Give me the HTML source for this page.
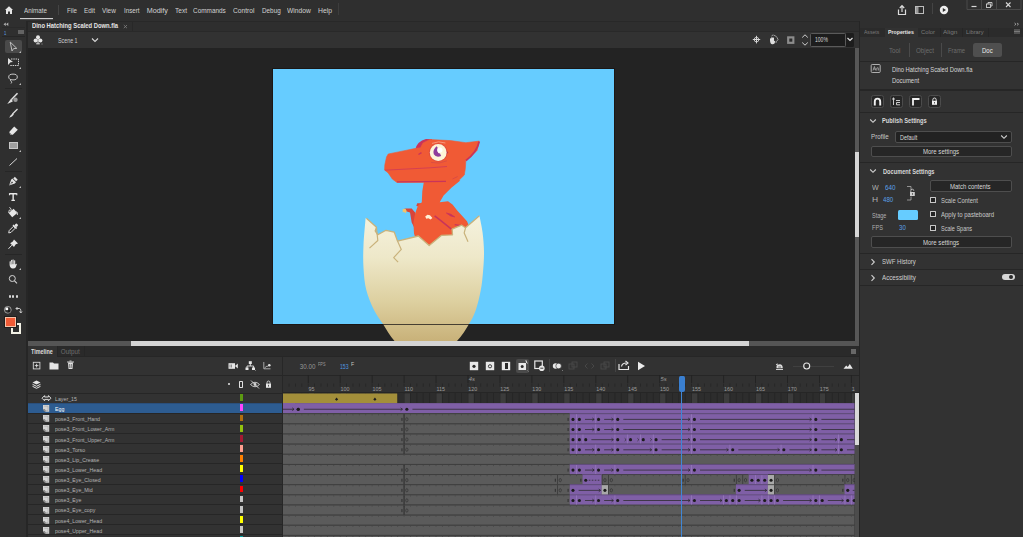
<!DOCTYPE html>
<html><head><meta charset="utf-8">
<style>
*{margin:0;padding:0;box-sizing:border-box}
html,body{width:1023px;height:537px;overflow:hidden;background:#2b2b2b;font-family:"Liberation Sans",sans-serif;color:#c8c8c8}
.a{position:absolute;display:block}
.t{position:absolute;white-space:nowrap;line-height:1;transform-origin:0 0}
</style></head><body>
<div class="a" style="left:0px;top:0px;width:1023px;height:21px;background:#2f2f2f;"></div>
<div class="a" style="left:0px;top:21px;width:26px;height:516px;background:#2f2f2f;"></div>
<div class="a" style="left:26px;top:21px;width:2px;height:516px;background:#262626;"></div>
<div class="a" style="left:28px;top:21px;width:831px;height:11px;background:#2e2e2e;"></div>
<div class="a" style="left:28px;top:21px;width:831px;height:1px;background:#282828;"></div>
<div class="a" style="left:132px;top:21px;width:1px;height:11px;background:#282828;"></div>
<div class="a" style="left:28px;top:32px;width:831px;height:16px;background:#323232;"></div>
<div class="a" style="left:28px;top:48px;width:827px;height:293px;background:#232323;"></div>
<div class="a" style="left:855px;top:48px;width:4px;height:293px;background:#575757;"></div>
<div class="a" style="left:855px;top:152px;width:4px;height:85px;background:#d6d6d6;"></div>
<div class="a" style="left:859px;top:21px;width:1px;height:516px;background:#252525;"></div>
<div class="a" style="left:272px;top:68px;width:343px;height:257px;background:#1b1716;"></div>
<div class="a" style="left:273px;top:69px;width:341px;height:255px;background:#66ccff;"></div>
<svg class="a" style="left:350px;top:130px;overflow:visible" width="150" height="212" viewBox="0 0 150 212"><path d="M65.5,19 Q67,11.5 76,9 L82,9.199999999999989 L82,12 Q74,14 71,18 Z" fill="#c9345a"/><path d="M54.50,78.50 L61.70,78.50 L65.10,82.40 L65.50,92.00 L64.00,96.90 L61.70,92.50 L60.00,82.40 L56.10,81.30 Z" fill="#d8453a"/><path d="M52.60,79.20 L55.50,78.80 L56.70,81.00 L55.50,83.30 L54.00,81.80 L52.80,82.50 Z" fill="#f3c46a"/><path d="M66.30,76.00 L67.20,73.30 L71.00,73.30 L71.50,77.00 Z" fill="#d8453a"/><path d="M74.00,51.00 L96.00,51.00 L102.00,50.00 L108.70,50.10 L110.30,50.50 L101.40,57.80 L93.60,65.60 L89.70,72.30 L98.00,71.20 L102.50,74.60 L107.00,80.20 L117.00,91.30 L119.00,96.00 L115.00,101.00 L102.00,106.00 L91.00,106.00 L79.00,117.00 L66.00,110.00 L64.00,103.60 L63.40,92.50 L65.10,83.50 L67.90,75.70 L71.80,72.30 L72.30,61.20 Z" fill="#f05a35"/><path d="M38.20,24.00 L48.40,21.90 L65.90,18.30 L70.50,17.80 L73.00,13.00 L80.00,9.60 L100.50,10.60 L115.90,12.70 L129.20,11.10 L127.10,20.40 L121.00,26.50 L115.90,30.10 L115.30,38.80 L114.30,45.00 L108.70,50.60 L96.00,52.30 L46.90,52.40 L42.30,49.00 L38.20,42.90 L34.60,40.00 L34.80,35.00 L36.50,27.00 Z" fill="#f05a35" stroke="#f05a35" stroke-width="0.6" stroke-linejoin="round"/><path d="M129.2,11.599999999999994 Q127,22 116,30.5" stroke="#c9345a" stroke-width="1.8" fill="none"/><path d="M34.80000000000001,40.19999999999999 L80,37.80000000000001 L97,36.5" stroke="#d23c55" stroke-width="0.9" fill="none"/><path d="M47,51.80000000000001 L96,51.30000000000001" stroke="#c9345a" stroke-width="1.3" fill="none"/><path d="M102.5,49 L107.69999999999999,46.5" stroke="#d84a45" stroke-width="0.9" fill="none"/><path d="M81,32.400000000000006 Q89,34.5 97,30.80000000000001" stroke="#d84a45" stroke-width="0.8" fill="none"/><path d="M82,13.400000000000006 Q88.5,10.5 95.39999999999998,13" stroke="#f7a48d" stroke-width="0.8" fill="none"/><path d="M68.5,24.5 L71.5,22.599999999999994" stroke="#c9345a" stroke-width="1.3" fill="none"/><circle cx="88.19999999999999" cy="22.5" r="9.3" fill="#dc4a3f"/><path d="M96.30000000000001,20.5 L98.30000000000001,22.5 L96.30000000000001,24.5 Z" fill="#b8304a"/><circle cx="88.19999999999999" cy="22.5" r="8.4" fill="#fdf4d8"/><path d="M86.60000000000002,16.19999999999999 Q82.19999999999999,20.19999999999999 83.80000000000001,24.19999999999999 Q86,28 91.19999999999999,26 L90,23.599999999999994 Q87.60000000000002,23.400000000000006 87.30000000000001,20.599999999999994 L87.60000000000002,17.5 Z" fill="#8f3c9c"/><circle cx="89.89999999999998" cy="20.099999999999994" r="2.6" fill="#ffffff"/><path d="M75.20,86.50 L77.50,84.80 L80.00,85.20 L82.40,88.00 L80.50,89.50 L78.50,88.20 L76.30,88.80 Z" fill="#fff1d6"/><path d="M84.60000000000002,85.80000000000001 L90.19999999999999,90.19999999999999 L101.39999999999998,99.19999999999999" stroke="#c9345a" stroke-width="1.5" fill="none"/><path d="M96.39999999999998,83 Q101,83.5 104.69999999999999,86.9 Q100,86.5 96.39999999999998,83 Z" fill="#c9345a" stroke="#c9345a" stroke-width="0.8"/><path d="M104.69999999999999,94.69999999999999 L112.60000000000002,95.80000000000001" stroke="#c9345a" stroke-width="1.2" fill="none"/><defs><linearGradient id="eg" x1="0" y1="0" x2="0" y2="1"><stop offset="0" stop-color="#f5f2de"/><stop offset="0.3" stop-color="#eee8c9"/><stop offset="0.62" stop-color="#ddd0a0"/><stop offset="0.9" stop-color="#c9b27a"/><stop offset="1" stop-color="#c2a96f"/></linearGradient></defs><path d="M16.399999999999977,88.30000000000001 L26.5,97.19999999999999 L25.19999999999999,101 L27.80000000000001,104.80000000000001 L36,100.30000000000001 L44.30000000000001,102.19999999999999 L47.5,111.1 L68.39999999999998,106 L79.19999999999999,115.6 L91.30000000000001,105.4 L102.5,104.80000000000001 L102.10000000000002,99.1 L111.69999999999999,95.19999999999999 L115.5,97.80000000000001 L129.39999999999998,85.69999999999999 C129.92,88.42 131.73,95.95 132.50,102.00 C133.27,108.05 133.92,115.33 134.00,122.00 C134.08,128.67 133.53,135.67 133.00,142.00 C132.47,148.33 132.00,153.67 130.80,160.00 C129.60,166.33 127.77,174.33 125.80,180.00 C123.83,185.67 122.13,188.83 119.00,194.00 C115.87,199.17 111.83,206.33 107.00,211.00 C102.17,215.67 95.33,219.83 90.00,222.00 C84.67,224.17 77.50,223.67 75.00,224.00 C72.50,223.67 65.08,224.17 60.00,222.00 C54.92,219.83 49.00,215.67 44.50,211.00 C40.00,206.33 36.42,199.17 33.00,194.00 C29.58,188.83 26.78,185.67 24.00,180.00 C21.22,174.33 18.05,167.00 16.30,160.00 C14.55,153.00 13.97,145.50 13.50,138.00 C13.03,130.50 13.15,123.28 13.50,115.00 C13.85,106.72 15.25,92.75 15.60,88.30 Z" fill="url(#eg)"/><path d="M16.399999999999977,88.30000000000001 L26.5,97.19999999999999 L25.19999999999999,101 L27.80000000000001,104.80000000000001 L36,100.30000000000001 L44.30000000000001,102.19999999999999 L47.5,111.1 L68.39999999999998,106 L79.19999999999999,115.6 L91.30000000000001,105.4 L102.5,104.80000000000001 L102.10000000000002,99.1 L111.69999999999999,95.19999999999999 L115.5,97.80000000000001 L129.39999999999998,85.69999999999999" stroke="#c9b27b" stroke-width="1.3" fill="none" stroke-linejoin="round"/><path d="M26.5,98.0 L27.8,110.5 L19.5,118.1" stroke="#c9b27b" stroke-width="1.2" fill="none" stroke-linejoin="round"/><path d="M47.5,111.0 L51.3,119.4 L43.7,127.6 L48.1,132.1" stroke="#c9b27b" stroke-width="1.2" fill="none" stroke-linejoin="round"/><path d="M115.5,98.0 L114.2,102.9 L118.0,111.8" stroke="#c9b27b" stroke-width="1.2" fill="none" stroke-linejoin="round"/><rect x="0" y="194" width="150" height="0.9" fill="#1b1716" opacity="0.85"/></svg>
<div class="a" style="left:28px;top:341px;width:831px;height:5px;background:#555555;"></div>
<div class="a" style="left:131px;top:341px;width:618px;height:5px;background:#d4d4d4;"></div>
<div class="a" style="left:28px;top:346px;width:831px;height:191px;background:#323232;"></div>
<div class="a" style="left:28px;top:346px;width:831px;height:10px;background:#2a2a2a;"></div>
<div class="a" style="left:28px;top:346px;width:29px;height:10px;background:#323232;"></div>
<div class="a" style="left:860px;top:21px;width:163px;height:516px;background:#323232;"></div>
<svg class="a" style="left:4px;top:5px;" width="10" height="10" viewBox="0 0 10 10"><path d="M1 5 L5 1.2 L9 5 L8 5 L8 9 L6 9 L6 6.5 L4 6.5 L4 9 L2 9 L2 5 Z" fill="#e6e6e6"/></svg>
<div class="t" style="left:24.18px;top:6.61px;font-size:7.2px;color:#d2d2d2;transform:scaleX(0.874);">Animate</div>
<div class="a" style="left:20px;top:18px;width:33px;height:1px;background:#cdcdcd;"></div>
<div class="a" style="left:20px;top:19px;width:33px;height:1px;background:#4a4a4a;"></div>
<div class="a" style="left:58px;top:5px;width:1px;height:10px;background:#444;"></div>
<div class="t" style="left:66.58px;top:6.61px;font-size:7.2px;color:#d2d2d2;transform:scaleX(0.866);">File</div>
<div class="t" style="left:84.18px;top:6.61px;font-size:7.2px;color:#d2d2d2;transform:scaleX(0.883);">Edit</div>
<div class="t" style="left:102.47px;top:6.61px;font-size:7.2px;color:#d2d2d2;transform:scaleX(0.896);">View</div>
<div class="t" style="left:123.68px;top:6.61px;font-size:7.2px;color:#d2d2d2;transform:scaleX(0.864);">Insert</div>
<div class="t" style="left:146.65px;top:6.61px;font-size:7.2px;color:#d2d2d2;">Modify</div>
<div class="t" style="left:174.67px;top:6.61px;font-size:7.2px;color:#d2d2d2;transform:scaleX(0.915);">Text</div>
<div class="t" style="left:193.18px;top:6.61px;font-size:7.2px;color:#d2d2d2;transform:scaleX(0.893);">Commands</div>
<div class="t" style="left:233.02px;top:6.61px;font-size:7.2px;color:#d2d2d2;transform:scaleX(0.926);">Control</div>
<div class="t" style="left:261.53px;top:6.61px;font-size:7.2px;color:#d2d2d2;transform:scaleX(0.882);">Debug</div>
<div class="t" style="left:287.27px;top:6.61px;font-size:7.2px;color:#d2d2d2;transform:scaleX(0.927);">Window</div>
<div class="t" style="left:318.26px;top:6.61px;font-size:7.2px;color:#d2d2d2;transform:scaleX(0.945);">Help</div>
<div class="a" style="left:338px;top:3px;width:1px;height:12px;background:#3d3d3d;"></div>
<svg class="a" style="left:896px;top:4px;" width="12" height="12" viewBox="0 0 12 12"><path d="M2.5 5.5 L2.5 10.5 L9.5 10.5 L9.5 5.5" fill="none" stroke="#dcdcdc" stroke-width="1.2"/><path d="M6 8 L6 1.8 M3.8 4 L6 1.6 L8.2 4" fill="none" stroke="#dcdcdc" stroke-width="1.2"/></svg>
<svg class="a" style="left:914px;top:5px;" width="12" height="10" viewBox="0 0 12 10"><rect x="1.5" y="1.5" width="8" height="7" fill="none" stroke="#bdbdbd" stroke-width="1"/><rect x="2" y="2" width="2.5" height="6" fill="#9a9a9a"/></svg>
<div class="a" style="left:932px;top:3px;width:1px;height:11px;background:#444;"></div>
<svg class="a" style="left:939px;top:5px;" width="10" height="10" viewBox="0 0 10 10"><circle cx="5" cy="5" r="4.2" fill="#eeeeee"/><path d="M3.8 2.9 L7 5 L3.8 7.1 Z" fill="#2f2f2f"/></svg>
<svg class="a" style="left:966px;top:0px;" width="57" height="11" viewBox="0 0 57 11"><path d="M1 0 L1 9.5 L55 9.5 L55 0" fill="none" stroke="#4a4a4a" stroke-width="1"/><path d="M15.5 0 L15.5 9.5 M30.5 0 L30.5 9.5" stroke="#4a4a4a" stroke-width="1"/><path d="M5.5 6.5 L10.5 6.5" stroke="#d8d8d8" stroke-width="1.2"/><rect x="20.5" y="4" width="4" height="3.5" fill="none" stroke="#d0d0d0" stroke-width="0.9"/><path d="M22 4 L22 2.5 L26 2.5 L26 6 L24.5 6" fill="none" stroke="#d0d0d0" stroke-width="0.9"/><path d="M40 2.5 L44.5 7 M44.5 2.5 L40 7" stroke="#d8d8d8" stroke-width="1.1"/></svg>
<svg class="a" style="left:2px;top:21px;" width="8" height="6" viewBox="0 0 8 6"><path d="M3.8 1.5 L1.5 3.2 L3.8 4.9 Z M6.3 1.5 L4 3.2 L6.3 4.9 Z" fill="#b0b0b0"/></svg>
<div class="a" style="left:2px;top:27px;width:23px;height:1px;background:#2a2a2a;"></div>
<div class="t" style="left:4.16px;top:29.92px;font-size:6.0px;color:#5a9ee6;transform:scaleX(0.684);">1</div>
<div class="a" style="left:18px;top:30px;width:6px;height:4px;background:#636363;"></div>
<div class="a" style="left:2px;top:36px;width:23px;height:1px;background:#262626;"></div>
<div class="a" style="left:5px;top:39.5px;width:17px;height:13.5px;background:#4a4a4a;border-radius:2px"></div>
<svg class="a" style="left:6px;top:40px;" width="14" height="13" viewBox="0 0 14 13"><path d="M4.2 2 L10.8 8.4 L7.6 8.6 L6 11 Z" fill="none" stroke="#bdbdbd" stroke-width="1"/></svg>
<svg class="a" style="left:19px;top:50.5px;" width="2" height="2" viewBox="0 0 2 2"><path d="M0 2 L2 0 L2 2 Z" fill="#bdbdbd"/></svg>
<svg class="a" style="left:6px;top:56px;" width="14" height="12" viewBox="0 0 14 12"><path d="M2 2 L7 6 L4.5 6.3 L2 9 Z" fill="#e0e0e0"/><path d="M5 3 L12.5 3 L12.5 9.5 L4 9.5" fill="none" stroke="#cfcfcf" stroke-width="1" stroke-dasharray="1.5 0.8"/></svg>
<svg class="a" style="left:19px;top:66.5px;" width="2" height="2" viewBox="0 0 2 2"><path d="M0 2 L2 0 L2 2 Z" fill="#bdbdbd"/></svg>
<svg class="a" style="left:6px;top:72px;" width="14" height="13" viewBox="0 0 14 13"><ellipse cx="7" cy="5" rx="4.3" ry="2.9" fill="none" stroke="#c8c8c8" stroke-width="1"/><path d="M5 7.5 Q3.5 9 5.5 9.5 Q6 11 5 11.5" fill="none" stroke="#c8c8c8" stroke-width="1"/></svg>
<svg class="a" style="left:19px;top:82.5px;" width="2" height="2" viewBox="0 0 2 2"><path d="M0 2 L2 0 L2 2 Z" fill="#bdbdbd"/></svg>
<div class="a" style="left:5px;top:87.5px;width:17px;height:1px;background:#262626;"></div>
<svg class="a" style="left:6px;top:92px;" width="14" height="12" viewBox="0 0 14 12"><path d="M11.5 1.2 L5.5 7.5" stroke="#e0e0e0" stroke-width="1.5"/><path d="M5.5 7 L3 10.5 L6.5 9" fill="#e0e0e0" stroke="#e0e0e0" stroke-width="1.2"/><circle cx="9.5" cy="7.8" r="2.2" fill="#9a9a9a"/></svg>
<svg class="a" style="left:6px;top:108px;" width="14" height="11" viewBox="0 0 14 11"><path d="M11.5 1 L6.5 6" stroke="#e0e0e0" stroke-width="1.2"/><path d="M6.8 5.2 L4.5 7.5 L3.2 9.8 L6 8.5 L7.8 6.5 Z" fill="#e0e0e0"/></svg>
<svg class="a" style="left:6px;top:124px;" width="14" height="12" viewBox="0 0 14 12"><path d="M3 8.3 L8.2 2.5 L11.8 5.8 L6.8 10.8 L4.5 10.8 Z" fill="#e6e6e6"/><path d="M3 8.3 L5.2 10.6" stroke="#2f2f2f" stroke-width="0.7"/></svg>
<div class="a" style="left:8.7px;top:141.7px;width:9.4px;height:7.4px;background:#9d9d9d;border:1px solid #c6c6c6"></div>
<svg class="a" style="left:19px;top:149.5px;" width="2" height="2" viewBox="0 0 2 2"><path d="M0 2 L2 0 L2 2 Z" fill="#bdbdbd"/></svg>
<svg class="a" style="left:6px;top:157px;" width="14" height="10" viewBox="0 0 14 10"><path d="M3.5 8.5 L11 1.5" stroke="#d6d6d6" stroke-width="1"/></svg>
<div class="a" style="left:5px;top:171px;width:17px;height:1px;background:#262626;"></div>
<svg class="a" style="left:6px;top:174px;" width="14" height="13" viewBox="0 0 14 13"><g transform="translate(7.3,7.2) rotate(45)"><path d="M0 6 L-2.6 0.5 L-2.6 -1.2 L2.6 -1.2 L2.6 0.5 Z" fill="#e4e4e4"/><rect x="-2" y="-4.2" width="4" height="2.3" fill="#e4e4e4"/><circle cx="0" cy="1.8" r="0.8" fill="#2f2f2f"/><path d="M0 2.5 L0 6" stroke="#2f2f2f" stroke-width="0.5"/></g></svg>
<svg class="a" style="left:19px;top:185.5px;" width="2" height="2" viewBox="0 0 2 2"><path d="M0 2 L2 0 L2 2 Z" fill="#bdbdbd"/></svg>
<svg class="a" style="left:6px;top:191px;" width="14" height="11" viewBox="0 0 14 11"><path d="M3.5 2.8 L10.8 2.8 M7.15 2.8 L7.15 9.2 M5.4 9.4 L8.9 9.4" stroke="#e8e8e8" stroke-width="1.4" fill="none"/><path d="M3.5 2.2 L3.5 4.3 M10.8 2.2 L10.8 4.3" stroke="#e8e8e8" stroke-width="1.1"/></svg>
<svg class="a" style="left:6px;top:206px;" width="14" height="12" viewBox="0 0 14 12"><g transform="translate(6.8,6.8) rotate(-40)"><rect x="-3.3" y="-2.6" width="6.6" height="5.6" fill="#e6e6e6"/><path d="M-3.3 -2.6 L-1 -4.3 L1.2 -2.6" fill="none" stroke="#e6e6e6" stroke-width="0.8"/></g><path d="M3.5 1.2 L5.2 3.2" stroke="#e6e6e6" stroke-width="0.9"/><path d="M10.5 5.5 Q12 7 11.3 9" stroke="#cfcfcf" stroke-width="1" fill="none"/></svg>
<svg class="a" style="left:19px;top:217px;" width="2" height="2" viewBox="0 0 2 2"><path d="M0 2 L2 0 L2 2 Z" fill="#bdbdbd"/></svg>
<svg class="a" style="left:6px;top:222px;" width="14" height="13" viewBox="0 0 14 13"><g transform="translate(7.3,6.3) rotate(45)"><path d="M-1.3 -1.5 L-1.3 4.5 L0 6.5 L1.3 4.5 L1.3 -1.5 Z" fill="none" stroke="#e4e4e4" stroke-width="0.9"/><rect x="-2.5" y="-3" width="5" height="1.6" fill="#e4e4e4"/><rect x="-1.5" y="-5.8" width="3" height="3" rx="1.2" fill="#e4e4e4"/></g></svg>
<svg class="a" style="left:6px;top:238px;" width="14" height="13" viewBox="0 0 14 13"><path d="M8 1.5 L12 5.5 L9.8 6.3 L8 9 L4.2 5.2 L6.8 3.5 Z" fill="#e6e6e6"/><path d="M5.8 7.2 L2.5 10.8" stroke="#e0e0e0" stroke-width="1"/></svg>
<div class="a" style="left:5px;top:253.5px;width:17px;height:1px;background:#262626;"></div>
<svg class="a" style="left:6px;top:258px;" width="14" height="12" viewBox="0 0 14 12"><path d="M3.6 7 L3.6 3.6 Q4.3 2.8 5 3.6 L5 2.2 Q5.7 1.4 6.4 2.2 L6.4 1.8 Q7.1 1 7.8 1.8 L7.8 2.5 Q8.5 1.8 9.2 2.5 L9.2 6.8 Q10 5.2 10.9 6 L9.8 9.2 Q8.7 10.8 6.6 10.6 Q4.1 10.4 3.6 7 Z" fill="#e8e8e8"/><path d="M5 3.6 L5 6.5 M6.4 2.2 L6.4 6.2 M7.8 1.8 L7.8 6.2" stroke="#2f2f2f" stroke-width="0.45"/></svg>
<svg class="a" style="left:19px;top:267.5px;" width="2" height="2" viewBox="0 0 2 2"><path d="M0 2 L2 0 L2 2 Z" fill="#bdbdbd"/></svg>
<svg class="a" style="left:6px;top:272px;" width="14" height="13" viewBox="0 0 14 13"><circle cx="6.3" cy="6.5" r="3" fill="none" stroke="#d6d6d6" stroke-width="1"/><path d="M8.5 8.8 L11 11.3" stroke="#d6d6d6" stroke-width="1.1"/></svg>
<div class="a" style="left:8.5px;top:295.4px;width:2.2px;height:2.2px;background:#d6d6d6;border-radius:1.1px"></div>
<div class="a" style="left:12.3px;top:295.4px;width:2.2px;height:2.2px;background:#d6d6d6;border-radius:1.1px"></div>
<div class="a" style="left:16.099999999999998px;top:295.4px;width:2.2px;height:2.2px;background:#d6d6d6;border-radius:1.1px"></div>
<svg class="a" style="left:3px;top:305px;" width="10" height="10" viewBox="0 0 10 10"><circle cx="4.8" cy="4.8" r="3.4" fill="none" stroke="#9a9a9a" stroke-width="1"/><rect x="2.5" y="2.5" width="2.6" height="2.6" fill="#ffffff"/><rect x="5" y="5" width="2.3" height="2.3" fill="#1a1a1a"/></svg>
<svg class="a" style="left:14px;top:306px;" width="9" height="9" viewBox="0 0 9 9"><path d="M2 2.5 L3.5 1 M2 2.5 L3.5 4 M2 2.5 L5.5 2.5 Q6.8 2.8 6.8 4.5 L6.8 6.5" fill="none" stroke="#cfcfcf" stroke-width="1"/><path d="M5.5 5.5 L6.8 7 L8 5.5" fill="none" stroke="#cfcfcf" stroke-width="1"/></svg>
<div class="a" style="left:10.8px;top:323px;width:10.2px;height:10.5px;background:#f3f2e6;"></div>
<div class="a" style="left:12.8px;top:325px;width:6.2px;height:6.5px;background:#2f2f2f;"></div>
<div class="a" style="left:4.3px;top:316.3px;width:12.5px;height:11.7px;background:#1e1e1e;"></div>
<div class="a" style="left:5.1px;top:317px;width:11px;height:10.2px;background:#f05b36;border:0.6px solid #f7c2a8"></div>
<div class="t" style="left:32.10px;top:23.24px;font-size:6.8px;color:#e4e4e4;font-weight:bold;transform:scaleX(0.860);">Dino Hatching Scaled Down.fla</div>
<svg class="a" style="left:122px;top:23px;" width="7" height="7" viewBox="0 0 7 7"><path d="M1.8 2 L5 5.2 M5 2 L1.8 5.2" stroke="#808080" stroke-width="0.8"/></svg>
<div class="a" style="left:28px;top:31px;width:831px;height:1px;background:#292929;"></div>
<svg class="a" style="left:32px;top:34px;" width="12" height="12" viewBox="0 0 12 12"><circle cx="6" cy="3.3" r="2" fill="#e6e6e6"/><circle cx="3.6" cy="6.4" r="2" fill="#e6e6e6"/><circle cx="8.4" cy="6.4" r="2" fill="#e6e6e6"/><path d="M6 5 L6 9.5 M4.2 9.8 L7.8 9.8" stroke="#e6e6e6" stroke-width="1"/><path d="M9.5 10 L10.5 10" stroke="#bbb" stroke-width="0.8"/></svg>
<div class="t" style="left:57.61px;top:37.27px;font-size:7px;color:#cfcfcf;transform:scaleX(0.762);">Scene 1</div>
<svg class="a" style="left:91px;top:37px;" width="8" height="6" viewBox="0 0 8 6"><path d="M1 1.5 L4 4.5 L7 1.5" fill="none" stroke="#d8d8d8" stroke-width="1.1"/></svg>
<svg class="a" style="left:750px;top:33px;" width="13" height="13" viewBox="0 0 13 13"><path d="M6.5 2.8 L6.5 10.4 M2.8 6.5 L10.2 6.5" stroke="#d8d8d8" stroke-width="1"/><circle cx="6.5" cy="6.6" r="2.3" fill="none" stroke="#d0d0d0" stroke-width="0.9"/></svg>
<svg class="a" style="left:767px;top:34px;" width="13" height="12" viewBox="0 0 13 12"><path d="M3 6.5 L3 4.5 Q3.5 3.8 4.2 4.5 L4.2 3.6 Q4.9 2.9 5.6 3.6 L5.6 3.8 Q6.3 3.1 7 3.8 L7 7.3 Q7.7 6.4 8.4 7.1 L7.5 9.5 Q6.6 10.4 5.2 10.2 Q3.2 10 3 6.5 Z" fill="#dedede"/><path d="M4.5 2 L6.2 0.8" stroke="#bbb" stroke-width="0.8"/><path d="M6.5 1.2 Q9 1.5 10 3.5 L11 5.5 L9.5 7.5 L8.8 9" fill="none" stroke="#a8a8a8" stroke-width="0.9"/></svg>
<svg class="a" style="left:786px;top:35px;" width="10" height="10" viewBox="0 0 10 10"><rect x="1.1" y="1.3" width="7.3" height="7.6" fill="#8c8c8c"/><rect x="3.3" y="3.5" width="3" height="3.2" fill="#2a2a2a"/></svg>
<svg class="a" style="left:801px;top:33px;" width="8" height="14" viewBox="0 0 8 14"><path d="M1.2 4.5 L4 1.8 L6.8 4.5 M1.2 9.5 L4 12.2 L6.8 9.5" fill="none" stroke="#cfcfcf" stroke-width="1"/></svg>
<div class="a" style="left:810px;top:33px;width:36px;height:13.5px;background:#1d1d1d;border:1px solid #5a5a5a;border-radius:1.5px"></div>
<div class="t" style="left:814.82px;top:37.00px;font-size:6.5px;color:#d8d8d8;transform:scaleX(0.773);">100%</div>
<div class="a" style="left:846px;top:33px;width:8px;height:13.5px;background:#1d1d1d;border-radius:0 1.5px 1.5px 0"></div>
<svg class="a" style="left:846px;top:35px;" width="8" height="9" viewBox="0 0 8 9"><path d="M1.5 3 L4 5.5 L6.5 3" fill="none" stroke="#e0e0e0" stroke-width="1.2"/></svg>
<div class="t" style="left:31.31px;top:349.07px;font-size:6.3px;color:#dedede;font-weight:bold;transform:scaleX(0.860);">Timeline</div>
<div class="t" style="left:60.78px;top:349.07px;font-size:6.3px;color:#6e6e6e;">Output</div>
<div class="a" style="left:57px;top:346px;width:1px;height:10px;background:#262626;"></div>
<div class="a" style="left:84px;top:346px;width:1px;height:10px;background:#262626;"></div>
<div class="a" style="left:851px;top:349px;width:5px;height:4.5px;background:#686868;"></div>
<div class="a" style="left:57px;top:356px;width:802px;height:1px;background:#262626;"></div>
<svg class="a" style="left:31px;top:360px;" width="11" height="11" viewBox="0 0 11 11"><rect x="2.3" y="2.3" width="6.6" height="6.6" fill="none" stroke="#d6d6d6" stroke-width="0.9"/><path d="M5.6 3.8 L5.6 7.4 M3.8 5.6 L7.4 5.6" stroke="#e0e0e0" stroke-width="0.9"/></svg>
<svg class="a" style="left:48px;top:360px;" width="12" height="11" viewBox="0 0 12 11"><path d="M1.5 2.5 L5 2.5 L6 3.5 L10.5 3.5 L10.5 9.5 L1.5 9.5 Z" fill="#e6e6e6"/></svg>
<svg class="a" style="left:65px;top:359px;" width="11" height="12" viewBox="0 0 11 12"><path d="M3 3.5 L8 3.5 L7.5 10 L3.5 10 Z" fill="#e0e0e0"/><path d="M2 3 L9 3 M4.5 2 L6.5 2" stroke="#e0e0e0" stroke-width="0.9"/><path d="M4.6 5 L4.8 9 M6.4 5 L6.2 9" stroke="#333" stroke-width="0.6"/></svg>
<svg class="a" style="left:227px;top:361px;" width="12" height="10" viewBox="0 0 12 10"><rect x="1.5" y="2.2" width="6.5" height="5.6" fill="#e6e6e6"/><path d="M8 5 L10.8 2.5 L10.8 7.5 Z" fill="#e6e6e6"/><path d="M3 3.5 L3 6.5 M4.5 3.5 L4.5 6.5" stroke="#333" stroke-width="0.5"/></svg>
<svg class="a" style="left:244px;top:360px;" width="13" height="12" viewBox="0 0 13 12"><rect x="4.8" y="1.2" width="3" height="2.8" fill="#e6e6e6"/><path d="M6.3 4 L6.3 6 M3 8 L3 6 L9.6 6 L9.6 8" fill="none" stroke="#e6e6e6" stroke-width="0.9"/><rect x="1.5" y="7.5" width="3" height="2.5" fill="#e6e6e6"/><rect x="8" y="7.5" width="3" height="2.5" fill="#e6e6e6"/><path d="M11 10 L12 11" stroke="#aaa" stroke-width="0.6"/></svg>
<svg class="a" style="left:261px;top:360px;" width="12" height="11" viewBox="0 0 12 11"><path d="M2.8 2 L2.8 8.8 L9.5 8.8" fill="none" stroke="#c4c4c4" stroke-width="0.8"/><path d="M3.5 8 L6 6 L7 6.5" fill="none" stroke="#c4c4c4" stroke-width="0.8"/><circle cx="8.3" cy="5.2" r="1.3" fill="#e0e0e0"/></svg>
<div class="t" style="left:299.78px;top:363.87px;font-size:6.3px;color:#969696;">30.00</div>
<div class="t" style="left:317.67px;top:361.97px;font-size:5.0px;color:#9a9a9a;transform:scaleX(0.767);">FPS</div>
<div class="t" style="left:339.62px;top:363.87px;font-size:6.3px;color:#4f95e0;transform:scaleX(0.814);">153</div>
<div class="t" style="left:350.82px;top:361.97px;font-size:5.0px;color:#c4c4c4;transform:scaleX(1.032);">F</div>
<svg class="a" style="left:468px;top:360px;" width="12" height="12" viewBox="0 0 12 12"><rect x="1.8" y="1.8" width="8.4" height="8.4" fill="#e8e8e8"/><circle cx="6" cy="6.3" r="1.6" fill="#2a2a2a"/></svg>
<svg class="a" style="left:484px;top:360px;" width="12" height="12" viewBox="0 0 12 12"><rect x="1.8" y="1.8" width="8.4" height="8.4" fill="#e8e8e8"/><circle cx="6" cy="6.3" r="1.6" fill="none" stroke="#2a2a2a" stroke-width="0.9"/></svg>
<svg class="a" style="left:500px;top:360px;" width="12" height="12" viewBox="0 0 12 12"><rect x="1.8" y="1.8" width="8.4" height="8.4" fill="#e8e8e8"/><rect x="5" y="3" width="3" height="6" fill="#2a2a2a"/></svg>
<div class="a" style="left:516.3px;top:359.3px;width:13.1px;height:13.3px;background:#4a4a4a;border-radius:2px"></div>
<svg class="a" style="left:516px;top:359px;" width="14" height="14" viewBox="0 0 14 14"><rect x="2.5" y="4" width="7.5" height="7" fill="#e8e8e8"/><circle cx="6.2" cy="7.5" r="1.5" fill="#2a2a2a"/><path d="M9.5 1.5 L11.5 4.5 M10.5 1.5 L10.5 4" stroke="#e8e8e8" stroke-width="0.7"/><path d="M11.5 11.5 L12.5 12.5" stroke="#bbb" stroke-width="0.6"/></svg>
<svg class="a" style="left:533px;top:359px;" width="13" height="13" viewBox="0 0 13 13"><rect x="1.8" y="2" width="7.5" height="7.5" fill="none" stroke="#e8e8e8" stroke-width="1.2"/><circle cx="8.8" cy="9.2" r="2.8" fill="#e8e8e8"/><path d="M7.3 9.2 L10.3 9.2" stroke="#2a2a2a" stroke-width="0.9"/></svg>
<div class="a" style="left:549px;top:359px;width:1px;height:13px;background:#444;"></div>
<svg class="a" style="left:551px;top:360px;" width="13" height="12" viewBox="0 0 13 12"><circle cx="4.6" cy="6" r="2.8" fill="#e8e8e8"/><circle cx="7.6" cy="6" r="2.8" fill="#e8e8e8" stroke="#2a2a2a" stroke-width="0.6"/><path d="M11 10 L12 11" stroke="#aaa" stroke-width="0.6"/></svg>
<svg class="a" style="left:567px;top:360px;" width="13" height="12" viewBox="0 0 13 12"><rect x="2" y="4" width="5" height="5" fill="none" stroke="#4a4a4a" stroke-width="0.9"/><rect x="5" y="2" width="5" height="5" fill="none" stroke="#4a4a4a" stroke-width="0.9"/></svg>
<svg class="a" style="left:583px;top:360px;" width="13" height="12" viewBox="0 0 13 12"><path d="M2 6 L4.5 3.5 M2 6 L4.5 8.5 M11 6 L8.5 3.5 M11 6 L8.5 8.5" fill="none" stroke="#4a4a4a" stroke-width="0.9"/></svg>
<svg class="a" style="left:599px;top:360px;" width="13" height="12" viewBox="0 0 13 12"><rect x="2" y="4" width="5" height="5" fill="none" stroke="#4a4a4a" stroke-width="0.9"/><rect x="5" y="2" width="5" height="5" fill="none" stroke="#4a4a4a" stroke-width="0.9"/></svg>
<div class="a" style="left:615px;top:359px;width:1px;height:13px;background:#444;"></div>
<svg class="a" style="left:617px;top:359px;" width="14" height="13" viewBox="0 0 14 13"><path d="M2 5 L2 10.5 L11.5 10.5 L11.5 7" fill="none" stroke="#e8e8e8" stroke-width="1.2"/><path d="M4.5 7.5 Q5 4 9.5 4" fill="none" stroke="#e8e8e8" stroke-width="1.2"/><path d="M8.5 2 L11 4 L8.5 6" fill="none" stroke="#e8e8e8" stroke-width="1.1"/></svg>
<svg class="a" style="left:635px;top:360px;" width="12" height="12" viewBox="0 0 12 12"><path d="M3 1.8 L10 6 L3 10.2 Z" fill="#ececec"/></svg>
<svg class="a" style="left:773px;top:360px;" width="12" height="12" viewBox="0 0 12 12"><path d="M3 9.5 L10 9.5" stroke="#dcdcdc" stroke-width="0.9"/><path d="M3.5 8.3 L3.5 6.2 Q4 4.2 6.8 4.2 Q9.6 4.2 9.8 8.3 Z" fill="#dcdcdc"/><path d="M5.2 7 L8 7" stroke="#333" stroke-width="0.7"/><path d="M2.8 4.6 L4.6 3.2 L4.6 6 Z" fill="#dcdcdc"/></svg>
<div class="a" style="left:793px;top:365.5px;width:41px;height:1px;background:#404040;"></div>
<svg class="a" style="left:801px;top:360px;" width="12" height="12" viewBox="0 0 12 12"><circle cx="5.7" cy="6" r="3" fill="#323232" stroke="#e6e6e6" stroke-width="1.1"/></svg>
<svg class="a" style="left:842px;top:361px;" width="12" height="10" viewBox="0 0 12 10"><path d="M1.5 7.8 L4.2 4.5 L5.8 6 L7.8 3 L10.8 7.8 Z" fill="#e8e8e8"/></svg>
<div class="a" style="left:28px;top:375px;width:831px;height:1px;background:#262626;"></div>
<svg class="a" style="left:31px;top:379px;" width="11" height="11" viewBox="0 0 11 11"><path d="M5.5 1.5 L9.5 3.5 L5.5 5.5 L1.5 3.5 Z" fill="#e6e6e6"/><path d="M1.5 5.3 L5.5 7.3 L9.5 5.3 M1.5 7.3 L5.5 9.3 L9.5 7.3" fill="none" stroke="#e6e6e6" stroke-width="1"/></svg>
<div class="a" style="left:228px;top:383.3px;width:2px;height:2px;background:#e6e6e6;border-radius:1px"></div>
<div class="a" style="left:239px;top:381px;width:4px;height:6.5px;background:#323232;border:1px solid #e0e0e0;border-radius:0.8px"></div>
<svg class="a" style="left:249px;top:379px;" width="12" height="11" viewBox="0 0 12 11"><path d="M1.5 5.5 Q6 1 10.5 5.5 Q6 10 1.5 5.5 Z" fill="none" stroke="#d6d6d6" stroke-width="0.9"/><circle cx="6" cy="5.5" r="1.4" fill="#d6d6d6"/><path d="M2 1.5 L10 9.5" stroke="#d6d6d6" stroke-width="0.9"/></svg>
<svg class="a" style="left:264px;top:379px;" width="9" height="10" viewBox="0 0 9 10"><path d="M3 5 L3 3.8 Q3 2 4.5 2 Q6 2 6 3.8 L6 5" fill="none" stroke="#e6e6e6" stroke-width="0.8"/><rect x="2" y="4.6" width="5" height="4.2" fill="#e6e6e6"/><rect x="4.1" y="5.8" width="0.8" height="1.8" fill="#333"/></svg>
<div class="a" style="left:283px;top:375.5px;width:572px;height:17px;background:#313131;"></div>
<svg class="a" style="left:283px;top:375px;" width="576" height="18" viewBox="0 0 576 18"><rect x="5.63" y="8.5" width="0.8" height="3.2" fill="#262626"/><rect x="12.02" y="8.5" width="0.8" height="3.2" fill="#262626"/><rect x="18.41" y="8.5" width="0.8" height="3.2" fill="#262626"/><rect x="24.80" y="0" width="0.9" height="8" fill="#222"/><rect x="24.80" y="8.5" width="0.8" height="3.2" fill="#262626"/><rect x="31.19" y="8.5" width="0.8" height="3.2" fill="#262626"/><rect x="37.58" y="8.5" width="0.8" height="3.2" fill="#262626"/><rect x="43.97" y="8.5" width="0.8" height="3.2" fill="#262626"/><rect x="50.36" y="8.5" width="0.8" height="3.2" fill="#262626"/><rect x="56.75" y="0" width="0.9" height="8" fill="#222"/><rect x="56.75" y="8.5" width="0.8" height="3.2" fill="#262626"/><rect x="63.14" y="8.5" width="0.8" height="3.2" fill="#262626"/><rect x="69.53" y="8.5" width="0.8" height="3.2" fill="#262626"/><rect x="75.92" y="8.5" width="0.8" height="3.2" fill="#262626"/><rect x="82.31" y="8.5" width="0.8" height="3.2" fill="#262626"/><rect x="88.70" y="0" width="0.9" height="8" fill="#222"/><rect x="88.70" y="8.5" width="0.8" height="3.2" fill="#262626"/><rect x="95.09" y="8.5" width="0.8" height="3.2" fill="#262626"/><rect x="101.48" y="8.5" width="0.8" height="3.2" fill="#262626"/><rect x="107.87" y="8.5" width="0.8" height="3.2" fill="#262626"/><rect x="114.26" y="8.5" width="0.8" height="3.2" fill="#262626"/><rect x="120.65" y="0" width="0.9" height="8" fill="#222"/><rect x="120.65" y="8.5" width="0.8" height="3.2" fill="#262626"/><rect x="127.04" y="8.5" width="0.8" height="3.2" fill="#262626"/><rect x="133.43" y="8.5" width="0.8" height="3.2" fill="#262626"/><rect x="139.82" y="8.5" width="0.8" height="3.2" fill="#262626"/><rect x="146.21" y="8.5" width="0.8" height="3.2" fill="#262626"/><rect x="152.60" y="0" width="0.9" height="8" fill="#222"/><rect x="152.60" y="8.5" width="0.8" height="3.2" fill="#262626"/><rect x="158.99" y="8.5" width="0.8" height="3.2" fill="#262626"/><rect x="165.38" y="8.5" width="0.8" height="3.2" fill="#262626"/><rect x="171.77" y="8.5" width="0.8" height="3.2" fill="#262626"/><rect x="178.16" y="8.5" width="0.8" height="3.2" fill="#262626"/><rect x="184.55" y="0" width="0.9" height="8" fill="#222"/><rect x="184.55" y="8.5" width="0.8" height="3.2" fill="#262626"/><rect x="190.94" y="8.5" width="0.8" height="3.2" fill="#262626"/><rect x="197.33" y="8.5" width="0.8" height="3.2" fill="#262626"/><rect x="203.72" y="8.5" width="0.8" height="3.2" fill="#262626"/><rect x="210.11" y="8.5" width="0.8" height="3.2" fill="#262626"/><rect x="216.50" y="0" width="0.9" height="8" fill="#222"/><rect x="216.50" y="8.5" width="0.8" height="3.2" fill="#262626"/><rect x="222.89" y="8.5" width="0.8" height="3.2" fill="#262626"/><rect x="229.28" y="8.5" width="0.8" height="3.2" fill="#262626"/><rect x="235.67" y="8.5" width="0.8" height="3.2" fill="#262626"/><rect x="242.06" y="8.5" width="0.8" height="3.2" fill="#262626"/><rect x="248.45" y="0" width="0.9" height="8" fill="#222"/><rect x="248.45" y="8.5" width="0.8" height="3.2" fill="#262626"/><rect x="254.84" y="8.5" width="0.8" height="3.2" fill="#262626"/><rect x="261.23" y="8.5" width="0.8" height="3.2" fill="#262626"/><rect x="267.62" y="8.5" width="0.8" height="3.2" fill="#262626"/><rect x="274.01" y="8.5" width="0.8" height="3.2" fill="#262626"/><rect x="280.40" y="0" width="0.9" height="8" fill="#222"/><rect x="280.40" y="8.5" width="0.8" height="3.2" fill="#262626"/><rect x="286.79" y="8.5" width="0.8" height="3.2" fill="#262626"/><rect x="293.18" y="8.5" width="0.8" height="3.2" fill="#262626"/><rect x="299.57" y="8.5" width="0.8" height="3.2" fill="#262626"/><rect x="305.96" y="8.5" width="0.8" height="3.2" fill="#262626"/><rect x="312.35" y="0" width="0.9" height="8" fill="#222"/><rect x="312.35" y="8.5" width="0.8" height="3.2" fill="#262626"/><rect x="318.74" y="8.5" width="0.8" height="3.2" fill="#262626"/><rect x="325.13" y="8.5" width="0.8" height="3.2" fill="#262626"/><rect x="331.52" y="8.5" width="0.8" height="3.2" fill="#262626"/><rect x="337.91" y="8.5" width="0.8" height="3.2" fill="#262626"/><rect x="344.30" y="0" width="0.9" height="8" fill="#222"/><rect x="344.30" y="8.5" width="0.8" height="3.2" fill="#262626"/><rect x="350.69" y="8.5" width="0.8" height="3.2" fill="#262626"/><rect x="357.08" y="8.5" width="0.8" height="3.2" fill="#262626"/><rect x="363.47" y="8.5" width="0.8" height="3.2" fill="#262626"/><rect x="369.86" y="8.5" width="0.8" height="3.2" fill="#262626"/><rect x="376.25" y="0" width="0.9" height="8" fill="#222"/><rect x="376.25" y="8.5" width="0.8" height="3.2" fill="#262626"/><rect x="382.64" y="8.5" width="0.8" height="3.2" fill="#262626"/><rect x="389.03" y="8.5" width="0.8" height="3.2" fill="#262626"/><rect x="395.42" y="8.5" width="0.8" height="3.2" fill="#262626"/><rect x="401.81" y="8.5" width="0.8" height="3.2" fill="#262626"/><rect x="408.20" y="0" width="0.9" height="8" fill="#222"/><rect x="408.20" y="8.5" width="0.8" height="3.2" fill="#262626"/><rect x="414.59" y="8.5" width="0.8" height="3.2" fill="#262626"/><rect x="420.98" y="8.5" width="0.8" height="3.2" fill="#262626"/><rect x="427.37" y="8.5" width="0.8" height="3.2" fill="#262626"/><rect x="433.76" y="8.5" width="0.8" height="3.2" fill="#262626"/><rect x="440.15" y="0" width="0.9" height="8" fill="#222"/><rect x="440.15" y="8.5" width="0.8" height="3.2" fill="#262626"/><rect x="446.54" y="8.5" width="0.8" height="3.2" fill="#262626"/><rect x="452.93" y="8.5" width="0.8" height="3.2" fill="#262626"/><rect x="459.32" y="8.5" width="0.8" height="3.2" fill="#262626"/><rect x="465.71" y="8.5" width="0.8" height="3.2" fill="#262626"/><rect x="472.10" y="0" width="0.9" height="8" fill="#222"/><rect x="472.10" y="8.5" width="0.8" height="3.2" fill="#262626"/><rect x="478.49" y="8.5" width="0.8" height="3.2" fill="#262626"/><rect x="484.88" y="8.5" width="0.8" height="3.2" fill="#262626"/><rect x="491.27" y="8.5" width="0.8" height="3.2" fill="#262626"/><rect x="497.66" y="8.5" width="0.8" height="3.2" fill="#262626"/><rect x="504.05" y="0" width="0.9" height="8" fill="#222"/><rect x="504.05" y="8.5" width="0.8" height="3.2" fill="#262626"/><rect x="510.44" y="8.5" width="0.8" height="3.2" fill="#262626"/><rect x="516.83" y="8.5" width="0.8" height="3.2" fill="#262626"/><rect x="523.22" y="8.5" width="0.8" height="3.2" fill="#262626"/><rect x="529.61" y="8.5" width="0.8" height="3.2" fill="#262626"/><rect x="536.00" y="0" width="0.9" height="8" fill="#222"/><rect x="536.00" y="8.5" width="0.8" height="3.2" fill="#262626"/><rect x="542.39" y="8.5" width="0.8" height="3.2" fill="#262626"/><rect x="548.78" y="8.5" width="0.8" height="3.2" fill="#262626"/><rect x="555.17" y="8.5" width="0.8" height="3.2" fill="#262626"/><rect x="561.56" y="8.5" width="0.8" height="3.2" fill="#262626"/><rect x="567.95" y="0" width="0.9" height="8" fill="#222"/><rect x="567.95" y="8.5" width="0.8" height="3.2" fill="#262626"/></svg>
<div class="a" style="left:0;top:0;width:854.5px;height:537px;overflow:hidden">
<div class="t" style="left:308.61px;top:387.03px;font-size:5.4px;color:#9c9c9c;">95</div>
<div class="t" style="left:340.56px;top:387.03px;font-size:5.4px;color:#9c9c9c;">100</div>
<div class="t" style="left:372.51px;top:387.03px;font-size:5.4px;color:#9c9c9c;">105</div>
<div class="t" style="left:404.46px;top:387.03px;font-size:5.4px;color:#9c9c9c;">110</div>
<div class="t" style="left:436.41px;top:387.03px;font-size:5.4px;color:#9c9c9c;">115</div>
<div class="t" style="left:468.36px;top:387.03px;font-size:5.4px;color:#9c9c9c;">120</div>
<div class="t" style="left:500.31px;top:387.03px;font-size:5.4px;color:#9c9c9c;">125</div>
<div class="t" style="left:532.26px;top:387.03px;font-size:5.4px;color:#9c9c9c;">130</div>
<div class="t" style="left:564.21px;top:387.03px;font-size:5.4px;color:#9c9c9c;">135</div>
<div class="t" style="left:596.16px;top:387.03px;font-size:5.4px;color:#9c9c9c;">140</div>
<div class="t" style="left:628.11px;top:387.03px;font-size:5.4px;color:#9c9c9c;">145</div>
<div class="t" style="left:660.06px;top:387.03px;font-size:5.4px;color:#9c9c9c;">150</div>
<div class="t" style="left:692.01px;top:387.03px;font-size:5.4px;color:#9c9c9c;">155</div>
<div class="t" style="left:723.96px;top:387.03px;font-size:5.4px;color:#9c9c9c;">160</div>
<div class="t" style="left:755.91px;top:387.03px;font-size:5.4px;color:#9c9c9c;">165</div>
<div class="t" style="left:787.86px;top:387.03px;font-size:5.4px;color:#9c9c9c;">170</div>
<div class="t" style="left:819.81px;top:387.03px;font-size:5.4px;color:#9c9c9c;">175</div>
<div class="t" style="left:851.76px;top:387.03px;font-size:5.4px;color:#9c9c9c;">180</div>
</div>
<div class="t" style="left:468.85px;top:377.09px;font-size:5.8px;color:#9c9c9c;font-style:italic;">4s</div>
<div class="t" style="left:660.55px;top:377.09px;font-size:5.8px;color:#9c9c9c;font-style:italic;">5s</div>
<div class="a" style="left:283px;top:392px;width:576px;height:1px;background:#262626;"></div>
<div class="a" style="left:28px;top:392.5px;width:254px;height:10.34px;background:#323232;"></div>
<div class="a" style="left:28px;top:392.5px;width:254px;height:1px;background:#262626;"></div>
<svg class="a" style="left:41px;top:393.5px;" width="11" height="9" viewBox="0 0 11 9"><path d="M1 4.2 L3.6 1.6 L3.6 3 L7.4 3 L7.4 1.6 L10 4.2 L7.4 6.8 L7.4 5.4 L3.6 5.4 L3.6 6.8 Z" fill="none" stroke="#dcdcdc" stroke-width="1"/></svg>
<div class="t" style="left:55.12px;top:395.95px;font-size:6.2px;color:#b4b4b4;transform:scaleX(0.850);">Layer_15</div>
<div class="a" style="left:240px;top:394.3px;width:3px;height:6.8px;background:#5c9a12;"></div>
<div class="a" style="left:28px;top:402.64px;width:254px;height:10.34px;background:#2d5c91;"></div>
<div class="a" style="left:28px;top:402.64px;width:254px;height:1px;background:#2a4f7c;"></div>
<svg class="a" style="left:42px;top:404.14px;" width="9" height="9" viewBox="0 0 9 9"><path d="M1 1 L7.2 1 L7.2 7.8 L3 7.8 L1 5.8 Z" fill="#d4d4d4"/><path d="M2.2 2.2 L6 2.2 L6 6.6 L3.5 6.6" fill="none" stroke="#9a9a9a" stroke-width="0.5"/><path d="M1 5.8 L3 5.8 L3 7.8" fill="none" stroke="#323232" stroke-width="0.6"/></svg>
<div class="t" style="left:55.12px;top:406.09px;font-size:6.2px;color:#ffffff;transform:scaleX(0.850);">Egg</div>
<div class="a" style="left:240px;top:404.44px;width:3px;height:6.8px;background:#ff45ff;"></div>
<div class="a" style="left:28px;top:412.78px;width:254px;height:10.34px;background:#323232;"></div>
<div class="a" style="left:28px;top:412.78px;width:254px;height:1px;background:#262626;"></div>
<svg class="a" style="left:42px;top:414.28px;" width="9" height="9" viewBox="0 0 9 9"><path d="M1 1 L7.2 1 L7.2 7.8 L3 7.8 L1 5.8 Z" fill="#d4d4d4"/><path d="M2.2 2.2 L6 2.2 L6 6.6 L3.5 6.6" fill="none" stroke="#9a9a9a" stroke-width="0.5"/><path d="M1 5.8 L3 5.8 L3 7.8" fill="none" stroke="#323232" stroke-width="0.6"/></svg>
<div class="t" style="left:55.12px;top:416.23px;font-size:6.2px;color:#b4b4b4;transform:scaleX(0.850);">pose3_Front_Hand</div>
<div class="a" style="left:240px;top:414.58px;width:3px;height:6.8px;background:#b06e10;"></div>
<div class="a" style="left:28px;top:422.92px;width:254px;height:10.34px;background:#323232;"></div>
<div class="a" style="left:28px;top:422.92px;width:254px;height:1px;background:#262626;"></div>
<svg class="a" style="left:42px;top:424.42px;" width="9" height="9" viewBox="0 0 9 9"><path d="M1 1 L7.2 1 L7.2 7.8 L3 7.8 L1 5.8 Z" fill="#d4d4d4"/><path d="M2.2 2.2 L6 2.2 L6 6.6 L3.5 6.6" fill="none" stroke="#9a9a9a" stroke-width="0.5"/><path d="M1 5.8 L3 5.8 L3 7.8" fill="none" stroke="#323232" stroke-width="0.6"/></svg>
<div class="t" style="left:55.12px;top:426.37px;font-size:6.2px;color:#b4b4b4;transform:scaleX(0.850);">pose3_Front_Lower_Arm</div>
<div class="a" style="left:240px;top:424.72px;width:3px;height:6.8px;background:#92c20e;"></div>
<div class="a" style="left:28px;top:433.06px;width:254px;height:10.34px;background:#323232;"></div>
<div class="a" style="left:28px;top:433.06px;width:254px;height:1px;background:#262626;"></div>
<svg class="a" style="left:42px;top:434.56px;" width="9" height="9" viewBox="0 0 9 9"><path d="M1 1 L7.2 1 L7.2 7.8 L3 7.8 L1 5.8 Z" fill="#d4d4d4"/><path d="M2.2 2.2 L6 2.2 L6 6.6 L3.5 6.6" fill="none" stroke="#9a9a9a" stroke-width="0.5"/><path d="M1 5.8 L3 5.8 L3 7.8" fill="none" stroke="#323232" stroke-width="0.6"/></svg>
<div class="t" style="left:55.12px;top:436.51px;font-size:6.2px;color:#b4b4b4;transform:scaleX(0.850);">pose3_Front_Upper_Arm</div>
<div class="a" style="left:240px;top:434.86px;width:3px;height:6.8px;background:#a51a33;"></div>
<div class="a" style="left:28px;top:443.2px;width:254px;height:10.34px;background:#323232;"></div>
<div class="a" style="left:28px;top:443.2px;width:254px;height:1px;background:#262626;"></div>
<svg class="a" style="left:42px;top:444.7px;" width="9" height="9" viewBox="0 0 9 9"><path d="M1 1 L7.2 1 L7.2 7.8 L3 7.8 L1 5.8 Z" fill="#d4d4d4"/><path d="M2.2 2.2 L6 2.2 L6 6.6 L3.5 6.6" fill="none" stroke="#9a9a9a" stroke-width="0.5"/><path d="M1 5.8 L3 5.8 L3 7.8" fill="none" stroke="#323232" stroke-width="0.6"/></svg>
<div class="t" style="left:55.12px;top:446.65px;font-size:6.2px;color:#b4b4b4;transform:scaleX(0.850);">pose3_Torso</div>
<div class="a" style="left:240px;top:445.0px;width:3px;height:6.8px;background:#ff9f90;"></div>
<div class="a" style="left:28px;top:453.34000000000003px;width:254px;height:10.34px;background:#323232;"></div>
<div class="a" style="left:28px;top:453.34000000000003px;width:254px;height:1px;background:#262626;"></div>
<svg class="a" style="left:42px;top:454.84000000000003px;" width="9" height="9" viewBox="0 0 9 9"><path d="M1 1 L7.2 1 L7.2 7.8 L3 7.8 L1 5.8 Z" fill="#d4d4d4"/><path d="M2.2 2.2 L6 2.2 L6 6.6 L3.5 6.6" fill="none" stroke="#9a9a9a" stroke-width="0.5"/><path d="M1 5.8 L3 5.8 L3 7.8" fill="none" stroke="#323232" stroke-width="0.6"/></svg>
<div class="t" style="left:55.12px;top:456.79px;font-size:6.2px;color:#b4b4b4;transform:scaleX(0.850);">pose3_Lip_Crease</div>
<div class="a" style="left:240px;top:455.14000000000004px;width:3px;height:6.8px;background:#ff8000;"></div>
<div class="a" style="left:28px;top:463.48px;width:254px;height:10.34px;background:#323232;"></div>
<div class="a" style="left:28px;top:463.48px;width:254px;height:1px;background:#262626;"></div>
<svg class="a" style="left:42px;top:464.98px;" width="9" height="9" viewBox="0 0 9 9"><path d="M1 1 L7.2 1 L7.2 7.8 L3 7.8 L1 5.8 Z" fill="#d4d4d4"/><path d="M2.2 2.2 L6 2.2 L6 6.6 L3.5 6.6" fill="none" stroke="#9a9a9a" stroke-width="0.5"/><path d="M1 5.8 L3 5.8 L3 7.8" fill="none" stroke="#323232" stroke-width="0.6"/></svg>
<div class="t" style="left:55.12px;top:466.93px;font-size:6.2px;color:#b4b4b4;transform:scaleX(0.850);">pose3_Lower_Head</div>
<div class="a" style="left:240px;top:465.28000000000003px;width:3px;height:6.8px;background:#ffff00;"></div>
<div class="a" style="left:28px;top:473.62px;width:254px;height:10.34px;background:#323232;"></div>
<div class="a" style="left:28px;top:473.62px;width:254px;height:1px;background:#262626;"></div>
<svg class="a" style="left:42px;top:475.12px;" width="9" height="9" viewBox="0 0 9 9"><path d="M1 1 L7.2 1 L7.2 7.8 L3 7.8 L1 5.8 Z" fill="#d4d4d4"/><path d="M2.2 2.2 L6 2.2 L6 6.6 L3.5 6.6" fill="none" stroke="#9a9a9a" stroke-width="0.5"/><path d="M1 5.8 L3 5.8 L3 7.8" fill="none" stroke="#323232" stroke-width="0.6"/></svg>
<div class="t" style="left:55.12px;top:477.07px;font-size:6.2px;color:#b4b4b4;transform:scaleX(0.850);">pose3_Eye_Closed</div>
<div class="a" style="left:240px;top:475.42px;width:3px;height:6.8px;background:#0000ff;"></div>
<div class="a" style="left:28px;top:483.76px;width:254px;height:10.34px;background:#323232;"></div>
<div class="a" style="left:28px;top:483.76px;width:254px;height:1px;background:#262626;"></div>
<svg class="a" style="left:42px;top:485.26px;" width="9" height="9" viewBox="0 0 9 9"><path d="M1 1 L7.2 1 L7.2 7.8 L3 7.8 L1 5.8 Z" fill="#d4d4d4"/><path d="M2.2 2.2 L6 2.2 L6 6.6 L3.5 6.6" fill="none" stroke="#9a9a9a" stroke-width="0.5"/><path d="M1 5.8 L3 5.8 L3 7.8" fill="none" stroke="#323232" stroke-width="0.6"/></svg>
<div class="t" style="left:55.12px;top:487.21px;font-size:6.2px;color:#b4b4b4;transform:scaleX(0.850);">pose3_Eye_Mid</div>
<div class="a" style="left:240px;top:485.56px;width:3px;height:6.8px;background:#ff0000;"></div>
<div class="a" style="left:28px;top:493.9px;width:254px;height:10.34px;background:#323232;"></div>
<div class="a" style="left:28px;top:493.9px;width:254px;height:1px;background:#262626;"></div>
<svg class="a" style="left:42px;top:495.4px;" width="9" height="9" viewBox="0 0 9 9"><path d="M1 1 L7.2 1 L7.2 7.8 L3 7.8 L1 5.8 Z" fill="#d4d4d4"/><path d="M2.2 2.2 L6 2.2 L6 6.6 L3.5 6.6" fill="none" stroke="#9a9a9a" stroke-width="0.5"/><path d="M1 5.8 L3 5.8 L3 7.8" fill="none" stroke="#323232" stroke-width="0.6"/></svg>
<div class="t" style="left:55.12px;top:497.35px;font-size:6.2px;color:#b4b4b4;transform:scaleX(0.850);">pose3_Eye</div>
<div class="a" style="left:240px;top:495.7px;width:3px;height:6.8px;background:#c4c4c4;"></div>
<div class="a" style="left:28px;top:504.04px;width:254px;height:10.34px;background:#323232;"></div>
<div class="a" style="left:28px;top:504.04px;width:254px;height:1px;background:#262626;"></div>
<svg class="a" style="left:42px;top:505.54px;" width="9" height="9" viewBox="0 0 9 9"><path d="M1 1 L7.2 1 L7.2 7.8 L3 7.8 L1 5.8 Z" fill="#d4d4d4"/><path d="M2.2 2.2 L6 2.2 L6 6.6 L3.5 6.6" fill="none" stroke="#9a9a9a" stroke-width="0.5"/><path d="M1 5.8 L3 5.8 L3 7.8" fill="none" stroke="#323232" stroke-width="0.6"/></svg>
<div class="t" style="left:55.12px;top:507.49px;font-size:6.2px;color:#b4b4b4;transform:scaleX(0.850);">pose3_Eye_copy</div>
<div class="a" style="left:240px;top:505.84000000000003px;width:3px;height:6.8px;background:#c4c4c4;"></div>
<div class="a" style="left:28px;top:514.1800000000001px;width:254px;height:10.34px;background:#323232;"></div>
<div class="a" style="left:28px;top:514.1800000000001px;width:254px;height:1px;background:#262626;"></div>
<svg class="a" style="left:42px;top:515.6800000000001px;" width="9" height="9" viewBox="0 0 9 9"><path d="M1 1 L7.2 1 L7.2 7.8 L3 7.8 L1 5.8 Z" fill="#d4d4d4"/><path d="M2.2 2.2 L6 2.2 L6 6.6 L3.5 6.6" fill="none" stroke="#9a9a9a" stroke-width="0.5"/><path d="M1 5.8 L3 5.8 L3 7.8" fill="none" stroke="#323232" stroke-width="0.6"/></svg>
<div class="t" style="left:55.12px;top:517.63px;font-size:6.2px;color:#b4b4b4;transform:scaleX(0.850);">pose4_Lower_Head</div>
<div class="a" style="left:240px;top:515.98px;width:3px;height:6.8px;background:#ffff00;"></div>
<div class="a" style="left:28px;top:524.3199999999999px;width:254px;height:10.34px;background:#323232;"></div>
<div class="a" style="left:28px;top:524.3199999999999px;width:254px;height:1px;background:#262626;"></div>
<svg class="a" style="left:42px;top:525.8199999999999px;" width="9" height="9" viewBox="0 0 9 9"><path d="M1 1 L7.2 1 L7.2 7.8 L3 7.8 L1 5.8 Z" fill="#d4d4d4"/><path d="M2.2 2.2 L6 2.2 L6 6.6 L3.5 6.6" fill="none" stroke="#9a9a9a" stroke-width="0.5"/><path d="M1 5.8 L3 5.8 L3 7.8" fill="none" stroke="#323232" stroke-width="0.6"/></svg>
<div class="t" style="left:55.12px;top:527.77px;font-size:6.2px;color:#b4b4b4;transform:scaleX(0.850);">pose4_Upper_Head</div>
<div class="a" style="left:240px;top:526.1199999999999px;width:3px;height:6.8px;background:#c4c4c4;"></div>
<div class="a" style="left:28px;top:534.46px;width:254px;height:10.34px;background:#323232;"></div>
<div class="a" style="left:28px;top:534.46px;width:254px;height:1px;background:#262626;"></div>
<svg class="a" style="left:42px;top:535.96px;" width="9" height="9" viewBox="0 0 9 9"><path d="M1 1 L7.2 1 L7.2 7.8 L3 7.8 L1 5.8 Z" fill="#d4d4d4"/><path d="M2.2 2.2 L6 2.2 L6 6.6 L3.5 6.6" fill="none" stroke="#9a9a9a" stroke-width="0.5"/><path d="M1 5.8 L3 5.8 L3 7.8" fill="none" stroke="#323232" stroke-width="0.6"/></svg>
<div class="t" style="left:55.12px;top:537.91px;font-size:6.2px;color:#b4b4b4;transform:scaleX(0.850);">pose4_Nose</div>
<div class="a" style="left:240px;top:536.26px;width:3px;height:6.8px;background:#00a0a0;"></div>
<div class="a" style="left:282px;top:356.5px;width:1px;height:181px;background:#272727;"></div>
<svg class="a" style="left:283px;top:392.5px;overflow:hidden" width="576" height="150" viewBox="0 0 576 150"><rect x="0.00" y="0.00" width="571.50" height="10.14" fill="#2d2d2d"/><rect x="5.63" y="0.00" width="0.80" height="10.14" fill="#252525"/><rect x="12.02" y="0.00" width="0.80" height="10.14" fill="#252525"/><rect x="18.41" y="0.00" width="0.80" height="10.14" fill="#252525"/><rect x="24.80" y="0.50" width="6.39" height="9.64" fill="#3c3c3c"/><rect x="24.80" y="0.00" width="0.80" height="10.14" fill="#252525"/><rect x="31.19" y="0.00" width="0.80" height="10.14" fill="#252525"/><rect x="37.58" y="0.00" width="0.80" height="10.14" fill="#252525"/><rect x="43.97" y="0.00" width="0.80" height="10.14" fill="#252525"/><rect x="50.36" y="0.00" width="0.80" height="10.14" fill="#252525"/><rect x="56.75" y="0.50" width="6.39" height="9.64" fill="#3c3c3c"/><rect x="56.75" y="0.00" width="0.80" height="10.14" fill="#252525"/><rect x="63.14" y="0.00" width="0.80" height="10.14" fill="#252525"/><rect x="69.53" y="0.00" width="0.80" height="10.14" fill="#252525"/><rect x="75.92" y="0.00" width="0.80" height="10.14" fill="#252525"/><rect x="82.31" y="0.00" width="0.80" height="10.14" fill="#252525"/><rect x="88.70" y="0.50" width="6.39" height="9.64" fill="#3c3c3c"/><rect x="88.70" y="0.00" width="0.80" height="10.14" fill="#252525"/><rect x="95.09" y="0.00" width="0.80" height="10.14" fill="#252525"/><rect x="101.48" y="0.00" width="0.80" height="10.14" fill="#252525"/><rect x="107.87" y="0.00" width="0.80" height="10.14" fill="#252525"/><rect x="114.26" y="0.00" width="0.80" height="10.14" fill="#252525"/><rect x="120.65" y="0.50" width="6.39" height="9.64" fill="#3c3c3c"/><rect x="120.65" y="0.00" width="0.80" height="10.14" fill="#252525"/><rect x="127.04" y="0.00" width="0.80" height="10.14" fill="#252525"/><rect x="133.43" y="0.00" width="0.80" height="10.14" fill="#252525"/><rect x="139.82" y="0.00" width="0.80" height="10.14" fill="#252525"/><rect x="146.21" y="0.00" width="0.80" height="10.14" fill="#252525"/><rect x="152.60" y="0.50" width="6.39" height="9.64" fill="#3c3c3c"/><rect x="152.60" y="0.00" width="0.80" height="10.14" fill="#252525"/><rect x="158.99" y="0.00" width="0.80" height="10.14" fill="#252525"/><rect x="165.38" y="0.00" width="0.80" height="10.14" fill="#252525"/><rect x="171.77" y="0.00" width="0.80" height="10.14" fill="#252525"/><rect x="178.16" y="0.00" width="0.80" height="10.14" fill="#252525"/><rect x="184.55" y="0.50" width="6.39" height="9.64" fill="#3c3c3c"/><rect x="184.55" y="0.00" width="0.80" height="10.14" fill="#252525"/><rect x="190.94" y="0.00" width="0.80" height="10.14" fill="#252525"/><rect x="197.33" y="0.00" width="0.80" height="10.14" fill="#252525"/><rect x="203.72" y="0.00" width="0.80" height="10.14" fill="#252525"/><rect x="210.11" y="0.00" width="0.80" height="10.14" fill="#252525"/><rect x="216.50" y="0.50" width="6.39" height="9.64" fill="#3c3c3c"/><rect x="216.50" y="0.00" width="0.80" height="10.14" fill="#252525"/><rect x="222.89" y="0.00" width="0.80" height="10.14" fill="#252525"/><rect x="229.28" y="0.00" width="0.80" height="10.14" fill="#252525"/><rect x="235.67" y="0.00" width="0.80" height="10.14" fill="#252525"/><rect x="242.06" y="0.00" width="0.80" height="10.14" fill="#252525"/><rect x="248.45" y="0.50" width="6.39" height="9.64" fill="#3c3c3c"/><rect x="248.45" y="0.00" width="0.80" height="10.14" fill="#252525"/><rect x="254.84" y="0.00" width="0.80" height="10.14" fill="#252525"/><rect x="261.23" y="0.00" width="0.80" height="10.14" fill="#252525"/><rect x="267.62" y="0.00" width="0.80" height="10.14" fill="#252525"/><rect x="274.01" y="0.00" width="0.80" height="10.14" fill="#252525"/><rect x="280.40" y="0.50" width="6.39" height="9.64" fill="#3c3c3c"/><rect x="280.40" y="0.00" width="0.80" height="10.14" fill="#252525"/><rect x="286.79" y="0.00" width="0.80" height="10.14" fill="#252525"/><rect x="293.18" y="0.00" width="0.80" height="10.14" fill="#252525"/><rect x="299.57" y="0.00" width="0.80" height="10.14" fill="#252525"/><rect x="305.96" y="0.00" width="0.80" height="10.14" fill="#252525"/><rect x="312.35" y="0.50" width="6.39" height="9.64" fill="#3c3c3c"/><rect x="312.35" y="0.00" width="0.80" height="10.14" fill="#252525"/><rect x="318.74" y="0.00" width="0.80" height="10.14" fill="#252525"/><rect x="325.13" y="0.00" width="0.80" height="10.14" fill="#252525"/><rect x="331.52" y="0.00" width="0.80" height="10.14" fill="#252525"/><rect x="337.91" y="0.00" width="0.80" height="10.14" fill="#252525"/><rect x="344.30" y="0.50" width="6.39" height="9.64" fill="#3c3c3c"/><rect x="344.30" y="0.00" width="0.80" height="10.14" fill="#252525"/><rect x="350.69" y="0.00" width="0.80" height="10.14" fill="#252525"/><rect x="357.08" y="0.00" width="0.80" height="10.14" fill="#252525"/><rect x="363.47" y="0.00" width="0.80" height="10.14" fill="#252525"/><rect x="369.86" y="0.00" width="0.80" height="10.14" fill="#252525"/><rect x="376.25" y="0.50" width="6.39" height="9.64" fill="#3c3c3c"/><rect x="376.25" y="0.00" width="0.80" height="10.14" fill="#252525"/><rect x="382.64" y="0.00" width="0.80" height="10.14" fill="#252525"/><rect x="389.03" y="0.00" width="0.80" height="10.14" fill="#252525"/><rect x="395.42" y="0.00" width="0.80" height="10.14" fill="#252525"/><rect x="401.81" y="0.00" width="0.80" height="10.14" fill="#252525"/><rect x="408.20" y="0.50" width="6.39" height="9.64" fill="#3c3c3c"/><rect x="408.20" y="0.00" width="0.80" height="10.14" fill="#252525"/><rect x="414.59" y="0.00" width="0.80" height="10.14" fill="#252525"/><rect x="420.98" y="0.00" width="0.80" height="10.14" fill="#252525"/><rect x="427.37" y="0.00" width="0.80" height="10.14" fill="#252525"/><rect x="433.76" y="0.00" width="0.80" height="10.14" fill="#252525"/><rect x="440.15" y="0.50" width="6.39" height="9.64" fill="#3c3c3c"/><rect x="440.15" y="0.00" width="0.80" height="10.14" fill="#252525"/><rect x="446.54" y="0.00" width="0.80" height="10.14" fill="#252525"/><rect x="452.93" y="0.00" width="0.80" height="10.14" fill="#252525"/><rect x="459.32" y="0.00" width="0.80" height="10.14" fill="#252525"/><rect x="465.71" y="0.00" width="0.80" height="10.14" fill="#252525"/><rect x="472.10" y="0.50" width="6.39" height="9.64" fill="#3c3c3c"/><rect x="472.10" y="0.00" width="0.80" height="10.14" fill="#252525"/><rect x="478.49" y="0.00" width="0.80" height="10.14" fill="#252525"/><rect x="484.88" y="0.00" width="0.80" height="10.14" fill="#252525"/><rect x="491.27" y="0.00" width="0.80" height="10.14" fill="#252525"/><rect x="497.66" y="0.00" width="0.80" height="10.14" fill="#252525"/><rect x="504.05" y="0.50" width="6.39" height="9.64" fill="#3c3c3c"/><rect x="504.05" y="0.00" width="0.80" height="10.14" fill="#252525"/><rect x="510.44" y="0.00" width="0.80" height="10.14" fill="#252525"/><rect x="516.83" y="0.00" width="0.80" height="10.14" fill="#252525"/><rect x="523.22" y="0.00" width="0.80" height="10.14" fill="#252525"/><rect x="529.61" y="0.00" width="0.80" height="10.14" fill="#252525"/><rect x="536.00" y="0.50" width="6.39" height="9.64" fill="#3c3c3c"/><rect x="536.00" y="0.00" width="0.80" height="10.14" fill="#252525"/><rect x="542.39" y="0.00" width="0.80" height="10.14" fill="#252525"/><rect x="548.78" y="0.00" width="0.80" height="10.14" fill="#252525"/><rect x="555.17" y="0.00" width="0.80" height="10.14" fill="#252525"/><rect x="561.56" y="0.00" width="0.80" height="10.14" fill="#252525"/><rect x="567.95" y="0.50" width="3.55" height="9.64" fill="#3c3c3c"/><rect x="567.95" y="0.00" width="0.80" height="10.14" fill="#252525"/><rect x="0.00" y="0.50" width="114.26" height="9.84" fill="#a38f3a"/><path d="M51.96 6.40 L53.56 4.60 L55.16 6.40 L53.56 7.80 Z" fill="#1e1e1e"/><path d="M90.29 6.40 L91.89 4.60 L93.49 6.40 L91.89 7.80 Z" fill="#1e1e1e"/><rect x="-0.76" y="10.14" width="572.26" height="10.14" fill="#7f5fa6"/><circle cx="15.22" cy="16.24" r="1.55" fill="#1c1c1c"/><circle cx="123.84" cy="16.24" r="1.55" fill="#1c1c1c"/><path d="M20.82 16.24 L119.44 16.24 M117.64 14.84 L119.44 16.24 L117.64 17.64" fill="none" stroke="#2a2a2a" stroke-width="0.75"/><path d="M129.44 16.24 L571.50 16.24" stroke="#2a2a2a" stroke-width="0.75"/><rect x="0.00" y="10.14" width="12.02" height="10.14" fill="#7f5fa6"/><path d="M0 16.24 L11.02 16.24 M9.22 14.84 L11.02 16.24 L9.22 17.64" fill="none" stroke="#2a2a2a" stroke-width="0.75"/><circle cx="15.22" cy="16.24" r="1.55" fill="#1c1c1c"/><rect x="0.00" y="20.28" width="571.50" height="10.14" fill="#5b5b5b"/><rect x="0.00" y="20.28" width="571.50" height="0.90" fill="#3c3c3c"/><rect x="5.63" y="21.18" width="0.80" height="1.20" fill="#474747"/><rect x="12.02" y="21.18" width="0.80" height="1.20" fill="#474747"/><rect x="18.41" y="21.18" width="0.80" height="1.20" fill="#474747"/><rect x="24.80" y="21.18" width="0.80" height="1.20" fill="#474747"/><rect x="31.19" y="21.18" width="0.80" height="1.20" fill="#474747"/><rect x="37.58" y="21.18" width="0.80" height="1.20" fill="#474747"/><rect x="43.97" y="21.18" width="0.80" height="1.20" fill="#474747"/><rect x="50.36" y="21.18" width="0.80" height="1.20" fill="#474747"/><rect x="56.75" y="21.18" width="0.80" height="1.20" fill="#474747"/><rect x="63.14" y="21.18" width="0.80" height="1.20" fill="#474747"/><rect x="69.53" y="21.18" width="0.80" height="1.20" fill="#474747"/><rect x="75.92" y="21.18" width="0.80" height="1.20" fill="#474747"/><rect x="82.31" y="21.18" width="0.80" height="1.20" fill="#474747"/><rect x="88.70" y="21.18" width="0.80" height="1.20" fill="#474747"/><rect x="95.09" y="21.18" width="0.80" height="1.20" fill="#474747"/><rect x="101.48" y="21.18" width="0.80" height="1.20" fill="#474747"/><rect x="107.87" y="21.18" width="0.80" height="1.20" fill="#474747"/><rect x="114.26" y="21.18" width="0.80" height="1.20" fill="#474747"/><rect x="120.65" y="21.18" width="0.80" height="1.20" fill="#474747"/><rect x="127.04" y="21.18" width="0.80" height="1.20" fill="#474747"/><rect x="133.43" y="21.18" width="0.80" height="1.20" fill="#474747"/><rect x="139.82" y="21.18" width="0.80" height="1.20" fill="#474747"/><rect x="146.21" y="21.18" width="0.80" height="1.20" fill="#474747"/><rect x="152.60" y="21.18" width="0.80" height="1.20" fill="#474747"/><rect x="158.99" y="21.18" width="0.80" height="1.20" fill="#474747"/><rect x="165.38" y="21.18" width="0.80" height="1.20" fill="#474747"/><rect x="171.77" y="21.18" width="0.80" height="1.20" fill="#474747"/><rect x="178.16" y="21.18" width="0.80" height="1.20" fill="#474747"/><rect x="184.55" y="21.18" width="0.80" height="1.20" fill="#474747"/><rect x="190.94" y="21.18" width="0.80" height="1.20" fill="#474747"/><rect x="197.33" y="21.18" width="0.80" height="1.20" fill="#474747"/><rect x="203.72" y="21.18" width="0.80" height="1.20" fill="#474747"/><rect x="210.11" y="21.18" width="0.80" height="1.20" fill="#474747"/><rect x="216.50" y="21.18" width="0.80" height="1.20" fill="#474747"/><rect x="222.89" y="21.18" width="0.80" height="1.20" fill="#474747"/><rect x="229.28" y="21.18" width="0.80" height="1.20" fill="#474747"/><rect x="235.67" y="21.18" width="0.80" height="1.20" fill="#474747"/><rect x="242.06" y="21.18" width="0.80" height="1.20" fill="#474747"/><rect x="248.45" y="21.18" width="0.80" height="1.20" fill="#474747"/><rect x="254.84" y="21.18" width="0.80" height="1.20" fill="#474747"/><rect x="261.23" y="21.18" width="0.80" height="1.20" fill="#474747"/><rect x="267.62" y="21.18" width="0.80" height="1.20" fill="#474747"/><rect x="274.01" y="21.18" width="0.80" height="1.20" fill="#474747"/><rect x="280.40" y="21.18" width="0.80" height="1.20" fill="#474747"/><rect x="286.79" y="21.18" width="0.80" height="1.20" fill="#474747"/><rect x="293.18" y="21.18" width="0.80" height="1.20" fill="#474747"/><rect x="299.57" y="21.18" width="0.80" height="1.20" fill="#474747"/><rect x="305.96" y="21.18" width="0.80" height="1.20" fill="#474747"/><rect x="312.35" y="21.18" width="0.80" height="1.20" fill="#474747"/><rect x="318.74" y="21.18" width="0.80" height="1.20" fill="#474747"/><rect x="325.13" y="21.18" width="0.80" height="1.20" fill="#474747"/><rect x="331.52" y="21.18" width="0.80" height="1.20" fill="#474747"/><rect x="337.91" y="21.18" width="0.80" height="1.20" fill="#474747"/><rect x="344.30" y="21.18" width="0.80" height="1.20" fill="#474747"/><rect x="350.69" y="21.18" width="0.80" height="1.20" fill="#474747"/><rect x="357.08" y="21.18" width="0.80" height="1.20" fill="#474747"/><rect x="363.47" y="21.18" width="0.80" height="1.20" fill="#474747"/><rect x="369.86" y="21.18" width="0.80" height="1.20" fill="#474747"/><rect x="376.25" y="21.18" width="0.80" height="1.20" fill="#474747"/><rect x="382.64" y="21.18" width="0.80" height="1.20" fill="#474747"/><rect x="389.03" y="21.18" width="0.80" height="1.20" fill="#474747"/><rect x="395.42" y="21.18" width="0.80" height="1.20" fill="#474747"/><rect x="401.81" y="21.18" width="0.80" height="1.20" fill="#474747"/><rect x="408.20" y="21.18" width="0.80" height="1.20" fill="#474747"/><rect x="414.59" y="21.18" width="0.80" height="1.20" fill="#474747"/><rect x="420.98" y="21.18" width="0.80" height="1.20" fill="#474747"/><rect x="427.37" y="21.18" width="0.80" height="1.20" fill="#474747"/><rect x="433.76" y="21.18" width="0.80" height="1.20" fill="#474747"/><rect x="440.15" y="21.18" width="0.80" height="1.20" fill="#474747"/><rect x="446.54" y="21.18" width="0.80" height="1.20" fill="#474747"/><rect x="452.93" y="21.18" width="0.80" height="1.20" fill="#474747"/><rect x="459.32" y="21.18" width="0.80" height="1.20" fill="#474747"/><rect x="465.71" y="21.18" width="0.80" height="1.20" fill="#474747"/><rect x="472.10" y="21.18" width="0.80" height="1.20" fill="#474747"/><rect x="478.49" y="21.18" width="0.80" height="1.20" fill="#474747"/><rect x="484.88" y="21.18" width="0.80" height="1.20" fill="#474747"/><rect x="491.27" y="21.18" width="0.80" height="1.20" fill="#474747"/><rect x="497.66" y="21.18" width="0.80" height="1.20" fill="#474747"/><rect x="504.05" y="21.18" width="0.80" height="1.20" fill="#474747"/><rect x="510.44" y="21.18" width="0.80" height="1.20" fill="#474747"/><rect x="516.83" y="21.18" width="0.80" height="1.20" fill="#474747"/><rect x="523.22" y="21.18" width="0.80" height="1.20" fill="#474747"/><rect x="529.61" y="21.18" width="0.80" height="1.20" fill="#474747"/><rect x="536.00" y="21.18" width="0.80" height="1.20" fill="#474747"/><rect x="542.39" y="21.18" width="0.80" height="1.20" fill="#474747"/><rect x="548.78" y="21.18" width="0.80" height="1.20" fill="#474747"/><rect x="555.17" y="21.18" width="0.80" height="1.20" fill="#474747"/><rect x="561.56" y="21.18" width="0.80" height="1.20" fill="#474747"/><rect x="567.95" y="21.18" width="0.80" height="1.20" fill="#474747"/><rect x="0.00" y="30.42" width="571.50" height="10.14" fill="#5b5b5b"/><rect x="0.00" y="30.42" width="571.50" height="0.90" fill="#3c3c3c"/><rect x="5.63" y="31.32" width="0.80" height="1.20" fill="#474747"/><rect x="12.02" y="31.32" width="0.80" height="1.20" fill="#474747"/><rect x="18.41" y="31.32" width="0.80" height="1.20" fill="#474747"/><rect x="24.80" y="31.32" width="0.80" height="1.20" fill="#474747"/><rect x="31.19" y="31.32" width="0.80" height="1.20" fill="#474747"/><rect x="37.58" y="31.32" width="0.80" height="1.20" fill="#474747"/><rect x="43.97" y="31.32" width="0.80" height="1.20" fill="#474747"/><rect x="50.36" y="31.32" width="0.80" height="1.20" fill="#474747"/><rect x="56.75" y="31.32" width="0.80" height="1.20" fill="#474747"/><rect x="63.14" y="31.32" width="0.80" height="1.20" fill="#474747"/><rect x="69.53" y="31.32" width="0.80" height="1.20" fill="#474747"/><rect x="75.92" y="31.32" width="0.80" height="1.20" fill="#474747"/><rect x="82.31" y="31.32" width="0.80" height="1.20" fill="#474747"/><rect x="88.70" y="31.32" width="0.80" height="1.20" fill="#474747"/><rect x="95.09" y="31.32" width="0.80" height="1.20" fill="#474747"/><rect x="101.48" y="31.32" width="0.80" height="1.20" fill="#474747"/><rect x="107.87" y="31.32" width="0.80" height="1.20" fill="#474747"/><rect x="114.26" y="31.32" width="0.80" height="1.20" fill="#474747"/><rect x="120.65" y="31.32" width="0.80" height="1.20" fill="#474747"/><rect x="127.04" y="31.32" width="0.80" height="1.20" fill="#474747"/><rect x="133.43" y="31.32" width="0.80" height="1.20" fill="#474747"/><rect x="139.82" y="31.32" width="0.80" height="1.20" fill="#474747"/><rect x="146.21" y="31.32" width="0.80" height="1.20" fill="#474747"/><rect x="152.60" y="31.32" width="0.80" height="1.20" fill="#474747"/><rect x="158.99" y="31.32" width="0.80" height="1.20" fill="#474747"/><rect x="165.38" y="31.32" width="0.80" height="1.20" fill="#474747"/><rect x="171.77" y="31.32" width="0.80" height="1.20" fill="#474747"/><rect x="178.16" y="31.32" width="0.80" height="1.20" fill="#474747"/><rect x="184.55" y="31.32" width="0.80" height="1.20" fill="#474747"/><rect x="190.94" y="31.32" width="0.80" height="1.20" fill="#474747"/><rect x="197.33" y="31.32" width="0.80" height="1.20" fill="#474747"/><rect x="203.72" y="31.32" width="0.80" height="1.20" fill="#474747"/><rect x="210.11" y="31.32" width="0.80" height="1.20" fill="#474747"/><rect x="216.50" y="31.32" width="0.80" height="1.20" fill="#474747"/><rect x="222.89" y="31.32" width="0.80" height="1.20" fill="#474747"/><rect x="229.28" y="31.32" width="0.80" height="1.20" fill="#474747"/><rect x="235.67" y="31.32" width="0.80" height="1.20" fill="#474747"/><rect x="242.06" y="31.32" width="0.80" height="1.20" fill="#474747"/><rect x="248.45" y="31.32" width="0.80" height="1.20" fill="#474747"/><rect x="254.84" y="31.32" width="0.80" height="1.20" fill="#474747"/><rect x="261.23" y="31.32" width="0.80" height="1.20" fill="#474747"/><rect x="267.62" y="31.32" width="0.80" height="1.20" fill="#474747"/><rect x="274.01" y="31.32" width="0.80" height="1.20" fill="#474747"/><rect x="280.40" y="31.32" width="0.80" height="1.20" fill="#474747"/><rect x="286.79" y="31.32" width="0.80" height="1.20" fill="#474747"/><rect x="293.18" y="31.32" width="0.80" height="1.20" fill="#474747"/><rect x="299.57" y="31.32" width="0.80" height="1.20" fill="#474747"/><rect x="305.96" y="31.32" width="0.80" height="1.20" fill="#474747"/><rect x="312.35" y="31.32" width="0.80" height="1.20" fill="#474747"/><rect x="318.74" y="31.32" width="0.80" height="1.20" fill="#474747"/><rect x="325.13" y="31.32" width="0.80" height="1.20" fill="#474747"/><rect x="331.52" y="31.32" width="0.80" height="1.20" fill="#474747"/><rect x="337.91" y="31.32" width="0.80" height="1.20" fill="#474747"/><rect x="344.30" y="31.32" width="0.80" height="1.20" fill="#474747"/><rect x="350.69" y="31.32" width="0.80" height="1.20" fill="#474747"/><rect x="357.08" y="31.32" width="0.80" height="1.20" fill="#474747"/><rect x="363.47" y="31.32" width="0.80" height="1.20" fill="#474747"/><rect x="369.86" y="31.32" width="0.80" height="1.20" fill="#474747"/><rect x="376.25" y="31.32" width="0.80" height="1.20" fill="#474747"/><rect x="382.64" y="31.32" width="0.80" height="1.20" fill="#474747"/><rect x="389.03" y="31.32" width="0.80" height="1.20" fill="#474747"/><rect x="395.42" y="31.32" width="0.80" height="1.20" fill="#474747"/><rect x="401.81" y="31.32" width="0.80" height="1.20" fill="#474747"/><rect x="408.20" y="31.32" width="0.80" height="1.20" fill="#474747"/><rect x="414.59" y="31.32" width="0.80" height="1.20" fill="#474747"/><rect x="420.98" y="31.32" width="0.80" height="1.20" fill="#474747"/><rect x="427.37" y="31.32" width="0.80" height="1.20" fill="#474747"/><rect x="433.76" y="31.32" width="0.80" height="1.20" fill="#474747"/><rect x="440.15" y="31.32" width="0.80" height="1.20" fill="#474747"/><rect x="446.54" y="31.32" width="0.80" height="1.20" fill="#474747"/><rect x="452.93" y="31.32" width="0.80" height="1.20" fill="#474747"/><rect x="459.32" y="31.32" width="0.80" height="1.20" fill="#474747"/><rect x="465.71" y="31.32" width="0.80" height="1.20" fill="#474747"/><rect x="472.10" y="31.32" width="0.80" height="1.20" fill="#474747"/><rect x="478.49" y="31.32" width="0.80" height="1.20" fill="#474747"/><rect x="484.88" y="31.32" width="0.80" height="1.20" fill="#474747"/><rect x="491.27" y="31.32" width="0.80" height="1.20" fill="#474747"/><rect x="497.66" y="31.32" width="0.80" height="1.20" fill="#474747"/><rect x="504.05" y="31.32" width="0.80" height="1.20" fill="#474747"/><rect x="510.44" y="31.32" width="0.80" height="1.20" fill="#474747"/><rect x="516.83" y="31.32" width="0.80" height="1.20" fill="#474747"/><rect x="523.22" y="31.32" width="0.80" height="1.20" fill="#474747"/><rect x="529.61" y="31.32" width="0.80" height="1.20" fill="#474747"/><rect x="536.00" y="31.32" width="0.80" height="1.20" fill="#474747"/><rect x="542.39" y="31.32" width="0.80" height="1.20" fill="#474747"/><rect x="548.78" y="31.32" width="0.80" height="1.20" fill="#474747"/><rect x="555.17" y="31.32" width="0.80" height="1.20" fill="#474747"/><rect x="561.56" y="31.32" width="0.80" height="1.20" fill="#474747"/><rect x="567.95" y="31.32" width="0.80" height="1.20" fill="#474747"/><rect x="0.00" y="40.56" width="571.50" height="10.14" fill="#5b5b5b"/><rect x="0.00" y="40.56" width="571.50" height="0.90" fill="#3c3c3c"/><rect x="5.63" y="41.46" width="0.80" height="1.20" fill="#474747"/><rect x="12.02" y="41.46" width="0.80" height="1.20" fill="#474747"/><rect x="18.41" y="41.46" width="0.80" height="1.20" fill="#474747"/><rect x="24.80" y="41.46" width="0.80" height="1.20" fill="#474747"/><rect x="31.19" y="41.46" width="0.80" height="1.20" fill="#474747"/><rect x="37.58" y="41.46" width="0.80" height="1.20" fill="#474747"/><rect x="43.97" y="41.46" width="0.80" height="1.20" fill="#474747"/><rect x="50.36" y="41.46" width="0.80" height="1.20" fill="#474747"/><rect x="56.75" y="41.46" width="0.80" height="1.20" fill="#474747"/><rect x="63.14" y="41.46" width="0.80" height="1.20" fill="#474747"/><rect x="69.53" y="41.46" width="0.80" height="1.20" fill="#474747"/><rect x="75.92" y="41.46" width="0.80" height="1.20" fill="#474747"/><rect x="82.31" y="41.46" width="0.80" height="1.20" fill="#474747"/><rect x="88.70" y="41.46" width="0.80" height="1.20" fill="#474747"/><rect x="95.09" y="41.46" width="0.80" height="1.20" fill="#474747"/><rect x="101.48" y="41.46" width="0.80" height="1.20" fill="#474747"/><rect x="107.87" y="41.46" width="0.80" height="1.20" fill="#474747"/><rect x="114.26" y="41.46" width="0.80" height="1.20" fill="#474747"/><rect x="120.65" y="41.46" width="0.80" height="1.20" fill="#474747"/><rect x="127.04" y="41.46" width="0.80" height="1.20" fill="#474747"/><rect x="133.43" y="41.46" width="0.80" height="1.20" fill="#474747"/><rect x="139.82" y="41.46" width="0.80" height="1.20" fill="#474747"/><rect x="146.21" y="41.46" width="0.80" height="1.20" fill="#474747"/><rect x="152.60" y="41.46" width="0.80" height="1.20" fill="#474747"/><rect x="158.99" y="41.46" width="0.80" height="1.20" fill="#474747"/><rect x="165.38" y="41.46" width="0.80" height="1.20" fill="#474747"/><rect x="171.77" y="41.46" width="0.80" height="1.20" fill="#474747"/><rect x="178.16" y="41.46" width="0.80" height="1.20" fill="#474747"/><rect x="184.55" y="41.46" width="0.80" height="1.20" fill="#474747"/><rect x="190.94" y="41.46" width="0.80" height="1.20" fill="#474747"/><rect x="197.33" y="41.46" width="0.80" height="1.20" fill="#474747"/><rect x="203.72" y="41.46" width="0.80" height="1.20" fill="#474747"/><rect x="210.11" y="41.46" width="0.80" height="1.20" fill="#474747"/><rect x="216.50" y="41.46" width="0.80" height="1.20" fill="#474747"/><rect x="222.89" y="41.46" width="0.80" height="1.20" fill="#474747"/><rect x="229.28" y="41.46" width="0.80" height="1.20" fill="#474747"/><rect x="235.67" y="41.46" width="0.80" height="1.20" fill="#474747"/><rect x="242.06" y="41.46" width="0.80" height="1.20" fill="#474747"/><rect x="248.45" y="41.46" width="0.80" height="1.20" fill="#474747"/><rect x="254.84" y="41.46" width="0.80" height="1.20" fill="#474747"/><rect x="261.23" y="41.46" width="0.80" height="1.20" fill="#474747"/><rect x="267.62" y="41.46" width="0.80" height="1.20" fill="#474747"/><rect x="274.01" y="41.46" width="0.80" height="1.20" fill="#474747"/><rect x="280.40" y="41.46" width="0.80" height="1.20" fill="#474747"/><rect x="286.79" y="41.46" width="0.80" height="1.20" fill="#474747"/><rect x="293.18" y="41.46" width="0.80" height="1.20" fill="#474747"/><rect x="299.57" y="41.46" width="0.80" height="1.20" fill="#474747"/><rect x="305.96" y="41.46" width="0.80" height="1.20" fill="#474747"/><rect x="312.35" y="41.46" width="0.80" height="1.20" fill="#474747"/><rect x="318.74" y="41.46" width="0.80" height="1.20" fill="#474747"/><rect x="325.13" y="41.46" width="0.80" height="1.20" fill="#474747"/><rect x="331.52" y="41.46" width="0.80" height="1.20" fill="#474747"/><rect x="337.91" y="41.46" width="0.80" height="1.20" fill="#474747"/><rect x="344.30" y="41.46" width="0.80" height="1.20" fill="#474747"/><rect x="350.69" y="41.46" width="0.80" height="1.20" fill="#474747"/><rect x="357.08" y="41.46" width="0.80" height="1.20" fill="#474747"/><rect x="363.47" y="41.46" width="0.80" height="1.20" fill="#474747"/><rect x="369.86" y="41.46" width="0.80" height="1.20" fill="#474747"/><rect x="376.25" y="41.46" width="0.80" height="1.20" fill="#474747"/><rect x="382.64" y="41.46" width="0.80" height="1.20" fill="#474747"/><rect x="389.03" y="41.46" width="0.80" height="1.20" fill="#474747"/><rect x="395.42" y="41.46" width="0.80" height="1.20" fill="#474747"/><rect x="401.81" y="41.46" width="0.80" height="1.20" fill="#474747"/><rect x="408.20" y="41.46" width="0.80" height="1.20" fill="#474747"/><rect x="414.59" y="41.46" width="0.80" height="1.20" fill="#474747"/><rect x="420.98" y="41.46" width="0.80" height="1.20" fill="#474747"/><rect x="427.37" y="41.46" width="0.80" height="1.20" fill="#474747"/><rect x="433.76" y="41.46" width="0.80" height="1.20" fill="#474747"/><rect x="440.15" y="41.46" width="0.80" height="1.20" fill="#474747"/><rect x="446.54" y="41.46" width="0.80" height="1.20" fill="#474747"/><rect x="452.93" y="41.46" width="0.80" height="1.20" fill="#474747"/><rect x="459.32" y="41.46" width="0.80" height="1.20" fill="#474747"/><rect x="465.71" y="41.46" width="0.80" height="1.20" fill="#474747"/><rect x="472.10" y="41.46" width="0.80" height="1.20" fill="#474747"/><rect x="478.49" y="41.46" width="0.80" height="1.20" fill="#474747"/><rect x="484.88" y="41.46" width="0.80" height="1.20" fill="#474747"/><rect x="491.27" y="41.46" width="0.80" height="1.20" fill="#474747"/><rect x="497.66" y="41.46" width="0.80" height="1.20" fill="#474747"/><rect x="504.05" y="41.46" width="0.80" height="1.20" fill="#474747"/><rect x="510.44" y="41.46" width="0.80" height="1.20" fill="#474747"/><rect x="516.83" y="41.46" width="0.80" height="1.20" fill="#474747"/><rect x="523.22" y="41.46" width="0.80" height="1.20" fill="#474747"/><rect x="529.61" y="41.46" width="0.80" height="1.20" fill="#474747"/><rect x="536.00" y="41.46" width="0.80" height="1.20" fill="#474747"/><rect x="542.39" y="41.46" width="0.80" height="1.20" fill="#474747"/><rect x="548.78" y="41.46" width="0.80" height="1.20" fill="#474747"/><rect x="555.17" y="41.46" width="0.80" height="1.20" fill="#474747"/><rect x="561.56" y="41.46" width="0.80" height="1.20" fill="#474747"/><rect x="567.95" y="41.46" width="0.80" height="1.20" fill="#474747"/><rect x="0.00" y="50.70" width="571.50" height="10.14" fill="#5b5b5b"/><rect x="0.00" y="50.70" width="571.50" height="0.90" fill="#3c3c3c"/><rect x="5.63" y="51.60" width="0.80" height="1.20" fill="#474747"/><rect x="12.02" y="51.60" width="0.80" height="1.20" fill="#474747"/><rect x="18.41" y="51.60" width="0.80" height="1.20" fill="#474747"/><rect x="24.80" y="51.60" width="0.80" height="1.20" fill="#474747"/><rect x="31.19" y="51.60" width="0.80" height="1.20" fill="#474747"/><rect x="37.58" y="51.60" width="0.80" height="1.20" fill="#474747"/><rect x="43.97" y="51.60" width="0.80" height="1.20" fill="#474747"/><rect x="50.36" y="51.60" width="0.80" height="1.20" fill="#474747"/><rect x="56.75" y="51.60" width="0.80" height="1.20" fill="#474747"/><rect x="63.14" y="51.60" width="0.80" height="1.20" fill="#474747"/><rect x="69.53" y="51.60" width="0.80" height="1.20" fill="#474747"/><rect x="75.92" y="51.60" width="0.80" height="1.20" fill="#474747"/><rect x="82.31" y="51.60" width="0.80" height="1.20" fill="#474747"/><rect x="88.70" y="51.60" width="0.80" height="1.20" fill="#474747"/><rect x="95.09" y="51.60" width="0.80" height="1.20" fill="#474747"/><rect x="101.48" y="51.60" width="0.80" height="1.20" fill="#474747"/><rect x="107.87" y="51.60" width="0.80" height="1.20" fill="#474747"/><rect x="114.26" y="51.60" width="0.80" height="1.20" fill="#474747"/><rect x="120.65" y="51.60" width="0.80" height="1.20" fill="#474747"/><rect x="127.04" y="51.60" width="0.80" height="1.20" fill="#474747"/><rect x="133.43" y="51.60" width="0.80" height="1.20" fill="#474747"/><rect x="139.82" y="51.60" width="0.80" height="1.20" fill="#474747"/><rect x="146.21" y="51.60" width="0.80" height="1.20" fill="#474747"/><rect x="152.60" y="51.60" width="0.80" height="1.20" fill="#474747"/><rect x="158.99" y="51.60" width="0.80" height="1.20" fill="#474747"/><rect x="165.38" y="51.60" width="0.80" height="1.20" fill="#474747"/><rect x="171.77" y="51.60" width="0.80" height="1.20" fill="#474747"/><rect x="178.16" y="51.60" width="0.80" height="1.20" fill="#474747"/><rect x="184.55" y="51.60" width="0.80" height="1.20" fill="#474747"/><rect x="190.94" y="51.60" width="0.80" height="1.20" fill="#474747"/><rect x="197.33" y="51.60" width="0.80" height="1.20" fill="#474747"/><rect x="203.72" y="51.60" width="0.80" height="1.20" fill="#474747"/><rect x="210.11" y="51.60" width="0.80" height="1.20" fill="#474747"/><rect x="216.50" y="51.60" width="0.80" height="1.20" fill="#474747"/><rect x="222.89" y="51.60" width="0.80" height="1.20" fill="#474747"/><rect x="229.28" y="51.60" width="0.80" height="1.20" fill="#474747"/><rect x="235.67" y="51.60" width="0.80" height="1.20" fill="#474747"/><rect x="242.06" y="51.60" width="0.80" height="1.20" fill="#474747"/><rect x="248.45" y="51.60" width="0.80" height="1.20" fill="#474747"/><rect x="254.84" y="51.60" width="0.80" height="1.20" fill="#474747"/><rect x="261.23" y="51.60" width="0.80" height="1.20" fill="#474747"/><rect x="267.62" y="51.60" width="0.80" height="1.20" fill="#474747"/><rect x="274.01" y="51.60" width="0.80" height="1.20" fill="#474747"/><rect x="280.40" y="51.60" width="0.80" height="1.20" fill="#474747"/><rect x="286.79" y="51.60" width="0.80" height="1.20" fill="#474747"/><rect x="293.18" y="51.60" width="0.80" height="1.20" fill="#474747"/><rect x="299.57" y="51.60" width="0.80" height="1.20" fill="#474747"/><rect x="305.96" y="51.60" width="0.80" height="1.20" fill="#474747"/><rect x="312.35" y="51.60" width="0.80" height="1.20" fill="#474747"/><rect x="318.74" y="51.60" width="0.80" height="1.20" fill="#474747"/><rect x="325.13" y="51.60" width="0.80" height="1.20" fill="#474747"/><rect x="331.52" y="51.60" width="0.80" height="1.20" fill="#474747"/><rect x="337.91" y="51.60" width="0.80" height="1.20" fill="#474747"/><rect x="344.30" y="51.60" width="0.80" height="1.20" fill="#474747"/><rect x="350.69" y="51.60" width="0.80" height="1.20" fill="#474747"/><rect x="357.08" y="51.60" width="0.80" height="1.20" fill="#474747"/><rect x="363.47" y="51.60" width="0.80" height="1.20" fill="#474747"/><rect x="369.86" y="51.60" width="0.80" height="1.20" fill="#474747"/><rect x="376.25" y="51.60" width="0.80" height="1.20" fill="#474747"/><rect x="382.64" y="51.60" width="0.80" height="1.20" fill="#474747"/><rect x="389.03" y="51.60" width="0.80" height="1.20" fill="#474747"/><rect x="395.42" y="51.60" width="0.80" height="1.20" fill="#474747"/><rect x="401.81" y="51.60" width="0.80" height="1.20" fill="#474747"/><rect x="408.20" y="51.60" width="0.80" height="1.20" fill="#474747"/><rect x="414.59" y="51.60" width="0.80" height="1.20" fill="#474747"/><rect x="420.98" y="51.60" width="0.80" height="1.20" fill="#474747"/><rect x="427.37" y="51.60" width="0.80" height="1.20" fill="#474747"/><rect x="433.76" y="51.60" width="0.80" height="1.20" fill="#474747"/><rect x="440.15" y="51.60" width="0.80" height="1.20" fill="#474747"/><rect x="446.54" y="51.60" width="0.80" height="1.20" fill="#474747"/><rect x="452.93" y="51.60" width="0.80" height="1.20" fill="#474747"/><rect x="459.32" y="51.60" width="0.80" height="1.20" fill="#474747"/><rect x="465.71" y="51.60" width="0.80" height="1.20" fill="#474747"/><rect x="472.10" y="51.60" width="0.80" height="1.20" fill="#474747"/><rect x="478.49" y="51.60" width="0.80" height="1.20" fill="#474747"/><rect x="484.88" y="51.60" width="0.80" height="1.20" fill="#474747"/><rect x="491.27" y="51.60" width="0.80" height="1.20" fill="#474747"/><rect x="497.66" y="51.60" width="0.80" height="1.20" fill="#474747"/><rect x="504.05" y="51.60" width="0.80" height="1.20" fill="#474747"/><rect x="510.44" y="51.60" width="0.80" height="1.20" fill="#474747"/><rect x="516.83" y="51.60" width="0.80" height="1.20" fill="#474747"/><rect x="523.22" y="51.60" width="0.80" height="1.20" fill="#474747"/><rect x="529.61" y="51.60" width="0.80" height="1.20" fill="#474747"/><rect x="536.00" y="51.60" width="0.80" height="1.20" fill="#474747"/><rect x="542.39" y="51.60" width="0.80" height="1.20" fill="#474747"/><rect x="548.78" y="51.60" width="0.80" height="1.20" fill="#474747"/><rect x="555.17" y="51.60" width="0.80" height="1.20" fill="#474747"/><rect x="561.56" y="51.60" width="0.80" height="1.20" fill="#474747"/><rect x="567.95" y="51.60" width="0.80" height="1.20" fill="#474747"/><rect x="0.00" y="60.84" width="571.50" height="10.14" fill="#5b5b5b"/><rect x="0.00" y="60.84" width="571.50" height="0.90" fill="#3c3c3c"/><rect x="5.63" y="61.74" width="0.80" height="1.20" fill="#474747"/><rect x="12.02" y="61.74" width="0.80" height="1.20" fill="#474747"/><rect x="18.41" y="61.74" width="0.80" height="1.20" fill="#474747"/><rect x="24.80" y="61.74" width="0.80" height="1.20" fill="#474747"/><rect x="31.19" y="61.74" width="0.80" height="1.20" fill="#474747"/><rect x="37.58" y="61.74" width="0.80" height="1.20" fill="#474747"/><rect x="43.97" y="61.74" width="0.80" height="1.20" fill="#474747"/><rect x="50.36" y="61.74" width="0.80" height="1.20" fill="#474747"/><rect x="56.75" y="61.74" width="0.80" height="1.20" fill="#474747"/><rect x="63.14" y="61.74" width="0.80" height="1.20" fill="#474747"/><rect x="69.53" y="61.74" width="0.80" height="1.20" fill="#474747"/><rect x="75.92" y="61.74" width="0.80" height="1.20" fill="#474747"/><rect x="82.31" y="61.74" width="0.80" height="1.20" fill="#474747"/><rect x="88.70" y="61.74" width="0.80" height="1.20" fill="#474747"/><rect x="95.09" y="61.74" width="0.80" height="1.20" fill="#474747"/><rect x="101.48" y="61.74" width="0.80" height="1.20" fill="#474747"/><rect x="107.87" y="61.74" width="0.80" height="1.20" fill="#474747"/><rect x="114.26" y="61.74" width="0.80" height="1.20" fill="#474747"/><rect x="120.65" y="61.74" width="0.80" height="1.20" fill="#474747"/><rect x="127.04" y="61.74" width="0.80" height="1.20" fill="#474747"/><rect x="133.43" y="61.74" width="0.80" height="1.20" fill="#474747"/><rect x="139.82" y="61.74" width="0.80" height="1.20" fill="#474747"/><rect x="146.21" y="61.74" width="0.80" height="1.20" fill="#474747"/><rect x="152.60" y="61.74" width="0.80" height="1.20" fill="#474747"/><rect x="158.99" y="61.74" width="0.80" height="1.20" fill="#474747"/><rect x="165.38" y="61.74" width="0.80" height="1.20" fill="#474747"/><rect x="171.77" y="61.74" width="0.80" height="1.20" fill="#474747"/><rect x="178.16" y="61.74" width="0.80" height="1.20" fill="#474747"/><rect x="184.55" y="61.74" width="0.80" height="1.20" fill="#474747"/><rect x="190.94" y="61.74" width="0.80" height="1.20" fill="#474747"/><rect x="197.33" y="61.74" width="0.80" height="1.20" fill="#474747"/><rect x="203.72" y="61.74" width="0.80" height="1.20" fill="#474747"/><rect x="210.11" y="61.74" width="0.80" height="1.20" fill="#474747"/><rect x="216.50" y="61.74" width="0.80" height="1.20" fill="#474747"/><rect x="222.89" y="61.74" width="0.80" height="1.20" fill="#474747"/><rect x="229.28" y="61.74" width="0.80" height="1.20" fill="#474747"/><rect x="235.67" y="61.74" width="0.80" height="1.20" fill="#474747"/><rect x="242.06" y="61.74" width="0.80" height="1.20" fill="#474747"/><rect x="248.45" y="61.74" width="0.80" height="1.20" fill="#474747"/><rect x="254.84" y="61.74" width="0.80" height="1.20" fill="#474747"/><rect x="261.23" y="61.74" width="0.80" height="1.20" fill="#474747"/><rect x="267.62" y="61.74" width="0.80" height="1.20" fill="#474747"/><rect x="274.01" y="61.74" width="0.80" height="1.20" fill="#474747"/><rect x="280.40" y="61.74" width="0.80" height="1.20" fill="#474747"/><rect x="286.79" y="61.74" width="0.80" height="1.20" fill="#474747"/><rect x="293.18" y="61.74" width="0.80" height="1.20" fill="#474747"/><rect x="299.57" y="61.74" width="0.80" height="1.20" fill="#474747"/><rect x="305.96" y="61.74" width="0.80" height="1.20" fill="#474747"/><rect x="312.35" y="61.74" width="0.80" height="1.20" fill="#474747"/><rect x="318.74" y="61.74" width="0.80" height="1.20" fill="#474747"/><rect x="325.13" y="61.74" width="0.80" height="1.20" fill="#474747"/><rect x="331.52" y="61.74" width="0.80" height="1.20" fill="#474747"/><rect x="337.91" y="61.74" width="0.80" height="1.20" fill="#474747"/><rect x="344.30" y="61.74" width="0.80" height="1.20" fill="#474747"/><rect x="350.69" y="61.74" width="0.80" height="1.20" fill="#474747"/><rect x="357.08" y="61.74" width="0.80" height="1.20" fill="#474747"/><rect x="363.47" y="61.74" width="0.80" height="1.20" fill="#474747"/><rect x="369.86" y="61.74" width="0.80" height="1.20" fill="#474747"/><rect x="376.25" y="61.74" width="0.80" height="1.20" fill="#474747"/><rect x="382.64" y="61.74" width="0.80" height="1.20" fill="#474747"/><rect x="389.03" y="61.74" width="0.80" height="1.20" fill="#474747"/><rect x="395.42" y="61.74" width="0.80" height="1.20" fill="#474747"/><rect x="401.81" y="61.74" width="0.80" height="1.20" fill="#474747"/><rect x="408.20" y="61.74" width="0.80" height="1.20" fill="#474747"/><rect x="414.59" y="61.74" width="0.80" height="1.20" fill="#474747"/><rect x="420.98" y="61.74" width="0.80" height="1.20" fill="#474747"/><rect x="427.37" y="61.74" width="0.80" height="1.20" fill="#474747"/><rect x="433.76" y="61.74" width="0.80" height="1.20" fill="#474747"/><rect x="440.15" y="61.74" width="0.80" height="1.20" fill="#474747"/><rect x="446.54" y="61.74" width="0.80" height="1.20" fill="#474747"/><rect x="452.93" y="61.74" width="0.80" height="1.20" fill="#474747"/><rect x="459.32" y="61.74" width="0.80" height="1.20" fill="#474747"/><rect x="465.71" y="61.74" width="0.80" height="1.20" fill="#474747"/><rect x="472.10" y="61.74" width="0.80" height="1.20" fill="#474747"/><rect x="478.49" y="61.74" width="0.80" height="1.20" fill="#474747"/><rect x="484.88" y="61.74" width="0.80" height="1.20" fill="#474747"/><rect x="491.27" y="61.74" width="0.80" height="1.20" fill="#474747"/><rect x="497.66" y="61.74" width="0.80" height="1.20" fill="#474747"/><rect x="504.05" y="61.74" width="0.80" height="1.20" fill="#474747"/><rect x="510.44" y="61.74" width="0.80" height="1.20" fill="#474747"/><rect x="516.83" y="61.74" width="0.80" height="1.20" fill="#474747"/><rect x="523.22" y="61.74" width="0.80" height="1.20" fill="#474747"/><rect x="529.61" y="61.74" width="0.80" height="1.20" fill="#474747"/><rect x="536.00" y="61.74" width="0.80" height="1.20" fill="#474747"/><rect x="542.39" y="61.74" width="0.80" height="1.20" fill="#474747"/><rect x="548.78" y="61.74" width="0.80" height="1.20" fill="#474747"/><rect x="555.17" y="61.74" width="0.80" height="1.20" fill="#474747"/><rect x="561.56" y="61.74" width="0.80" height="1.20" fill="#474747"/><rect x="567.95" y="61.74" width="0.80" height="1.20" fill="#474747"/><rect x="0.00" y="70.98" width="571.50" height="10.14" fill="#5b5b5b"/><rect x="0.00" y="70.98" width="571.50" height="0.90" fill="#3c3c3c"/><rect x="5.63" y="71.88" width="0.80" height="1.20" fill="#474747"/><rect x="12.02" y="71.88" width="0.80" height="1.20" fill="#474747"/><rect x="18.41" y="71.88" width="0.80" height="1.20" fill="#474747"/><rect x="24.80" y="71.88" width="0.80" height="1.20" fill="#474747"/><rect x="31.19" y="71.88" width="0.80" height="1.20" fill="#474747"/><rect x="37.58" y="71.88" width="0.80" height="1.20" fill="#474747"/><rect x="43.97" y="71.88" width="0.80" height="1.20" fill="#474747"/><rect x="50.36" y="71.88" width="0.80" height="1.20" fill="#474747"/><rect x="56.75" y="71.88" width="0.80" height="1.20" fill="#474747"/><rect x="63.14" y="71.88" width="0.80" height="1.20" fill="#474747"/><rect x="69.53" y="71.88" width="0.80" height="1.20" fill="#474747"/><rect x="75.92" y="71.88" width="0.80" height="1.20" fill="#474747"/><rect x="82.31" y="71.88" width="0.80" height="1.20" fill="#474747"/><rect x="88.70" y="71.88" width="0.80" height="1.20" fill="#474747"/><rect x="95.09" y="71.88" width="0.80" height="1.20" fill="#474747"/><rect x="101.48" y="71.88" width="0.80" height="1.20" fill="#474747"/><rect x="107.87" y="71.88" width="0.80" height="1.20" fill="#474747"/><rect x="114.26" y="71.88" width="0.80" height="1.20" fill="#474747"/><rect x="120.65" y="71.88" width="0.80" height="1.20" fill="#474747"/><rect x="127.04" y="71.88" width="0.80" height="1.20" fill="#474747"/><rect x="133.43" y="71.88" width="0.80" height="1.20" fill="#474747"/><rect x="139.82" y="71.88" width="0.80" height="1.20" fill="#474747"/><rect x="146.21" y="71.88" width="0.80" height="1.20" fill="#474747"/><rect x="152.60" y="71.88" width="0.80" height="1.20" fill="#474747"/><rect x="158.99" y="71.88" width="0.80" height="1.20" fill="#474747"/><rect x="165.38" y="71.88" width="0.80" height="1.20" fill="#474747"/><rect x="171.77" y="71.88" width="0.80" height="1.20" fill="#474747"/><rect x="178.16" y="71.88" width="0.80" height="1.20" fill="#474747"/><rect x="184.55" y="71.88" width="0.80" height="1.20" fill="#474747"/><rect x="190.94" y="71.88" width="0.80" height="1.20" fill="#474747"/><rect x="197.33" y="71.88" width="0.80" height="1.20" fill="#474747"/><rect x="203.72" y="71.88" width="0.80" height="1.20" fill="#474747"/><rect x="210.11" y="71.88" width="0.80" height="1.20" fill="#474747"/><rect x="216.50" y="71.88" width="0.80" height="1.20" fill="#474747"/><rect x="222.89" y="71.88" width="0.80" height="1.20" fill="#474747"/><rect x="229.28" y="71.88" width="0.80" height="1.20" fill="#474747"/><rect x="235.67" y="71.88" width="0.80" height="1.20" fill="#474747"/><rect x="242.06" y="71.88" width="0.80" height="1.20" fill="#474747"/><rect x="248.45" y="71.88" width="0.80" height="1.20" fill="#474747"/><rect x="254.84" y="71.88" width="0.80" height="1.20" fill="#474747"/><rect x="261.23" y="71.88" width="0.80" height="1.20" fill="#474747"/><rect x="267.62" y="71.88" width="0.80" height="1.20" fill="#474747"/><rect x="274.01" y="71.88" width="0.80" height="1.20" fill="#474747"/><rect x="280.40" y="71.88" width="0.80" height="1.20" fill="#474747"/><rect x="286.79" y="71.88" width="0.80" height="1.20" fill="#474747"/><rect x="293.18" y="71.88" width="0.80" height="1.20" fill="#474747"/><rect x="299.57" y="71.88" width="0.80" height="1.20" fill="#474747"/><rect x="305.96" y="71.88" width="0.80" height="1.20" fill="#474747"/><rect x="312.35" y="71.88" width="0.80" height="1.20" fill="#474747"/><rect x="318.74" y="71.88" width="0.80" height="1.20" fill="#474747"/><rect x="325.13" y="71.88" width="0.80" height="1.20" fill="#474747"/><rect x="331.52" y="71.88" width="0.80" height="1.20" fill="#474747"/><rect x="337.91" y="71.88" width="0.80" height="1.20" fill="#474747"/><rect x="344.30" y="71.88" width="0.80" height="1.20" fill="#474747"/><rect x="350.69" y="71.88" width="0.80" height="1.20" fill="#474747"/><rect x="357.08" y="71.88" width="0.80" height="1.20" fill="#474747"/><rect x="363.47" y="71.88" width="0.80" height="1.20" fill="#474747"/><rect x="369.86" y="71.88" width="0.80" height="1.20" fill="#474747"/><rect x="376.25" y="71.88" width="0.80" height="1.20" fill="#474747"/><rect x="382.64" y="71.88" width="0.80" height="1.20" fill="#474747"/><rect x="389.03" y="71.88" width="0.80" height="1.20" fill="#474747"/><rect x="395.42" y="71.88" width="0.80" height="1.20" fill="#474747"/><rect x="401.81" y="71.88" width="0.80" height="1.20" fill="#474747"/><rect x="408.20" y="71.88" width="0.80" height="1.20" fill="#474747"/><rect x="414.59" y="71.88" width="0.80" height="1.20" fill="#474747"/><rect x="420.98" y="71.88" width="0.80" height="1.20" fill="#474747"/><rect x="427.37" y="71.88" width="0.80" height="1.20" fill="#474747"/><rect x="433.76" y="71.88" width="0.80" height="1.20" fill="#474747"/><rect x="440.15" y="71.88" width="0.80" height="1.20" fill="#474747"/><rect x="446.54" y="71.88" width="0.80" height="1.20" fill="#474747"/><rect x="452.93" y="71.88" width="0.80" height="1.20" fill="#474747"/><rect x="459.32" y="71.88" width="0.80" height="1.20" fill="#474747"/><rect x="465.71" y="71.88" width="0.80" height="1.20" fill="#474747"/><rect x="472.10" y="71.88" width="0.80" height="1.20" fill="#474747"/><rect x="478.49" y="71.88" width="0.80" height="1.20" fill="#474747"/><rect x="484.88" y="71.88" width="0.80" height="1.20" fill="#474747"/><rect x="491.27" y="71.88" width="0.80" height="1.20" fill="#474747"/><rect x="497.66" y="71.88" width="0.80" height="1.20" fill="#474747"/><rect x="504.05" y="71.88" width="0.80" height="1.20" fill="#474747"/><rect x="510.44" y="71.88" width="0.80" height="1.20" fill="#474747"/><rect x="516.83" y="71.88" width="0.80" height="1.20" fill="#474747"/><rect x="523.22" y="71.88" width="0.80" height="1.20" fill="#474747"/><rect x="529.61" y="71.88" width="0.80" height="1.20" fill="#474747"/><rect x="536.00" y="71.88" width="0.80" height="1.20" fill="#474747"/><rect x="542.39" y="71.88" width="0.80" height="1.20" fill="#474747"/><rect x="548.78" y="71.88" width="0.80" height="1.20" fill="#474747"/><rect x="555.17" y="71.88" width="0.80" height="1.20" fill="#474747"/><rect x="561.56" y="71.88" width="0.80" height="1.20" fill="#474747"/><rect x="567.95" y="71.88" width="0.80" height="1.20" fill="#474747"/><rect x="0.00" y="81.12" width="571.50" height="10.14" fill="#5b5b5b"/><rect x="0.00" y="81.12" width="571.50" height="0.90" fill="#3c3c3c"/><rect x="5.63" y="82.02" width="0.80" height="1.20" fill="#474747"/><rect x="12.02" y="82.02" width="0.80" height="1.20" fill="#474747"/><rect x="18.41" y="82.02" width="0.80" height="1.20" fill="#474747"/><rect x="24.80" y="82.02" width="0.80" height="1.20" fill="#474747"/><rect x="31.19" y="82.02" width="0.80" height="1.20" fill="#474747"/><rect x="37.58" y="82.02" width="0.80" height="1.20" fill="#474747"/><rect x="43.97" y="82.02" width="0.80" height="1.20" fill="#474747"/><rect x="50.36" y="82.02" width="0.80" height="1.20" fill="#474747"/><rect x="56.75" y="82.02" width="0.80" height="1.20" fill="#474747"/><rect x="63.14" y="82.02" width="0.80" height="1.20" fill="#474747"/><rect x="69.53" y="82.02" width="0.80" height="1.20" fill="#474747"/><rect x="75.92" y="82.02" width="0.80" height="1.20" fill="#474747"/><rect x="82.31" y="82.02" width="0.80" height="1.20" fill="#474747"/><rect x="88.70" y="82.02" width="0.80" height="1.20" fill="#474747"/><rect x="95.09" y="82.02" width="0.80" height="1.20" fill="#474747"/><rect x="101.48" y="82.02" width="0.80" height="1.20" fill="#474747"/><rect x="107.87" y="82.02" width="0.80" height="1.20" fill="#474747"/><rect x="114.26" y="82.02" width="0.80" height="1.20" fill="#474747"/><rect x="120.65" y="82.02" width="0.80" height="1.20" fill="#474747"/><rect x="127.04" y="82.02" width="0.80" height="1.20" fill="#474747"/><rect x="133.43" y="82.02" width="0.80" height="1.20" fill="#474747"/><rect x="139.82" y="82.02" width="0.80" height="1.20" fill="#474747"/><rect x="146.21" y="82.02" width="0.80" height="1.20" fill="#474747"/><rect x="152.60" y="82.02" width="0.80" height="1.20" fill="#474747"/><rect x="158.99" y="82.02" width="0.80" height="1.20" fill="#474747"/><rect x="165.38" y="82.02" width="0.80" height="1.20" fill="#474747"/><rect x="171.77" y="82.02" width="0.80" height="1.20" fill="#474747"/><rect x="178.16" y="82.02" width="0.80" height="1.20" fill="#474747"/><rect x="184.55" y="82.02" width="0.80" height="1.20" fill="#474747"/><rect x="190.94" y="82.02" width="0.80" height="1.20" fill="#474747"/><rect x="197.33" y="82.02" width="0.80" height="1.20" fill="#474747"/><rect x="203.72" y="82.02" width="0.80" height="1.20" fill="#474747"/><rect x="210.11" y="82.02" width="0.80" height="1.20" fill="#474747"/><rect x="216.50" y="82.02" width="0.80" height="1.20" fill="#474747"/><rect x="222.89" y="82.02" width="0.80" height="1.20" fill="#474747"/><rect x="229.28" y="82.02" width="0.80" height="1.20" fill="#474747"/><rect x="235.67" y="82.02" width="0.80" height="1.20" fill="#474747"/><rect x="242.06" y="82.02" width="0.80" height="1.20" fill="#474747"/><rect x="248.45" y="82.02" width="0.80" height="1.20" fill="#474747"/><rect x="254.84" y="82.02" width="0.80" height="1.20" fill="#474747"/><rect x="261.23" y="82.02" width="0.80" height="1.20" fill="#474747"/><rect x="267.62" y="82.02" width="0.80" height="1.20" fill="#474747"/><rect x="274.01" y="82.02" width="0.80" height="1.20" fill="#474747"/><rect x="280.40" y="82.02" width="0.80" height="1.20" fill="#474747"/><rect x="286.79" y="82.02" width="0.80" height="1.20" fill="#474747"/><rect x="293.18" y="82.02" width="0.80" height="1.20" fill="#474747"/><rect x="299.57" y="82.02" width="0.80" height="1.20" fill="#474747"/><rect x="305.96" y="82.02" width="0.80" height="1.20" fill="#474747"/><rect x="312.35" y="82.02" width="0.80" height="1.20" fill="#474747"/><rect x="318.74" y="82.02" width="0.80" height="1.20" fill="#474747"/><rect x="325.13" y="82.02" width="0.80" height="1.20" fill="#474747"/><rect x="331.52" y="82.02" width="0.80" height="1.20" fill="#474747"/><rect x="337.91" y="82.02" width="0.80" height="1.20" fill="#474747"/><rect x="344.30" y="82.02" width="0.80" height="1.20" fill="#474747"/><rect x="350.69" y="82.02" width="0.80" height="1.20" fill="#474747"/><rect x="357.08" y="82.02" width="0.80" height="1.20" fill="#474747"/><rect x="363.47" y="82.02" width="0.80" height="1.20" fill="#474747"/><rect x="369.86" y="82.02" width="0.80" height="1.20" fill="#474747"/><rect x="376.25" y="82.02" width="0.80" height="1.20" fill="#474747"/><rect x="382.64" y="82.02" width="0.80" height="1.20" fill="#474747"/><rect x="389.03" y="82.02" width="0.80" height="1.20" fill="#474747"/><rect x="395.42" y="82.02" width="0.80" height="1.20" fill="#474747"/><rect x="401.81" y="82.02" width="0.80" height="1.20" fill="#474747"/><rect x="408.20" y="82.02" width="0.80" height="1.20" fill="#474747"/><rect x="414.59" y="82.02" width="0.80" height="1.20" fill="#474747"/><rect x="420.98" y="82.02" width="0.80" height="1.20" fill="#474747"/><rect x="427.37" y="82.02" width="0.80" height="1.20" fill="#474747"/><rect x="433.76" y="82.02" width="0.80" height="1.20" fill="#474747"/><rect x="440.15" y="82.02" width="0.80" height="1.20" fill="#474747"/><rect x="446.54" y="82.02" width="0.80" height="1.20" fill="#474747"/><rect x="452.93" y="82.02" width="0.80" height="1.20" fill="#474747"/><rect x="459.32" y="82.02" width="0.80" height="1.20" fill="#474747"/><rect x="465.71" y="82.02" width="0.80" height="1.20" fill="#474747"/><rect x="472.10" y="82.02" width="0.80" height="1.20" fill="#474747"/><rect x="478.49" y="82.02" width="0.80" height="1.20" fill="#474747"/><rect x="484.88" y="82.02" width="0.80" height="1.20" fill="#474747"/><rect x="491.27" y="82.02" width="0.80" height="1.20" fill="#474747"/><rect x="497.66" y="82.02" width="0.80" height="1.20" fill="#474747"/><rect x="504.05" y="82.02" width="0.80" height="1.20" fill="#474747"/><rect x="510.44" y="82.02" width="0.80" height="1.20" fill="#474747"/><rect x="516.83" y="82.02" width="0.80" height="1.20" fill="#474747"/><rect x="523.22" y="82.02" width="0.80" height="1.20" fill="#474747"/><rect x="529.61" y="82.02" width="0.80" height="1.20" fill="#474747"/><rect x="536.00" y="82.02" width="0.80" height="1.20" fill="#474747"/><rect x="542.39" y="82.02" width="0.80" height="1.20" fill="#474747"/><rect x="548.78" y="82.02" width="0.80" height="1.20" fill="#474747"/><rect x="555.17" y="82.02" width="0.80" height="1.20" fill="#474747"/><rect x="561.56" y="82.02" width="0.80" height="1.20" fill="#474747"/><rect x="567.95" y="82.02" width="0.80" height="1.20" fill="#474747"/><rect x="0.00" y="91.26" width="571.50" height="10.14" fill="#5b5b5b"/><rect x="0.00" y="91.26" width="571.50" height="0.90" fill="#3c3c3c"/><rect x="5.63" y="92.16" width="0.80" height="1.20" fill="#474747"/><rect x="12.02" y="92.16" width="0.80" height="1.20" fill="#474747"/><rect x="18.41" y="92.16" width="0.80" height="1.20" fill="#474747"/><rect x="24.80" y="92.16" width="0.80" height="1.20" fill="#474747"/><rect x="31.19" y="92.16" width="0.80" height="1.20" fill="#474747"/><rect x="37.58" y="92.16" width="0.80" height="1.20" fill="#474747"/><rect x="43.97" y="92.16" width="0.80" height="1.20" fill="#474747"/><rect x="50.36" y="92.16" width="0.80" height="1.20" fill="#474747"/><rect x="56.75" y="92.16" width="0.80" height="1.20" fill="#474747"/><rect x="63.14" y="92.16" width="0.80" height="1.20" fill="#474747"/><rect x="69.53" y="92.16" width="0.80" height="1.20" fill="#474747"/><rect x="75.92" y="92.16" width="0.80" height="1.20" fill="#474747"/><rect x="82.31" y="92.16" width="0.80" height="1.20" fill="#474747"/><rect x="88.70" y="92.16" width="0.80" height="1.20" fill="#474747"/><rect x="95.09" y="92.16" width="0.80" height="1.20" fill="#474747"/><rect x="101.48" y="92.16" width="0.80" height="1.20" fill="#474747"/><rect x="107.87" y="92.16" width="0.80" height="1.20" fill="#474747"/><rect x="114.26" y="92.16" width="0.80" height="1.20" fill="#474747"/><rect x="120.65" y="92.16" width="0.80" height="1.20" fill="#474747"/><rect x="127.04" y="92.16" width="0.80" height="1.20" fill="#474747"/><rect x="133.43" y="92.16" width="0.80" height="1.20" fill="#474747"/><rect x="139.82" y="92.16" width="0.80" height="1.20" fill="#474747"/><rect x="146.21" y="92.16" width="0.80" height="1.20" fill="#474747"/><rect x="152.60" y="92.16" width="0.80" height="1.20" fill="#474747"/><rect x="158.99" y="92.16" width="0.80" height="1.20" fill="#474747"/><rect x="165.38" y="92.16" width="0.80" height="1.20" fill="#474747"/><rect x="171.77" y="92.16" width="0.80" height="1.20" fill="#474747"/><rect x="178.16" y="92.16" width="0.80" height="1.20" fill="#474747"/><rect x="184.55" y="92.16" width="0.80" height="1.20" fill="#474747"/><rect x="190.94" y="92.16" width="0.80" height="1.20" fill="#474747"/><rect x="197.33" y="92.16" width="0.80" height="1.20" fill="#474747"/><rect x="203.72" y="92.16" width="0.80" height="1.20" fill="#474747"/><rect x="210.11" y="92.16" width="0.80" height="1.20" fill="#474747"/><rect x="216.50" y="92.16" width="0.80" height="1.20" fill="#474747"/><rect x="222.89" y="92.16" width="0.80" height="1.20" fill="#474747"/><rect x="229.28" y="92.16" width="0.80" height="1.20" fill="#474747"/><rect x="235.67" y="92.16" width="0.80" height="1.20" fill="#474747"/><rect x="242.06" y="92.16" width="0.80" height="1.20" fill="#474747"/><rect x="248.45" y="92.16" width="0.80" height="1.20" fill="#474747"/><rect x="254.84" y="92.16" width="0.80" height="1.20" fill="#474747"/><rect x="261.23" y="92.16" width="0.80" height="1.20" fill="#474747"/><rect x="267.62" y="92.16" width="0.80" height="1.20" fill="#474747"/><rect x="274.01" y="92.16" width="0.80" height="1.20" fill="#474747"/><rect x="280.40" y="92.16" width="0.80" height="1.20" fill="#474747"/><rect x="286.79" y="92.16" width="0.80" height="1.20" fill="#474747"/><rect x="293.18" y="92.16" width="0.80" height="1.20" fill="#474747"/><rect x="299.57" y="92.16" width="0.80" height="1.20" fill="#474747"/><rect x="305.96" y="92.16" width="0.80" height="1.20" fill="#474747"/><rect x="312.35" y="92.16" width="0.80" height="1.20" fill="#474747"/><rect x="318.74" y="92.16" width="0.80" height="1.20" fill="#474747"/><rect x="325.13" y="92.16" width="0.80" height="1.20" fill="#474747"/><rect x="331.52" y="92.16" width="0.80" height="1.20" fill="#474747"/><rect x="337.91" y="92.16" width="0.80" height="1.20" fill="#474747"/><rect x="344.30" y="92.16" width="0.80" height="1.20" fill="#474747"/><rect x="350.69" y="92.16" width="0.80" height="1.20" fill="#474747"/><rect x="357.08" y="92.16" width="0.80" height="1.20" fill="#474747"/><rect x="363.47" y="92.16" width="0.80" height="1.20" fill="#474747"/><rect x="369.86" y="92.16" width="0.80" height="1.20" fill="#474747"/><rect x="376.25" y="92.16" width="0.80" height="1.20" fill="#474747"/><rect x="382.64" y="92.16" width="0.80" height="1.20" fill="#474747"/><rect x="389.03" y="92.16" width="0.80" height="1.20" fill="#474747"/><rect x="395.42" y="92.16" width="0.80" height="1.20" fill="#474747"/><rect x="401.81" y="92.16" width="0.80" height="1.20" fill="#474747"/><rect x="408.20" y="92.16" width="0.80" height="1.20" fill="#474747"/><rect x="414.59" y="92.16" width="0.80" height="1.20" fill="#474747"/><rect x="420.98" y="92.16" width="0.80" height="1.20" fill="#474747"/><rect x="427.37" y="92.16" width="0.80" height="1.20" fill="#474747"/><rect x="433.76" y="92.16" width="0.80" height="1.20" fill="#474747"/><rect x="440.15" y="92.16" width="0.80" height="1.20" fill="#474747"/><rect x="446.54" y="92.16" width="0.80" height="1.20" fill="#474747"/><rect x="452.93" y="92.16" width="0.80" height="1.20" fill="#474747"/><rect x="459.32" y="92.16" width="0.80" height="1.20" fill="#474747"/><rect x="465.71" y="92.16" width="0.80" height="1.20" fill="#474747"/><rect x="472.10" y="92.16" width="0.80" height="1.20" fill="#474747"/><rect x="478.49" y="92.16" width="0.80" height="1.20" fill="#474747"/><rect x="484.88" y="92.16" width="0.80" height="1.20" fill="#474747"/><rect x="491.27" y="92.16" width="0.80" height="1.20" fill="#474747"/><rect x="497.66" y="92.16" width="0.80" height="1.20" fill="#474747"/><rect x="504.05" y="92.16" width="0.80" height="1.20" fill="#474747"/><rect x="510.44" y="92.16" width="0.80" height="1.20" fill="#474747"/><rect x="516.83" y="92.16" width="0.80" height="1.20" fill="#474747"/><rect x="523.22" y="92.16" width="0.80" height="1.20" fill="#474747"/><rect x="529.61" y="92.16" width="0.80" height="1.20" fill="#474747"/><rect x="536.00" y="92.16" width="0.80" height="1.20" fill="#474747"/><rect x="542.39" y="92.16" width="0.80" height="1.20" fill="#474747"/><rect x="548.78" y="92.16" width="0.80" height="1.20" fill="#474747"/><rect x="555.17" y="92.16" width="0.80" height="1.20" fill="#474747"/><rect x="561.56" y="92.16" width="0.80" height="1.20" fill="#474747"/><rect x="567.95" y="92.16" width="0.80" height="1.20" fill="#474747"/><rect x="0.00" y="101.40" width="571.50" height="10.14" fill="#5b5b5b"/><rect x="0.00" y="101.40" width="571.50" height="0.90" fill="#3c3c3c"/><rect x="5.63" y="102.30" width="0.80" height="1.20" fill="#474747"/><rect x="12.02" y="102.30" width="0.80" height="1.20" fill="#474747"/><rect x="18.41" y="102.30" width="0.80" height="1.20" fill="#474747"/><rect x="24.80" y="102.30" width="0.80" height="1.20" fill="#474747"/><rect x="31.19" y="102.30" width="0.80" height="1.20" fill="#474747"/><rect x="37.58" y="102.30" width="0.80" height="1.20" fill="#474747"/><rect x="43.97" y="102.30" width="0.80" height="1.20" fill="#474747"/><rect x="50.36" y="102.30" width="0.80" height="1.20" fill="#474747"/><rect x="56.75" y="102.30" width="0.80" height="1.20" fill="#474747"/><rect x="63.14" y="102.30" width="0.80" height="1.20" fill="#474747"/><rect x="69.53" y="102.30" width="0.80" height="1.20" fill="#474747"/><rect x="75.92" y="102.30" width="0.80" height="1.20" fill="#474747"/><rect x="82.31" y="102.30" width="0.80" height="1.20" fill="#474747"/><rect x="88.70" y="102.30" width="0.80" height="1.20" fill="#474747"/><rect x="95.09" y="102.30" width="0.80" height="1.20" fill="#474747"/><rect x="101.48" y="102.30" width="0.80" height="1.20" fill="#474747"/><rect x="107.87" y="102.30" width="0.80" height="1.20" fill="#474747"/><rect x="114.26" y="102.30" width="0.80" height="1.20" fill="#474747"/><rect x="120.65" y="102.30" width="0.80" height="1.20" fill="#474747"/><rect x="127.04" y="102.30" width="0.80" height="1.20" fill="#474747"/><rect x="133.43" y="102.30" width="0.80" height="1.20" fill="#474747"/><rect x="139.82" y="102.30" width="0.80" height="1.20" fill="#474747"/><rect x="146.21" y="102.30" width="0.80" height="1.20" fill="#474747"/><rect x="152.60" y="102.30" width="0.80" height="1.20" fill="#474747"/><rect x="158.99" y="102.30" width="0.80" height="1.20" fill="#474747"/><rect x="165.38" y="102.30" width="0.80" height="1.20" fill="#474747"/><rect x="171.77" y="102.30" width="0.80" height="1.20" fill="#474747"/><rect x="178.16" y="102.30" width="0.80" height="1.20" fill="#474747"/><rect x="184.55" y="102.30" width="0.80" height="1.20" fill="#474747"/><rect x="190.94" y="102.30" width="0.80" height="1.20" fill="#474747"/><rect x="197.33" y="102.30" width="0.80" height="1.20" fill="#474747"/><rect x="203.72" y="102.30" width="0.80" height="1.20" fill="#474747"/><rect x="210.11" y="102.30" width="0.80" height="1.20" fill="#474747"/><rect x="216.50" y="102.30" width="0.80" height="1.20" fill="#474747"/><rect x="222.89" y="102.30" width="0.80" height="1.20" fill="#474747"/><rect x="229.28" y="102.30" width="0.80" height="1.20" fill="#474747"/><rect x="235.67" y="102.30" width="0.80" height="1.20" fill="#474747"/><rect x="242.06" y="102.30" width="0.80" height="1.20" fill="#474747"/><rect x="248.45" y="102.30" width="0.80" height="1.20" fill="#474747"/><rect x="254.84" y="102.30" width="0.80" height="1.20" fill="#474747"/><rect x="261.23" y="102.30" width="0.80" height="1.20" fill="#474747"/><rect x="267.62" y="102.30" width="0.80" height="1.20" fill="#474747"/><rect x="274.01" y="102.30" width="0.80" height="1.20" fill="#474747"/><rect x="280.40" y="102.30" width="0.80" height="1.20" fill="#474747"/><rect x="286.79" y="102.30" width="0.80" height="1.20" fill="#474747"/><rect x="293.18" y="102.30" width="0.80" height="1.20" fill="#474747"/><rect x="299.57" y="102.30" width="0.80" height="1.20" fill="#474747"/><rect x="305.96" y="102.30" width="0.80" height="1.20" fill="#474747"/><rect x="312.35" y="102.30" width="0.80" height="1.20" fill="#474747"/><rect x="318.74" y="102.30" width="0.80" height="1.20" fill="#474747"/><rect x="325.13" y="102.30" width="0.80" height="1.20" fill="#474747"/><rect x="331.52" y="102.30" width="0.80" height="1.20" fill="#474747"/><rect x="337.91" y="102.30" width="0.80" height="1.20" fill="#474747"/><rect x="344.30" y="102.30" width="0.80" height="1.20" fill="#474747"/><rect x="350.69" y="102.30" width="0.80" height="1.20" fill="#474747"/><rect x="357.08" y="102.30" width="0.80" height="1.20" fill="#474747"/><rect x="363.47" y="102.30" width="0.80" height="1.20" fill="#474747"/><rect x="369.86" y="102.30" width="0.80" height="1.20" fill="#474747"/><rect x="376.25" y="102.30" width="0.80" height="1.20" fill="#474747"/><rect x="382.64" y="102.30" width="0.80" height="1.20" fill="#474747"/><rect x="389.03" y="102.30" width="0.80" height="1.20" fill="#474747"/><rect x="395.42" y="102.30" width="0.80" height="1.20" fill="#474747"/><rect x="401.81" y="102.30" width="0.80" height="1.20" fill="#474747"/><rect x="408.20" y="102.30" width="0.80" height="1.20" fill="#474747"/><rect x="414.59" y="102.30" width="0.80" height="1.20" fill="#474747"/><rect x="420.98" y="102.30" width="0.80" height="1.20" fill="#474747"/><rect x="427.37" y="102.30" width="0.80" height="1.20" fill="#474747"/><rect x="433.76" y="102.30" width="0.80" height="1.20" fill="#474747"/><rect x="440.15" y="102.30" width="0.80" height="1.20" fill="#474747"/><rect x="446.54" y="102.30" width="0.80" height="1.20" fill="#474747"/><rect x="452.93" y="102.30" width="0.80" height="1.20" fill="#474747"/><rect x="459.32" y="102.30" width="0.80" height="1.20" fill="#474747"/><rect x="465.71" y="102.30" width="0.80" height="1.20" fill="#474747"/><rect x="472.10" y="102.30" width="0.80" height="1.20" fill="#474747"/><rect x="478.49" y="102.30" width="0.80" height="1.20" fill="#474747"/><rect x="484.88" y="102.30" width="0.80" height="1.20" fill="#474747"/><rect x="491.27" y="102.30" width="0.80" height="1.20" fill="#474747"/><rect x="497.66" y="102.30" width="0.80" height="1.20" fill="#474747"/><rect x="504.05" y="102.30" width="0.80" height="1.20" fill="#474747"/><rect x="510.44" y="102.30" width="0.80" height="1.20" fill="#474747"/><rect x="516.83" y="102.30" width="0.80" height="1.20" fill="#474747"/><rect x="523.22" y="102.30" width="0.80" height="1.20" fill="#474747"/><rect x="529.61" y="102.30" width="0.80" height="1.20" fill="#474747"/><rect x="536.00" y="102.30" width="0.80" height="1.20" fill="#474747"/><rect x="542.39" y="102.30" width="0.80" height="1.20" fill="#474747"/><rect x="548.78" y="102.30" width="0.80" height="1.20" fill="#474747"/><rect x="555.17" y="102.30" width="0.80" height="1.20" fill="#474747"/><rect x="561.56" y="102.30" width="0.80" height="1.20" fill="#474747"/><rect x="567.95" y="102.30" width="0.80" height="1.20" fill="#474747"/><rect x="0.00" y="111.54" width="571.50" height="10.14" fill="#5b5b5b"/><rect x="0.00" y="111.54" width="571.50" height="0.90" fill="#3c3c3c"/><rect x="5.63" y="112.44" width="0.80" height="1.20" fill="#474747"/><rect x="12.02" y="112.44" width="0.80" height="1.20" fill="#474747"/><rect x="18.41" y="112.44" width="0.80" height="1.20" fill="#474747"/><rect x="24.80" y="112.44" width="0.80" height="1.20" fill="#474747"/><rect x="31.19" y="112.44" width="0.80" height="1.20" fill="#474747"/><rect x="37.58" y="112.44" width="0.80" height="1.20" fill="#474747"/><rect x="43.97" y="112.44" width="0.80" height="1.20" fill="#474747"/><rect x="50.36" y="112.44" width="0.80" height="1.20" fill="#474747"/><rect x="56.75" y="112.44" width="0.80" height="1.20" fill="#474747"/><rect x="63.14" y="112.44" width="0.80" height="1.20" fill="#474747"/><rect x="69.53" y="112.44" width="0.80" height="1.20" fill="#474747"/><rect x="75.92" y="112.44" width="0.80" height="1.20" fill="#474747"/><rect x="82.31" y="112.44" width="0.80" height="1.20" fill="#474747"/><rect x="88.70" y="112.44" width="0.80" height="1.20" fill="#474747"/><rect x="95.09" y="112.44" width="0.80" height="1.20" fill="#474747"/><rect x="101.48" y="112.44" width="0.80" height="1.20" fill="#474747"/><rect x="107.87" y="112.44" width="0.80" height="1.20" fill="#474747"/><rect x="114.26" y="112.44" width="0.80" height="1.20" fill="#474747"/><rect x="120.65" y="112.44" width="0.80" height="1.20" fill="#474747"/><rect x="127.04" y="112.44" width="0.80" height="1.20" fill="#474747"/><rect x="133.43" y="112.44" width="0.80" height="1.20" fill="#474747"/><rect x="139.82" y="112.44" width="0.80" height="1.20" fill="#474747"/><rect x="146.21" y="112.44" width="0.80" height="1.20" fill="#474747"/><rect x="152.60" y="112.44" width="0.80" height="1.20" fill="#474747"/><rect x="158.99" y="112.44" width="0.80" height="1.20" fill="#474747"/><rect x="165.38" y="112.44" width="0.80" height="1.20" fill="#474747"/><rect x="171.77" y="112.44" width="0.80" height="1.20" fill="#474747"/><rect x="178.16" y="112.44" width="0.80" height="1.20" fill="#474747"/><rect x="184.55" y="112.44" width="0.80" height="1.20" fill="#474747"/><rect x="190.94" y="112.44" width="0.80" height="1.20" fill="#474747"/><rect x="197.33" y="112.44" width="0.80" height="1.20" fill="#474747"/><rect x="203.72" y="112.44" width="0.80" height="1.20" fill="#474747"/><rect x="210.11" y="112.44" width="0.80" height="1.20" fill="#474747"/><rect x="216.50" y="112.44" width="0.80" height="1.20" fill="#474747"/><rect x="222.89" y="112.44" width="0.80" height="1.20" fill="#474747"/><rect x="229.28" y="112.44" width="0.80" height="1.20" fill="#474747"/><rect x="235.67" y="112.44" width="0.80" height="1.20" fill="#474747"/><rect x="242.06" y="112.44" width="0.80" height="1.20" fill="#474747"/><rect x="248.45" y="112.44" width="0.80" height="1.20" fill="#474747"/><rect x="254.84" y="112.44" width="0.80" height="1.20" fill="#474747"/><rect x="261.23" y="112.44" width="0.80" height="1.20" fill="#474747"/><rect x="267.62" y="112.44" width="0.80" height="1.20" fill="#474747"/><rect x="274.01" y="112.44" width="0.80" height="1.20" fill="#474747"/><rect x="280.40" y="112.44" width="0.80" height="1.20" fill="#474747"/><rect x="286.79" y="112.44" width="0.80" height="1.20" fill="#474747"/><rect x="293.18" y="112.44" width="0.80" height="1.20" fill="#474747"/><rect x="299.57" y="112.44" width="0.80" height="1.20" fill="#474747"/><rect x="305.96" y="112.44" width="0.80" height="1.20" fill="#474747"/><rect x="312.35" y="112.44" width="0.80" height="1.20" fill="#474747"/><rect x="318.74" y="112.44" width="0.80" height="1.20" fill="#474747"/><rect x="325.13" y="112.44" width="0.80" height="1.20" fill="#474747"/><rect x="331.52" y="112.44" width="0.80" height="1.20" fill="#474747"/><rect x="337.91" y="112.44" width="0.80" height="1.20" fill="#474747"/><rect x="344.30" y="112.44" width="0.80" height="1.20" fill="#474747"/><rect x="350.69" y="112.44" width="0.80" height="1.20" fill="#474747"/><rect x="357.08" y="112.44" width="0.80" height="1.20" fill="#474747"/><rect x="363.47" y="112.44" width="0.80" height="1.20" fill="#474747"/><rect x="369.86" y="112.44" width="0.80" height="1.20" fill="#474747"/><rect x="376.25" y="112.44" width="0.80" height="1.20" fill="#474747"/><rect x="382.64" y="112.44" width="0.80" height="1.20" fill="#474747"/><rect x="389.03" y="112.44" width="0.80" height="1.20" fill="#474747"/><rect x="395.42" y="112.44" width="0.80" height="1.20" fill="#474747"/><rect x="401.81" y="112.44" width="0.80" height="1.20" fill="#474747"/><rect x="408.20" y="112.44" width="0.80" height="1.20" fill="#474747"/><rect x="414.59" y="112.44" width="0.80" height="1.20" fill="#474747"/><rect x="420.98" y="112.44" width="0.80" height="1.20" fill="#474747"/><rect x="427.37" y="112.44" width="0.80" height="1.20" fill="#474747"/><rect x="433.76" y="112.44" width="0.80" height="1.20" fill="#474747"/><rect x="440.15" y="112.44" width="0.80" height="1.20" fill="#474747"/><rect x="446.54" y="112.44" width="0.80" height="1.20" fill="#474747"/><rect x="452.93" y="112.44" width="0.80" height="1.20" fill="#474747"/><rect x="459.32" y="112.44" width="0.80" height="1.20" fill="#474747"/><rect x="465.71" y="112.44" width="0.80" height="1.20" fill="#474747"/><rect x="472.10" y="112.44" width="0.80" height="1.20" fill="#474747"/><rect x="478.49" y="112.44" width="0.80" height="1.20" fill="#474747"/><rect x="484.88" y="112.44" width="0.80" height="1.20" fill="#474747"/><rect x="491.27" y="112.44" width="0.80" height="1.20" fill="#474747"/><rect x="497.66" y="112.44" width="0.80" height="1.20" fill="#474747"/><rect x="504.05" y="112.44" width="0.80" height="1.20" fill="#474747"/><rect x="510.44" y="112.44" width="0.80" height="1.20" fill="#474747"/><rect x="516.83" y="112.44" width="0.80" height="1.20" fill="#474747"/><rect x="523.22" y="112.44" width="0.80" height="1.20" fill="#474747"/><rect x="529.61" y="112.44" width="0.80" height="1.20" fill="#474747"/><rect x="536.00" y="112.44" width="0.80" height="1.20" fill="#474747"/><rect x="542.39" y="112.44" width="0.80" height="1.20" fill="#474747"/><rect x="548.78" y="112.44" width="0.80" height="1.20" fill="#474747"/><rect x="555.17" y="112.44" width="0.80" height="1.20" fill="#474747"/><rect x="561.56" y="112.44" width="0.80" height="1.20" fill="#474747"/><rect x="567.95" y="112.44" width="0.80" height="1.20" fill="#474747"/><rect x="0.00" y="121.68" width="571.50" height="10.14" fill="#5b5b5b"/><rect x="0.00" y="121.68" width="571.50" height="0.90" fill="#3c3c3c"/><rect x="5.63" y="122.58" width="0.80" height="1.20" fill="#474747"/><rect x="12.02" y="122.58" width="0.80" height="1.20" fill="#474747"/><rect x="18.41" y="122.58" width="0.80" height="1.20" fill="#474747"/><rect x="24.80" y="122.58" width="0.80" height="1.20" fill="#474747"/><rect x="31.19" y="122.58" width="0.80" height="1.20" fill="#474747"/><rect x="37.58" y="122.58" width="0.80" height="1.20" fill="#474747"/><rect x="43.97" y="122.58" width="0.80" height="1.20" fill="#474747"/><rect x="50.36" y="122.58" width="0.80" height="1.20" fill="#474747"/><rect x="56.75" y="122.58" width="0.80" height="1.20" fill="#474747"/><rect x="63.14" y="122.58" width="0.80" height="1.20" fill="#474747"/><rect x="69.53" y="122.58" width="0.80" height="1.20" fill="#474747"/><rect x="75.92" y="122.58" width="0.80" height="1.20" fill="#474747"/><rect x="82.31" y="122.58" width="0.80" height="1.20" fill="#474747"/><rect x="88.70" y="122.58" width="0.80" height="1.20" fill="#474747"/><rect x="95.09" y="122.58" width="0.80" height="1.20" fill="#474747"/><rect x="101.48" y="122.58" width="0.80" height="1.20" fill="#474747"/><rect x="107.87" y="122.58" width="0.80" height="1.20" fill="#474747"/><rect x="114.26" y="122.58" width="0.80" height="1.20" fill="#474747"/><rect x="120.65" y="122.58" width="0.80" height="1.20" fill="#474747"/><rect x="127.04" y="122.58" width="0.80" height="1.20" fill="#474747"/><rect x="133.43" y="122.58" width="0.80" height="1.20" fill="#474747"/><rect x="139.82" y="122.58" width="0.80" height="1.20" fill="#474747"/><rect x="146.21" y="122.58" width="0.80" height="1.20" fill="#474747"/><rect x="152.60" y="122.58" width="0.80" height="1.20" fill="#474747"/><rect x="158.99" y="122.58" width="0.80" height="1.20" fill="#474747"/><rect x="165.38" y="122.58" width="0.80" height="1.20" fill="#474747"/><rect x="171.77" y="122.58" width="0.80" height="1.20" fill="#474747"/><rect x="178.16" y="122.58" width="0.80" height="1.20" fill="#474747"/><rect x="184.55" y="122.58" width="0.80" height="1.20" fill="#474747"/><rect x="190.94" y="122.58" width="0.80" height="1.20" fill="#474747"/><rect x="197.33" y="122.58" width="0.80" height="1.20" fill="#474747"/><rect x="203.72" y="122.58" width="0.80" height="1.20" fill="#474747"/><rect x="210.11" y="122.58" width="0.80" height="1.20" fill="#474747"/><rect x="216.50" y="122.58" width="0.80" height="1.20" fill="#474747"/><rect x="222.89" y="122.58" width="0.80" height="1.20" fill="#474747"/><rect x="229.28" y="122.58" width="0.80" height="1.20" fill="#474747"/><rect x="235.67" y="122.58" width="0.80" height="1.20" fill="#474747"/><rect x="242.06" y="122.58" width="0.80" height="1.20" fill="#474747"/><rect x="248.45" y="122.58" width="0.80" height="1.20" fill="#474747"/><rect x="254.84" y="122.58" width="0.80" height="1.20" fill="#474747"/><rect x="261.23" y="122.58" width="0.80" height="1.20" fill="#474747"/><rect x="267.62" y="122.58" width="0.80" height="1.20" fill="#474747"/><rect x="274.01" y="122.58" width="0.80" height="1.20" fill="#474747"/><rect x="280.40" y="122.58" width="0.80" height="1.20" fill="#474747"/><rect x="286.79" y="122.58" width="0.80" height="1.20" fill="#474747"/><rect x="293.18" y="122.58" width="0.80" height="1.20" fill="#474747"/><rect x="299.57" y="122.58" width="0.80" height="1.20" fill="#474747"/><rect x="305.96" y="122.58" width="0.80" height="1.20" fill="#474747"/><rect x="312.35" y="122.58" width="0.80" height="1.20" fill="#474747"/><rect x="318.74" y="122.58" width="0.80" height="1.20" fill="#474747"/><rect x="325.13" y="122.58" width="0.80" height="1.20" fill="#474747"/><rect x="331.52" y="122.58" width="0.80" height="1.20" fill="#474747"/><rect x="337.91" y="122.58" width="0.80" height="1.20" fill="#474747"/><rect x="344.30" y="122.58" width="0.80" height="1.20" fill="#474747"/><rect x="350.69" y="122.58" width="0.80" height="1.20" fill="#474747"/><rect x="357.08" y="122.58" width="0.80" height="1.20" fill="#474747"/><rect x="363.47" y="122.58" width="0.80" height="1.20" fill="#474747"/><rect x="369.86" y="122.58" width="0.80" height="1.20" fill="#474747"/><rect x="376.25" y="122.58" width="0.80" height="1.20" fill="#474747"/><rect x="382.64" y="122.58" width="0.80" height="1.20" fill="#474747"/><rect x="389.03" y="122.58" width="0.80" height="1.20" fill="#474747"/><rect x="395.42" y="122.58" width="0.80" height="1.20" fill="#474747"/><rect x="401.81" y="122.58" width="0.80" height="1.20" fill="#474747"/><rect x="408.20" y="122.58" width="0.80" height="1.20" fill="#474747"/><rect x="414.59" y="122.58" width="0.80" height="1.20" fill="#474747"/><rect x="420.98" y="122.58" width="0.80" height="1.20" fill="#474747"/><rect x="427.37" y="122.58" width="0.80" height="1.20" fill="#474747"/><rect x="433.76" y="122.58" width="0.80" height="1.20" fill="#474747"/><rect x="440.15" y="122.58" width="0.80" height="1.20" fill="#474747"/><rect x="446.54" y="122.58" width="0.80" height="1.20" fill="#474747"/><rect x="452.93" y="122.58" width="0.80" height="1.20" fill="#474747"/><rect x="459.32" y="122.58" width="0.80" height="1.20" fill="#474747"/><rect x="465.71" y="122.58" width="0.80" height="1.20" fill="#474747"/><rect x="472.10" y="122.58" width="0.80" height="1.20" fill="#474747"/><rect x="478.49" y="122.58" width="0.80" height="1.20" fill="#474747"/><rect x="484.88" y="122.58" width="0.80" height="1.20" fill="#474747"/><rect x="491.27" y="122.58" width="0.80" height="1.20" fill="#474747"/><rect x="497.66" y="122.58" width="0.80" height="1.20" fill="#474747"/><rect x="504.05" y="122.58" width="0.80" height="1.20" fill="#474747"/><rect x="510.44" y="122.58" width="0.80" height="1.20" fill="#474747"/><rect x="516.83" y="122.58" width="0.80" height="1.20" fill="#474747"/><rect x="523.22" y="122.58" width="0.80" height="1.20" fill="#474747"/><rect x="529.61" y="122.58" width="0.80" height="1.20" fill="#474747"/><rect x="536.00" y="122.58" width="0.80" height="1.20" fill="#474747"/><rect x="542.39" y="122.58" width="0.80" height="1.20" fill="#474747"/><rect x="548.78" y="122.58" width="0.80" height="1.20" fill="#474747"/><rect x="555.17" y="122.58" width="0.80" height="1.20" fill="#474747"/><rect x="561.56" y="122.58" width="0.80" height="1.20" fill="#474747"/><rect x="567.95" y="122.58" width="0.80" height="1.20" fill="#474747"/><rect x="0.00" y="131.82" width="571.50" height="10.14" fill="#5b5b5b"/><rect x="0.00" y="131.82" width="571.50" height="0.90" fill="#3c3c3c"/><rect x="5.63" y="132.72" width="0.80" height="1.20" fill="#474747"/><rect x="12.02" y="132.72" width="0.80" height="1.20" fill="#474747"/><rect x="18.41" y="132.72" width="0.80" height="1.20" fill="#474747"/><rect x="24.80" y="132.72" width="0.80" height="1.20" fill="#474747"/><rect x="31.19" y="132.72" width="0.80" height="1.20" fill="#474747"/><rect x="37.58" y="132.72" width="0.80" height="1.20" fill="#474747"/><rect x="43.97" y="132.72" width="0.80" height="1.20" fill="#474747"/><rect x="50.36" y="132.72" width="0.80" height="1.20" fill="#474747"/><rect x="56.75" y="132.72" width="0.80" height="1.20" fill="#474747"/><rect x="63.14" y="132.72" width="0.80" height="1.20" fill="#474747"/><rect x="69.53" y="132.72" width="0.80" height="1.20" fill="#474747"/><rect x="75.92" y="132.72" width="0.80" height="1.20" fill="#474747"/><rect x="82.31" y="132.72" width="0.80" height="1.20" fill="#474747"/><rect x="88.70" y="132.72" width="0.80" height="1.20" fill="#474747"/><rect x="95.09" y="132.72" width="0.80" height="1.20" fill="#474747"/><rect x="101.48" y="132.72" width="0.80" height="1.20" fill="#474747"/><rect x="107.87" y="132.72" width="0.80" height="1.20" fill="#474747"/><rect x="114.26" y="132.72" width="0.80" height="1.20" fill="#474747"/><rect x="120.65" y="132.72" width="0.80" height="1.20" fill="#474747"/><rect x="127.04" y="132.72" width="0.80" height="1.20" fill="#474747"/><rect x="133.43" y="132.72" width="0.80" height="1.20" fill="#474747"/><rect x="139.82" y="132.72" width="0.80" height="1.20" fill="#474747"/><rect x="146.21" y="132.72" width="0.80" height="1.20" fill="#474747"/><rect x="152.60" y="132.72" width="0.80" height="1.20" fill="#474747"/><rect x="158.99" y="132.72" width="0.80" height="1.20" fill="#474747"/><rect x="165.38" y="132.72" width="0.80" height="1.20" fill="#474747"/><rect x="171.77" y="132.72" width="0.80" height="1.20" fill="#474747"/><rect x="178.16" y="132.72" width="0.80" height="1.20" fill="#474747"/><rect x="184.55" y="132.72" width="0.80" height="1.20" fill="#474747"/><rect x="190.94" y="132.72" width="0.80" height="1.20" fill="#474747"/><rect x="197.33" y="132.72" width="0.80" height="1.20" fill="#474747"/><rect x="203.72" y="132.72" width="0.80" height="1.20" fill="#474747"/><rect x="210.11" y="132.72" width="0.80" height="1.20" fill="#474747"/><rect x="216.50" y="132.72" width="0.80" height="1.20" fill="#474747"/><rect x="222.89" y="132.72" width="0.80" height="1.20" fill="#474747"/><rect x="229.28" y="132.72" width="0.80" height="1.20" fill="#474747"/><rect x="235.67" y="132.72" width="0.80" height="1.20" fill="#474747"/><rect x="242.06" y="132.72" width="0.80" height="1.20" fill="#474747"/><rect x="248.45" y="132.72" width="0.80" height="1.20" fill="#474747"/><rect x="254.84" y="132.72" width="0.80" height="1.20" fill="#474747"/><rect x="261.23" y="132.72" width="0.80" height="1.20" fill="#474747"/><rect x="267.62" y="132.72" width="0.80" height="1.20" fill="#474747"/><rect x="274.01" y="132.72" width="0.80" height="1.20" fill="#474747"/><rect x="280.40" y="132.72" width="0.80" height="1.20" fill="#474747"/><rect x="286.79" y="132.72" width="0.80" height="1.20" fill="#474747"/><rect x="293.18" y="132.72" width="0.80" height="1.20" fill="#474747"/><rect x="299.57" y="132.72" width="0.80" height="1.20" fill="#474747"/><rect x="305.96" y="132.72" width="0.80" height="1.20" fill="#474747"/><rect x="312.35" y="132.72" width="0.80" height="1.20" fill="#474747"/><rect x="318.74" y="132.72" width="0.80" height="1.20" fill="#474747"/><rect x="325.13" y="132.72" width="0.80" height="1.20" fill="#474747"/><rect x="331.52" y="132.72" width="0.80" height="1.20" fill="#474747"/><rect x="337.91" y="132.72" width="0.80" height="1.20" fill="#474747"/><rect x="344.30" y="132.72" width="0.80" height="1.20" fill="#474747"/><rect x="350.69" y="132.72" width="0.80" height="1.20" fill="#474747"/><rect x="357.08" y="132.72" width="0.80" height="1.20" fill="#474747"/><rect x="363.47" y="132.72" width="0.80" height="1.20" fill="#474747"/><rect x="369.86" y="132.72" width="0.80" height="1.20" fill="#474747"/><rect x="376.25" y="132.72" width="0.80" height="1.20" fill="#474747"/><rect x="382.64" y="132.72" width="0.80" height="1.20" fill="#474747"/><rect x="389.03" y="132.72" width="0.80" height="1.20" fill="#474747"/><rect x="395.42" y="132.72" width="0.80" height="1.20" fill="#474747"/><rect x="401.81" y="132.72" width="0.80" height="1.20" fill="#474747"/><rect x="408.20" y="132.72" width="0.80" height="1.20" fill="#474747"/><rect x="414.59" y="132.72" width="0.80" height="1.20" fill="#474747"/><rect x="420.98" y="132.72" width="0.80" height="1.20" fill="#474747"/><rect x="427.37" y="132.72" width="0.80" height="1.20" fill="#474747"/><rect x="433.76" y="132.72" width="0.80" height="1.20" fill="#474747"/><rect x="440.15" y="132.72" width="0.80" height="1.20" fill="#474747"/><rect x="446.54" y="132.72" width="0.80" height="1.20" fill="#474747"/><rect x="452.93" y="132.72" width="0.80" height="1.20" fill="#474747"/><rect x="459.32" y="132.72" width="0.80" height="1.20" fill="#474747"/><rect x="465.71" y="132.72" width="0.80" height="1.20" fill="#474747"/><rect x="472.10" y="132.72" width="0.80" height="1.20" fill="#474747"/><rect x="478.49" y="132.72" width="0.80" height="1.20" fill="#474747"/><rect x="484.88" y="132.72" width="0.80" height="1.20" fill="#474747"/><rect x="491.27" y="132.72" width="0.80" height="1.20" fill="#474747"/><rect x="497.66" y="132.72" width="0.80" height="1.20" fill="#474747"/><rect x="504.05" y="132.72" width="0.80" height="1.20" fill="#474747"/><rect x="510.44" y="132.72" width="0.80" height="1.20" fill="#474747"/><rect x="516.83" y="132.72" width="0.80" height="1.20" fill="#474747"/><rect x="523.22" y="132.72" width="0.80" height="1.20" fill="#474747"/><rect x="529.61" y="132.72" width="0.80" height="1.20" fill="#474747"/><rect x="536.00" y="132.72" width="0.80" height="1.20" fill="#474747"/><rect x="542.39" y="132.72" width="0.80" height="1.20" fill="#474747"/><rect x="548.78" y="132.72" width="0.80" height="1.20" fill="#474747"/><rect x="555.17" y="132.72" width="0.80" height="1.20" fill="#474747"/><rect x="561.56" y="132.72" width="0.80" height="1.20" fill="#474747"/><rect x="567.95" y="132.72" width="0.80" height="1.20" fill="#474747"/><rect x="0.00" y="141.96" width="571.50" height="10.14" fill="#5b5b5b"/><rect x="0.00" y="141.96" width="571.50" height="0.90" fill="#3c3c3c"/><rect x="5.63" y="142.86" width="0.80" height="1.20" fill="#474747"/><rect x="12.02" y="142.86" width="0.80" height="1.20" fill="#474747"/><rect x="18.41" y="142.86" width="0.80" height="1.20" fill="#474747"/><rect x="24.80" y="142.86" width="0.80" height="1.20" fill="#474747"/><rect x="31.19" y="142.86" width="0.80" height="1.20" fill="#474747"/><rect x="37.58" y="142.86" width="0.80" height="1.20" fill="#474747"/><rect x="43.97" y="142.86" width="0.80" height="1.20" fill="#474747"/><rect x="50.36" y="142.86" width="0.80" height="1.20" fill="#474747"/><rect x="56.75" y="142.86" width="0.80" height="1.20" fill="#474747"/><rect x="63.14" y="142.86" width="0.80" height="1.20" fill="#474747"/><rect x="69.53" y="142.86" width="0.80" height="1.20" fill="#474747"/><rect x="75.92" y="142.86" width="0.80" height="1.20" fill="#474747"/><rect x="82.31" y="142.86" width="0.80" height="1.20" fill="#474747"/><rect x="88.70" y="142.86" width="0.80" height="1.20" fill="#474747"/><rect x="95.09" y="142.86" width="0.80" height="1.20" fill="#474747"/><rect x="101.48" y="142.86" width="0.80" height="1.20" fill="#474747"/><rect x="107.87" y="142.86" width="0.80" height="1.20" fill="#474747"/><rect x="114.26" y="142.86" width="0.80" height="1.20" fill="#474747"/><rect x="120.65" y="142.86" width="0.80" height="1.20" fill="#474747"/><rect x="127.04" y="142.86" width="0.80" height="1.20" fill="#474747"/><rect x="133.43" y="142.86" width="0.80" height="1.20" fill="#474747"/><rect x="139.82" y="142.86" width="0.80" height="1.20" fill="#474747"/><rect x="146.21" y="142.86" width="0.80" height="1.20" fill="#474747"/><rect x="152.60" y="142.86" width="0.80" height="1.20" fill="#474747"/><rect x="158.99" y="142.86" width="0.80" height="1.20" fill="#474747"/><rect x="165.38" y="142.86" width="0.80" height="1.20" fill="#474747"/><rect x="171.77" y="142.86" width="0.80" height="1.20" fill="#474747"/><rect x="178.16" y="142.86" width="0.80" height="1.20" fill="#474747"/><rect x="184.55" y="142.86" width="0.80" height="1.20" fill="#474747"/><rect x="190.94" y="142.86" width="0.80" height="1.20" fill="#474747"/><rect x="197.33" y="142.86" width="0.80" height="1.20" fill="#474747"/><rect x="203.72" y="142.86" width="0.80" height="1.20" fill="#474747"/><rect x="210.11" y="142.86" width="0.80" height="1.20" fill="#474747"/><rect x="216.50" y="142.86" width="0.80" height="1.20" fill="#474747"/><rect x="222.89" y="142.86" width="0.80" height="1.20" fill="#474747"/><rect x="229.28" y="142.86" width="0.80" height="1.20" fill="#474747"/><rect x="235.67" y="142.86" width="0.80" height="1.20" fill="#474747"/><rect x="242.06" y="142.86" width="0.80" height="1.20" fill="#474747"/><rect x="248.45" y="142.86" width="0.80" height="1.20" fill="#474747"/><rect x="254.84" y="142.86" width="0.80" height="1.20" fill="#474747"/><rect x="261.23" y="142.86" width="0.80" height="1.20" fill="#474747"/><rect x="267.62" y="142.86" width="0.80" height="1.20" fill="#474747"/><rect x="274.01" y="142.86" width="0.80" height="1.20" fill="#474747"/><rect x="280.40" y="142.86" width="0.80" height="1.20" fill="#474747"/><rect x="286.79" y="142.86" width="0.80" height="1.20" fill="#474747"/><rect x="293.18" y="142.86" width="0.80" height="1.20" fill="#474747"/><rect x="299.57" y="142.86" width="0.80" height="1.20" fill="#474747"/><rect x="305.96" y="142.86" width="0.80" height="1.20" fill="#474747"/><rect x="312.35" y="142.86" width="0.80" height="1.20" fill="#474747"/><rect x="318.74" y="142.86" width="0.80" height="1.20" fill="#474747"/><rect x="325.13" y="142.86" width="0.80" height="1.20" fill="#474747"/><rect x="331.52" y="142.86" width="0.80" height="1.20" fill="#474747"/><rect x="337.91" y="142.86" width="0.80" height="1.20" fill="#474747"/><rect x="344.30" y="142.86" width="0.80" height="1.20" fill="#474747"/><rect x="350.69" y="142.86" width="0.80" height="1.20" fill="#474747"/><rect x="357.08" y="142.86" width="0.80" height="1.20" fill="#474747"/><rect x="363.47" y="142.86" width="0.80" height="1.20" fill="#474747"/><rect x="369.86" y="142.86" width="0.80" height="1.20" fill="#474747"/><rect x="376.25" y="142.86" width="0.80" height="1.20" fill="#474747"/><rect x="382.64" y="142.86" width="0.80" height="1.20" fill="#474747"/><rect x="389.03" y="142.86" width="0.80" height="1.20" fill="#474747"/><rect x="395.42" y="142.86" width="0.80" height="1.20" fill="#474747"/><rect x="401.81" y="142.86" width="0.80" height="1.20" fill="#474747"/><rect x="408.20" y="142.86" width="0.80" height="1.20" fill="#474747"/><rect x="414.59" y="142.86" width="0.80" height="1.20" fill="#474747"/><rect x="420.98" y="142.86" width="0.80" height="1.20" fill="#474747"/><rect x="427.37" y="142.86" width="0.80" height="1.20" fill="#474747"/><rect x="433.76" y="142.86" width="0.80" height="1.20" fill="#474747"/><rect x="440.15" y="142.86" width="0.80" height="1.20" fill="#474747"/><rect x="446.54" y="142.86" width="0.80" height="1.20" fill="#474747"/><rect x="452.93" y="142.86" width="0.80" height="1.20" fill="#474747"/><rect x="459.32" y="142.86" width="0.80" height="1.20" fill="#474747"/><rect x="465.71" y="142.86" width="0.80" height="1.20" fill="#474747"/><rect x="472.10" y="142.86" width="0.80" height="1.20" fill="#474747"/><rect x="478.49" y="142.86" width="0.80" height="1.20" fill="#474747"/><rect x="484.88" y="142.86" width="0.80" height="1.20" fill="#474747"/><rect x="491.27" y="142.86" width="0.80" height="1.20" fill="#474747"/><rect x="497.66" y="142.86" width="0.80" height="1.20" fill="#474747"/><rect x="504.05" y="142.86" width="0.80" height="1.20" fill="#474747"/><rect x="510.44" y="142.86" width="0.80" height="1.20" fill="#474747"/><rect x="516.83" y="142.86" width="0.80" height="1.20" fill="#474747"/><rect x="523.22" y="142.86" width="0.80" height="1.20" fill="#474747"/><rect x="529.61" y="142.86" width="0.80" height="1.20" fill="#474747"/><rect x="536.00" y="142.86" width="0.80" height="1.20" fill="#474747"/><rect x="542.39" y="142.86" width="0.80" height="1.20" fill="#474747"/><rect x="548.78" y="142.86" width="0.80" height="1.20" fill="#474747"/><rect x="555.17" y="142.86" width="0.80" height="1.20" fill="#474747"/><rect x="561.56" y="142.86" width="0.80" height="1.20" fill="#474747"/><rect x="567.95" y="142.86" width="0.80" height="1.20" fill="#474747"/><rect x="118.45" y="24.88" width="1.00" height="3.00" fill="#2e2e2e"/><rect x="120.65" y="21.28" width="0.80" height="9.14" fill="#1e1e1e"/><ellipse cx="123.84" cy="26.28" rx="1.15" ry="1.65" fill="none" stroke="#2e2e2e" stroke-width="0.6"/><rect x="118.45" y="35.02" width="1.00" height="3.00" fill="#2e2e2e"/><rect x="120.65" y="31.42" width="0.80" height="9.14" fill="#1e1e1e"/><ellipse cx="123.84" cy="36.42" rx="1.15" ry="1.65" fill="none" stroke="#2e2e2e" stroke-width="0.6"/><rect x="118.45" y="45.16" width="1.00" height="3.00" fill="#2e2e2e"/><rect x="120.65" y="41.56" width="0.80" height="9.14" fill="#1e1e1e"/><ellipse cx="123.84" cy="46.56" rx="1.15" ry="1.65" fill="none" stroke="#2e2e2e" stroke-width="0.6"/><rect x="118.45" y="55.30" width="1.00" height="3.00" fill="#2e2e2e"/><rect x="120.65" y="51.70" width="0.80" height="9.14" fill="#1e1e1e"/><ellipse cx="123.84" cy="56.70" rx="1.15" ry="1.65" fill="none" stroke="#2e2e2e" stroke-width="0.6"/><rect x="118.45" y="75.58" width="1.00" height="3.00" fill="#2e2e2e"/><rect x="120.65" y="71.98" width="0.80" height="9.14" fill="#1e1e1e"/><ellipse cx="123.84" cy="76.98" rx="1.15" ry="1.65" fill="none" stroke="#2e2e2e" stroke-width="0.6"/><rect x="118.45" y="85.72" width="1.00" height="3.00" fill="#2e2e2e"/><rect x="120.65" y="82.12" width="0.80" height="9.14" fill="#1e1e1e"/><ellipse cx="123.84" cy="87.12" rx="1.15" ry="1.65" fill="none" stroke="#2e2e2e" stroke-width="0.6"/><rect x="118.45" y="95.86" width="1.00" height="3.00" fill="#2e2e2e"/><rect x="120.65" y="92.26" width="0.80" height="9.14" fill="#1e1e1e"/><ellipse cx="123.84" cy="97.26" rx="1.15" ry="1.65" fill="none" stroke="#2e2e2e" stroke-width="0.6"/><rect x="118.45" y="106.00" width="1.00" height="3.00" fill="#2e2e2e"/><rect x="120.65" y="102.40" width="0.80" height="9.14" fill="#1e1e1e"/><ellipse cx="123.84" cy="107.40" rx="1.15" ry="1.65" fill="none" stroke="#2e2e2e" stroke-width="0.6"/><rect x="118.45" y="116.14" width="1.00" height="3.00" fill="#2e2e2e"/><rect x="120.65" y="112.54" width="0.80" height="9.14" fill="#1e1e1e"/><ellipse cx="123.84" cy="117.54" rx="1.15" ry="1.65" fill="none" stroke="#2e2e2e" stroke-width="0.6"/><rect x="284.59" y="24.88" width="1.00" height="3.00" fill="#2e2e2e"/><rect x="286.79" y="20.28" width="284.71" height="10.14" fill="#7f5fa6"/><rect x="286.79" y="20.28" width="284.71" height="0.90" fill="#5d4a78"/><circle cx="289.99" cy="26.38" r="1.55" fill="#1c1c1c"/><rect x="293.18" y="21.28" width="0.80" height="9.14" fill="#9678bc"/><circle cx="296.38" cy="26.38" r="1.55" fill="#1c1c1c"/><rect x="312.35" y="21.28" width="0.80" height="9.14" fill="#9678bc"/><circle cx="315.55" cy="26.38" r="1.55" fill="#1c1c1c"/><rect x="331.52" y="21.28" width="0.80" height="9.14" fill="#9678bc"/><circle cx="334.72" cy="26.38" r="1.55" fill="#1c1c1c"/><rect x="408.20" y="21.28" width="0.80" height="9.14" fill="#9678bc"/><circle cx="411.40" cy="26.38" r="1.55" fill="#1c1c1c"/><rect x="529.61" y="21.28" width="0.80" height="9.14" fill="#9678bc"/><circle cx="532.81" cy="26.38" r="1.55" fill="#1c1c1c"/><path d="M301.98 26.38 L311.15 26.38 M309.35 24.98 L311.15 26.38 L309.35 27.78" fill="none" stroke="#2a2a2a" stroke-width="0.75"/><path d="M321.15 26.38 L330.32 26.38 M328.52 24.98 L330.32 26.38 L328.52 27.78" fill="none" stroke="#2a2a2a" stroke-width="0.75"/><path d="M340.32 26.38 L407.00 26.38 M405.20 24.98 L407.00 26.38 L405.20 27.78" fill="none" stroke="#2a2a2a" stroke-width="0.75"/><path d="M417.00 26.38 L528.41 26.38 M526.61 24.98 L528.41 26.38 L526.61 27.78" fill="none" stroke="#2a2a2a" stroke-width="0.75"/><path d="M538.41 26.38 L571.50 26.38" stroke="#2a2a2a" stroke-width="0.75"/><rect x="284.59" y="35.02" width="1.00" height="3.00" fill="#2e2e2e"/><rect x="286.79" y="30.42" width="284.71" height="10.14" fill="#7f5fa6"/><rect x="286.79" y="30.42" width="284.71" height="0.90" fill="#5d4a78"/><circle cx="289.99" cy="36.52" r="1.55" fill="#1c1c1c"/><rect x="293.18" y="31.42" width="0.80" height="9.14" fill="#9678bc"/><circle cx="296.38" cy="36.52" r="1.55" fill="#1c1c1c"/><rect x="312.35" y="31.42" width="0.80" height="9.14" fill="#9678bc"/><circle cx="315.55" cy="36.52" r="1.55" fill="#1c1c1c"/><rect x="331.52" y="31.42" width="0.80" height="9.14" fill="#9678bc"/><circle cx="334.72" cy="36.52" r="1.55" fill="#1c1c1c"/><rect x="408.20" y="31.42" width="0.80" height="9.14" fill="#9678bc"/><circle cx="411.40" cy="36.52" r="1.55" fill="#1c1c1c"/><rect x="529.61" y="31.42" width="0.80" height="9.14" fill="#9678bc"/><circle cx="532.81" cy="36.52" r="1.55" fill="#1c1c1c"/><path d="M301.98 36.52 L311.15 36.52 M309.35 35.12 L311.15 36.52 L309.35 37.92" fill="none" stroke="#2a2a2a" stroke-width="0.75"/><path d="M321.15 36.52 L330.32 36.52 M328.52 35.12 L330.32 36.52 L328.52 37.92" fill="none" stroke="#2a2a2a" stroke-width="0.75"/><path d="M340.32 36.52 L407.00 36.52 M405.20 35.12 L407.00 36.52 L405.20 37.92" fill="none" stroke="#2a2a2a" stroke-width="0.75"/><path d="M417.00 36.52 L528.41 36.52 M526.61 35.12 L528.41 36.52 L526.61 37.92" fill="none" stroke="#2a2a2a" stroke-width="0.75"/><path d="M538.41 36.52 L571.50 36.52" stroke="#2a2a2a" stroke-width="0.75"/><rect x="284.59" y="45.16" width="1.00" height="3.00" fill="#2e2e2e"/><rect x="286.79" y="40.56" width="284.71" height="10.14" fill="#7f5fa6"/><rect x="286.79" y="40.56" width="284.71" height="0.90" fill="#5d4a78"/><circle cx="289.99" cy="46.66" r="1.55" fill="#1c1c1c"/><rect x="293.18" y="41.56" width="0.80" height="9.14" fill="#9678bc"/><circle cx="296.38" cy="46.66" r="1.55" fill="#1c1c1c"/><rect x="299.57" y="41.56" width="0.80" height="9.14" fill="#9678bc"/><circle cx="302.76" cy="46.66" r="1.55" fill="#1c1c1c"/><rect x="331.52" y="41.56" width="0.80" height="9.14" fill="#9678bc"/><circle cx="334.72" cy="46.66" r="1.55" fill="#1c1c1c"/><rect x="344.30" y="41.56" width="0.80" height="9.14" fill="#9678bc"/><circle cx="347.50" cy="46.66" r="1.55" fill="#1c1c1c"/><rect x="357.08" y="41.56" width="0.80" height="9.14" fill="#9678bc"/><circle cx="360.27" cy="46.66" r="1.55" fill="#1c1c1c"/><rect x="369.86" y="41.56" width="0.80" height="9.14" fill="#9678bc"/><circle cx="373.06" cy="46.66" r="1.55" fill="#1c1c1c"/><rect x="408.20" y="41.56" width="0.80" height="9.14" fill="#9678bc"/><circle cx="411.40" cy="46.66" r="1.55" fill="#1c1c1c"/><rect x="529.61" y="41.56" width="0.80" height="9.14" fill="#9678bc"/><circle cx="532.81" cy="46.66" r="1.55" fill="#1c1c1c"/><rect x="555.17" y="41.56" width="0.80" height="9.14" fill="#9678bc"/><circle cx="558.37" cy="46.66" r="1.55" fill="#1c1c1c"/><path d="M308.37 46.66 L330.32 46.66 M328.52 45.26 L330.32 46.66 L328.52 48.06" fill="none" stroke="#2a2a2a" stroke-width="0.75"/><path d="M341.70 45.36 L343.10 46.66 L341.70 47.96" fill="none" stroke="#2a2a2a" stroke-width="0.7"/><path d="M354.48 45.36 L355.88 46.66 L354.48 47.96" fill="none" stroke="#2a2a2a" stroke-width="0.7"/><path d="M367.26 45.36 L368.66 46.66 L367.26 47.96" fill="none" stroke="#2a2a2a" stroke-width="0.7"/><path d="M378.66 46.66 L407.00 46.66 M405.20 45.26 L407.00 46.66 L405.20 48.06" fill="none" stroke="#2a2a2a" stroke-width="0.75"/><path d="M417.00 46.66 L528.41 46.66 M526.61 45.26 L528.41 46.66 L526.61 48.06" fill="none" stroke="#2a2a2a" stroke-width="0.75"/><path d="M538.41 46.66 L553.97 46.66 M552.17 45.26 L553.97 46.66 L552.17 48.06" fill="none" stroke="#2a2a2a" stroke-width="0.75"/><path d="M563.97 46.66 L571.50 46.66" stroke="#2a2a2a" stroke-width="0.75"/><rect x="284.59" y="55.30" width="1.00" height="3.00" fill="#2e2e2e"/><rect x="286.79" y="50.70" width="284.71" height="10.14" fill="#7f5fa6"/><rect x="286.79" y="50.70" width="284.71" height="0.90" fill="#5d4a78"/><circle cx="289.99" cy="56.80" r="1.55" fill="#1c1c1c"/><rect x="293.18" y="51.70" width="0.80" height="9.14" fill="#9678bc"/><circle cx="296.38" cy="56.80" r="1.55" fill="#1c1c1c"/><rect x="312.35" y="51.70" width="0.80" height="9.14" fill="#9678bc"/><circle cx="315.55" cy="56.80" r="1.55" fill="#1c1c1c"/><rect x="331.52" y="51.70" width="0.80" height="9.14" fill="#9678bc"/><circle cx="334.72" cy="56.80" r="1.55" fill="#1c1c1c"/><rect x="369.86" y="51.70" width="0.80" height="9.14" fill="#9678bc"/><circle cx="373.06" cy="56.80" r="1.55" fill="#1c1c1c"/><rect x="408.20" y="51.70" width="0.80" height="9.14" fill="#9678bc"/><circle cx="411.40" cy="56.80" r="1.55" fill="#1c1c1c"/><rect x="446.54" y="51.70" width="0.80" height="9.14" fill="#9678bc"/><circle cx="449.74" cy="56.80" r="1.55" fill="#1c1c1c"/><rect x="497.66" y="51.70" width="0.80" height="9.14" fill="#9678bc"/><circle cx="500.86" cy="56.80" r="1.55" fill="#1c1c1c"/><rect x="529.61" y="51.70" width="0.80" height="9.14" fill="#9678bc"/><circle cx="532.81" cy="56.80" r="1.55" fill="#1c1c1c"/><rect x="555.17" y="51.70" width="0.80" height="9.14" fill="#9678bc"/><circle cx="558.37" cy="56.80" r="1.55" fill="#1c1c1c"/><path d="M301.98 56.80 L311.15 56.80 M309.35 55.40 L311.15 56.80 L309.35 58.20" fill="none" stroke="#2a2a2a" stroke-width="0.75"/><path d="M321.15 56.80 L330.32 56.80 M328.52 55.40 L330.32 56.80 L328.52 58.20" fill="none" stroke="#2a2a2a" stroke-width="0.75"/><path d="M340.32 56.80 L368.66 56.80 M366.86 55.40 L368.66 56.80 L366.86 58.20" fill="none" stroke="#2a2a2a" stroke-width="0.75"/><path d="M378.66 56.80 L407.00 56.80 M405.20 55.40 L407.00 56.80 L405.20 58.20" fill="none" stroke="#2a2a2a" stroke-width="0.75"/><path d="M417.00 56.80 L445.34 56.80 M443.54 55.40 L445.34 56.80 L443.54 58.20" fill="none" stroke="#2a2a2a" stroke-width="0.75"/><path d="M455.34 56.80 L496.46 56.80 M494.66 55.40 L496.46 56.80 L494.66 58.20" fill="none" stroke="#2a2a2a" stroke-width="0.75"/><path d="M506.46 56.80 L528.41 56.80 M526.61 55.40 L528.41 56.80 L526.61 58.20" fill="none" stroke="#2a2a2a" stroke-width="0.75"/><path d="M538.41 56.80 L553.97 56.80 M552.17 55.40 L553.97 56.80 L552.17 58.20" fill="none" stroke="#2a2a2a" stroke-width="0.75"/><path d="M563.97 56.80 L571.50 56.80" stroke="#2a2a2a" stroke-width="0.75"/><rect x="284.59" y="75.58" width="1.00" height="3.00" fill="#2e2e2e"/><rect x="286.79" y="70.98" width="284.71" height="10.14" fill="#7f5fa6"/><rect x="286.79" y="70.98" width="284.71" height="0.90" fill="#5d4a78"/><circle cx="289.99" cy="77.08" r="1.55" fill="#1c1c1c"/><rect x="293.18" y="71.98" width="0.80" height="9.14" fill="#9678bc"/><circle cx="296.38" cy="77.08" r="1.55" fill="#1c1c1c"/><rect x="312.35" y="71.98" width="0.80" height="9.14" fill="#9678bc"/><circle cx="315.55" cy="77.08" r="1.55" fill="#1c1c1c"/><rect x="331.52" y="71.98" width="0.80" height="9.14" fill="#9678bc"/><circle cx="334.72" cy="77.08" r="1.55" fill="#1c1c1c"/><rect x="408.20" y="71.98" width="0.80" height="9.14" fill="#9678bc"/><circle cx="411.40" cy="77.08" r="1.55" fill="#1c1c1c"/><rect x="529.61" y="71.98" width="0.80" height="9.14" fill="#9678bc"/><circle cx="532.81" cy="77.08" r="1.55" fill="#1c1c1c"/><path d="M301.98 77.08 L311.15 77.08 M309.35 75.68 L311.15 77.08 L309.35 78.48" fill="none" stroke="#2a2a2a" stroke-width="0.75"/><path d="M321.15 77.08 L330.32 77.08 M328.52 75.68 L330.32 77.08 L328.52 78.48" fill="none" stroke="#2a2a2a" stroke-width="0.75"/><path d="M340.32 77.08 L407.00 77.08 M405.20 75.68 L407.00 77.08 L405.20 78.48" fill="none" stroke="#2a2a2a" stroke-width="0.75"/><path d="M417.00 77.08 L528.41 77.08 M526.61 75.68 L528.41 77.08 L526.61 78.48" fill="none" stroke="#2a2a2a" stroke-width="0.75"/><path d="M538.41 77.08 L571.50 77.08" stroke="#2a2a2a" stroke-width="0.75"/><rect x="284.59" y="106.00" width="1.00" height="3.00" fill="#2e2e2e"/><rect x="286.79" y="101.40" width="284.71" height="10.14" fill="#7f5fa6"/><rect x="286.79" y="101.40" width="284.71" height="0.90" fill="#5d4a78"/><circle cx="289.99" cy="107.50" r="1.55" fill="#1c1c1c"/><rect x="293.18" y="102.40" width="0.80" height="9.14" fill="#9678bc"/><circle cx="296.38" cy="107.50" r="1.55" fill="#1c1c1c"/><rect x="312.35" y="102.40" width="0.80" height="9.14" fill="#9678bc"/><circle cx="315.55" cy="107.50" r="1.55" fill="#1c1c1c"/><rect x="331.52" y="102.40" width="0.80" height="9.14" fill="#9678bc"/><circle cx="334.72" cy="107.50" r="1.55" fill="#1c1c1c"/><rect x="408.20" y="102.40" width="0.80" height="9.14" fill="#9678bc"/><circle cx="411.40" cy="107.50" r="1.55" fill="#1c1c1c"/><rect x="440.15" y="102.40" width="0.80" height="9.14" fill="#9678bc"/><circle cx="443.35" cy="107.50" r="1.55" fill="#1c1c1c"/><rect x="446.54" y="102.40" width="0.80" height="9.14" fill="#9678bc"/><circle cx="449.74" cy="107.50" r="1.55" fill="#1c1c1c"/><rect x="452.93" y="102.40" width="0.80" height="9.14" fill="#9678bc"/><circle cx="456.13" cy="107.50" r="1.55" fill="#1c1c1c"/><rect x="478.49" y="102.40" width="0.80" height="9.14" fill="#9678bc"/><circle cx="481.69" cy="107.50" r="1.55" fill="#1c1c1c"/><rect x="484.88" y="102.40" width="0.80" height="9.14" fill="#9678bc"/><circle cx="488.08" cy="107.50" r="1.55" fill="#1c1c1c"/><rect x="491.27" y="102.40" width="0.80" height="9.14" fill="#9678bc"/><circle cx="494.47" cy="107.50" r="1.55" fill="#1c1c1c"/><rect x="529.61" y="102.40" width="0.80" height="9.14" fill="#9678bc"/><circle cx="532.81" cy="107.50" r="1.55" fill="#1c1c1c"/><rect x="536.00" y="102.40" width="0.80" height="9.14" fill="#9678bc"/><circle cx="539.20" cy="107.50" r="1.55" fill="#1c1c1c"/><rect x="561.56" y="102.40" width="0.80" height="9.14" fill="#9678bc"/><circle cx="564.75" cy="107.50" r="1.55" fill="#1c1c1c"/><rect x="567.95" y="102.40" width="0.80" height="9.14" fill="#9678bc"/><circle cx="571.15" cy="107.50" r="1.55" fill="#1c1c1c"/><path d="M301.98 107.50 L311.15 107.50 M309.35 106.10 L311.15 107.50 L309.35 108.90" fill="none" stroke="#2a2a2a" stroke-width="0.75"/><path d="M321.15 107.50 L330.32 107.50 M328.52 106.10 L330.32 107.50 L328.52 108.90" fill="none" stroke="#2a2a2a" stroke-width="0.75"/><path d="M340.32 107.50 L407.00 107.50 M405.20 106.10 L407.00 107.50 L405.20 108.90" fill="none" stroke="#2a2a2a" stroke-width="0.75"/><path d="M417.00 107.50 L438.95 107.50 M437.15 106.10 L438.95 107.50 L437.15 108.90" fill="none" stroke="#2a2a2a" stroke-width="0.75"/><path d="M461.73 107.50 L477.29 107.50 M475.49 106.10 L477.29 107.50 L475.49 108.90" fill="none" stroke="#2a2a2a" stroke-width="0.75"/><path d="M500.07 107.50 L528.41 107.50 M526.61 106.10 L528.41 107.50 L526.61 108.90" fill="none" stroke="#2a2a2a" stroke-width="0.75"/><path d="M544.80 107.50 L560.36 107.50 M558.56 106.10 L560.36 107.50 L558.56 108.90" fill="none" stroke="#2a2a2a" stroke-width="0.75"/><path d="M576.75 107.50 L571.50 107.50" stroke="#2a2a2a" stroke-width="0.75"/><rect x="271.81" y="85.72" width="1.00" height="3.00" fill="#2e2e2e"/><rect x="274.01" y="82.12" width="0.80" height="9.14" fill="#3a3a3a"/><ellipse cx="277.21" cy="87.12" rx="1.15" ry="1.65" fill="none" stroke="#2e2e2e" stroke-width="0.6"/><rect x="297.37" y="85.72" width="1.00" height="3.00" fill="#2e2e2e"/><rect x="299.57" y="81.12" width="19.17" height="10.14" fill="#7f5fa6"/><rect x="299.57" y="81.12" width="19.17" height="0.90" fill="#5d4a78"/><circle cx="302.76" cy="87.22" r="1.55" fill="#1c1c1c"/><path d="M305.76 87.22 L317.24 87.22" stroke="#2a2a2a" stroke-width="0.75" stroke-dasharray="1.6 1.4"/><rect x="318.74" y="82.12" width="0.80" height="9.14" fill="#3a3a3a"/><ellipse cx="321.94" cy="87.12" rx="1.15" ry="1.65" fill="none" stroke="#2e2e2e" stroke-width="0.6"/><rect x="325.13" y="82.12" width="0.80" height="9.14" fill="#3a3a3a"/><ellipse cx="328.33" cy="87.12" rx="1.15" ry="1.65" fill="none" stroke="#2e2e2e" stroke-width="0.6"/><rect x="399.61" y="85.72" width="1.00" height="3.00" fill="#2e2e2e"/><rect x="401.81" y="82.12" width="0.80" height="9.14" fill="#3a3a3a"/><ellipse cx="405.00" cy="87.12" rx="1.15" ry="1.65" fill="none" stroke="#2e2e2e" stroke-width="0.6"/><rect x="450.73" y="85.72" width="1.00" height="3.00" fill="#2e2e2e"/><rect x="452.93" y="82.12" width="0.80" height="9.14" fill="#3a3a3a"/><ellipse cx="456.13" cy="87.12" rx="1.15" ry="1.65" fill="none" stroke="#2e2e2e" stroke-width="0.6"/><rect x="459.32" y="82.12" width="0.80" height="9.14" fill="#3a3a3a"/><ellipse cx="462.51" cy="87.12" rx="1.15" ry="1.65" fill="none" stroke="#2e2e2e" stroke-width="0.6"/><rect x="465.71" y="81.12" width="19.17" height="10.14" fill="#7f5fa6"/><rect x="465.71" y="81.12" width="19.17" height="0.90" fill="#5d4a78"/><circle cx="468.91" cy="87.22" r="1.55" fill="#1c1c1c"/><circle cx="475.29" cy="87.22" r="1.55" fill="#1c1c1c"/><circle cx="481.69" cy="87.22" r="1.55" fill="#1c1c1c"/><rect x="472.10" y="82.12" width="0.80" height="9.14" fill="#9678bc"/><rect x="478.49" y="82.12" width="0.80" height="9.14" fill="#9678bc"/><rect x="484.88" y="82.02" width="6.39" height="9.24" fill="#a8a8a8"/><circle cx="488.08" cy="87.22" r="1.55" fill="#1c1c1c"/><rect x="491.27" y="82.12" width="0.80" height="9.14" fill="#3a3a3a"/><ellipse cx="494.47" cy="87.12" rx="1.15" ry="1.65" fill="none" stroke="#2e2e2e" stroke-width="0.6"/><rect x="559.36" y="85.72" width="1.00" height="3.00" fill="#2e2e2e"/><rect x="561.56" y="82.12" width="0.80" height="9.14" fill="#3a3a3a"/><ellipse cx="564.75" cy="87.12" rx="1.15" ry="1.65" fill="none" stroke="#2e2e2e" stroke-width="0.6"/><rect x="567.95" y="82.12" width="0.80" height="9.14" fill="#3a3a3a"/><ellipse cx="571.15" cy="87.12" rx="1.15" ry="1.65" fill="none" stroke="#2e2e2e" stroke-width="0.6"/><rect x="271.81" y="95.86" width="1.00" height="3.00" fill="#2e2e2e"/><rect x="274.01" y="92.26" width="0.80" height="9.14" fill="#3a3a3a"/><ellipse cx="277.21" cy="97.26" rx="1.15" ry="1.65" fill="none" stroke="#2e2e2e" stroke-width="0.6"/><rect x="284.59" y="95.86" width="1.00" height="3.00" fill="#2e2e2e"/><rect x="286.79" y="91.26" width="31.95" height="10.14" fill="#7f5fa6"/><rect x="286.79" y="91.26" width="31.95" height="0.90" fill="#5d4a78"/><circle cx="289.99" cy="97.36" r="1.55" fill="#1c1c1c"/><path d="M295.59 97.36 L317.54 97.36 M315.74 95.96 L317.54 97.36 L315.74 98.76" fill="none" stroke="#2a2a2a" stroke-width="0.75"/><rect x="318.74" y="92.16" width="6.39" height="9.24" fill="#a8a8a8"/><circle cx="321.94" cy="97.36" r="1.55" fill="#1c1c1c"/><rect x="325.13" y="92.26" width="0.80" height="9.14" fill="#3a3a3a"/><ellipse cx="328.33" cy="97.26" rx="1.15" ry="1.65" fill="none" stroke="#2e2e2e" stroke-width="0.6"/><rect x="450.73" y="95.86" width="1.00" height="3.00" fill="#2e2e2e"/><rect x="452.93" y="91.26" width="31.95" height="10.14" fill="#7f5fa6"/><rect x="452.93" y="91.26" width="31.95" height="0.90" fill="#5d4a78"/><circle cx="456.13" cy="97.36" r="1.55" fill="#1c1c1c"/><path d="M461.73 97.36 L483.68 97.36 M481.88 95.96 L483.68 97.36 L481.88 98.76" fill="none" stroke="#2a2a2a" stroke-width="0.75"/><rect x="484.88" y="92.16" width="6.39" height="9.24" fill="#a8a8a8"/><circle cx="488.08" cy="97.36" r="1.55" fill="#1c1c1c"/><rect x="491.27" y="92.26" width="0.80" height="9.14" fill="#3a3a3a"/><ellipse cx="494.47" cy="97.26" rx="1.15" ry="1.65" fill="none" stroke="#2e2e2e" stroke-width="0.6"/><rect x="559.36" y="95.86" width="1.00" height="3.00" fill="#2e2e2e"/><rect x="561.56" y="91.26" width="9.94" height="10.14" fill="#7f5fa6"/><rect x="561.56" y="91.26" width="9.94" height="0.90" fill="#5d4a78"/><circle cx="564.75" cy="97.36" r="1.55" fill="#1c1c1c"/><path d="M569.75 97.36 L571.50 97.36" stroke="#2a2a2a" stroke-width="0.75"/></svg>
<div class="a" style="left:681.2px;top:375.5px;width:1px;height:162px;background:#3f86d6;"></div>
<div class="a" style="left:678.9px;top:375.5px;width:6.1px;height:16.8px;background:#3a7fd0;border-radius:1.5px 1.5px 2px 2px"></div>
<div class="a" style="left:854.5px;top:392.5px;width:4.5px;height:145px;background:#4c4c4c;"></div>
<div class="a" style="left:854.5px;top:393.3px;width:4.2px;height:52px;background:#d8d8d8;"></div>
<div class="a" style="left:860px;top:21px;width:163px;height:7px;background:#2f2f2f;"></div>
<svg class="a" style="left:1013px;top:21px;" width="8" height="6" viewBox="0 0 8 6"><path d="M1.5 2 L3 3.2 L1.5 4.4 M4 2 L5.5 3.2 L4 4.4" fill="none" stroke="#c0c0c0" stroke-width="0.7"/></svg>
<div class="a" style="left:860px;top:27.5px;width:163px;height:9px;background:#2b2b2b;"></div>
<div class="a" style="left:884.6px;top:27.5px;width:33.6px;height:9.5px;background:#323232;"></div>
<div class="t" style="left:864.32px;top:28.75px;font-size:6.2px;color:#7a7a7a;transform:scaleX(0.816);">Assets</div>
<div class="t" style="left:887.62px;top:28.75px;font-size:6.2px;color:#e6e6e6;font-weight:bold;transform:scaleX(0.845);">Properties</div>
<div class="t" style="left:921.30px;top:28.75px;font-size:6.2px;color:#7a7a7a;transform:scaleX(0.940);">Color</div>
<div class="t" style="left:943.47px;top:28.75px;font-size:6.2px;color:#7a7a7a;transform:scaleX(1.043);">Align</div>
<div class="t" style="left:965.60px;top:28.75px;font-size:6.2px;color:#7a7a7a;transform:scaleX(0.930);">Library</div>
<div class="a" style="left:939.6px;top:28px;width:1px;height:8.5px;background:#262626;"></div>
<div class="a" style="left:961.7px;top:28px;width:1px;height:8.5px;background:#262626;"></div>
<div class="a" style="left:988px;top:28px;width:1px;height:8.5px;background:#262626;"></div>
<svg class="a" style="left:1013px;top:29px;" width="8" height="6" viewBox="0 0 8 6"><path d="M1 1 L7 1 M1 2.5 L7 2.5 M1 4 L7 4" stroke="#7a7a7a" stroke-width="1"/></svg>
<div class="t" style="left:888.78px;top:47.54px;font-size:6.8px;color:#6c6c6c;transform:scaleX(0.917);">Tool</div>
<div class="a" style="left:909.2px;top:43px;width:1px;height:14px;background:#4a4a4a;"></div>
<div class="t" style="left:915.78px;top:47.54px;font-size:6.8px;color:#6c6c6c;transform:scaleX(0.912);">Object</div>
<div class="a" style="left:941.2px;top:43px;width:1px;height:14px;background:#4a4a4a;"></div>
<div class="t" style="left:948.39px;top:47.54px;font-size:6.8px;color:#6c6c6c;transform:scaleX(0.871);">Frame</div>
<div class="a" style="left:972.9px;top:43.1px;width:28.7px;height:14.4px;background:#4f4f4f;border-radius:2.5px"></div>
<div class="t" style="left:981.59px;top:47.74px;font-size:6.8px;color:#ececec;transform:scaleX(0.878);">Doc</div>
<div class="a" style="left:860px;top:61px;width:163px;height:1.2px;background:#262626;"></div>
<svg class="a" style="left:870px;top:63px;" width="12" height="11" viewBox="0 0 12 11"><rect x="1.2" y="1.5" width="9" height="8" rx="1" fill="none" stroke="#bdbdbd" stroke-width="0.9"/><path d="M3 7.5 L4.4 3.5 L5.8 7.5 M3.5 6 L5.3 6 M6.8 7.5 L6.8 5 Q8.6 4.2 8.6 5.5 L8.6 7.5" fill="none" stroke="#bdbdbd" stroke-width="0.7"/></svg>
<div class="t" style="left:891.80px;top:66.64px;font-size:6.8px;color:#d6d6d6;transform:scaleX(0.858);">Dino Hatching Scaled Down.fla</div>
<div class="t" style="left:891.79px;top:77.64px;font-size:6.8px;color:#d6d6d6;transform:scaleX(0.875);">Document</div>
<div class="a" style="left:860px;top:89.4px;width:163px;height:1.2px;background:#262626;"></div>
<div class="a" style="left:871px;top:95px;width:13px;height:13px;background:#262626;border:1px solid #4c4c4c;border-radius:2.5px"></div>
<div class="a" style="left:890px;top:95px;width:13px;height:13px;background:#262626;border:1px solid #4c4c4c;border-radius:2.5px"></div>
<div class="a" style="left:909.2px;top:95px;width:13px;height:13px;background:#262626;border:1px solid #4c4c4c;border-radius:2.5px"></div>
<div class="a" style="left:928.4px;top:95px;width:13px;height:13px;background:#262626;border:1px solid #4c4c4c;border-radius:2.5px"></div>
<svg class="a" style="left:871px;top:95px;" width="13" height="13" viewBox="0 0 13 13"><path d="M3.8 10.5 L3.8 6.8 Q3.8 3.6 6.5 3.6 Q9.2 3.6 9.2 6.8 L9.2 10.5" fill="none" stroke="#f0f0f0" stroke-width="1.9"/></svg>
<svg class="a" style="left:890px;top:95px;" width="13" height="13" viewBox="0 0 13 13"><path d="M3.5 2.5 L3.5 10 M2 4 L5 4" stroke="#dcdcdc" stroke-width="0.9"/><path d="M6 5.5 L10 5.5 M10 7.5 L6.5 7.5 L6.5 9.8 L10 9.8" fill="none" stroke="#dcdcdc" stroke-width="0.9"/></svg>
<svg class="a" style="left:909px;top:95px;" width="13" height="13" viewBox="0 0 13 13"><path d="M4 10.5 L4 4 L10.5 4" fill="none" stroke="#f0f0f0" stroke-width="1.8"/></svg>
<svg class="a" style="left:928px;top:95px;" width="13" height="13" viewBox="0 0 13 13"><path d="M4.8 6 L4.8 4.8 Q4.8 3 6.5 3 Q8.2 3 8.2 4.8 L8.2 6" fill="none" stroke="#f0f0f0" stroke-width="0.9"/><rect x="4" y="5.8" width="5" height="4" fill="#f0f0f0"/><rect x="6.1" y="7" width="0.8" height="1.5" fill="#333"/></svg>
<div class="a" style="left:860px;top:112px;width:163px;height:1.2px;background:#262626;"></div>
<svg class="a" style="left:869.4px;top:117.5px;" width="8" height="6" viewBox="0 0 8 6"><path d="M1.2 1.5 L4 4.3 L6.8 1.5" fill="none" stroke="#d0d0d0" stroke-width="1.1"/></svg>
<div class="t" style="left:881.80px;top:117.81px;font-size:6.6px;color:#d8d8d8;font-weight:bold;transform:scaleX(0.867);">Publish Settings</div>
<div class="t" style="left:871.18px;top:134.21px;font-size:6.6px;color:#c8c8c8;transform:scaleX(0.948);">Profile</div>
<div class="a" style="left:895.2px;top:130.6px;width:116.6px;height:12px;background:#222222;border:1px solid #4e4e4e;border-radius:2px"></div>
<div class="t" style="left:900.41px;top:134.58px;font-size:6.4px;color:#d8d8d8;transform:scaleX(0.853);">Default</div>
<svg class="a" style="left:1000px;top:134px;" width="8" height="6" viewBox="0 0 8 6"><path d="M1.2 1.5 L4 4.3 L6.8 1.5" fill="none" stroke="#d0d0d0" stroke-width="1.1"/></svg>
<div class="a" style="left:871px;top:145.8px;width:140.8px;height:11.4px;background:#262626;border:1px solid #4e4e4e;border-radius:2px"></div>
<div class="t" style="left:923.39px;top:149.21px;font-size:6.6px;color:#d8d8d8;transform:scaleX(0.912);">More settings</div>
<div class="a" style="left:860px;top:162px;width:163px;height:1.2px;background:#262626;"></div>
<svg class="a" style="left:869.2px;top:168px;" width="8" height="6" viewBox="0 0 8 6"><path d="M1.2 1.5 L4 4.3 L6.8 1.5" fill="none" stroke="#d0d0d0" stroke-width="1.1"/></svg>
<div class="t" style="left:882.50px;top:168.61px;font-size:6.6px;color:#d8d8d8;font-weight:bold;transform:scaleX(0.857);">Document Settings</div>
<div class="t" style="left:871.55px;top:184.71px;font-size:6.6px;color:#b0b0b0;transform:scaleX(1.074);">W</div>
<div class="t" style="left:884.58px;top:184.71px;font-size:6.6px;color:#5aa0e8;transform:scaleX(0.957);">640</div>
<div class="t" style="left:871.70px;top:197.21px;font-size:6.6px;color:#b0b0b0;transform:scaleX(1.278);">H</div>
<div class="t" style="left:882.99px;top:197.21px;font-size:6.6px;color:#5aa0e8;transform:scaleX(0.929);">480</div>
<svg class="a" style="left:905px;top:184px;" width="10" height="18" viewBox="0 0 10 18"><path d="M2 2.5 L6 2.5 L6 6 M2 16 L6 16 L6 12.5" fill="none" stroke="#bcbcbc" stroke-width="0.7"/></svg>
<svg class="a" style="left:908px;top:188px;" width="8" height="9" viewBox="0 0 8 9"><path d="M2.8 4 L2.8 2.8 Q2.8 1.2 4.3 1.2 Q5.8 1.2 5.8 2.8" fill="none" stroke="#cfcfcf" stroke-width="0.8"/><rect x="2" y="4" width="4.8" height="4" fill="#cfcfcf"/><rect x="4" y="5.2" width="0.8" height="1.5" fill="#333"/></svg>
<div class="a" style="left:930px;top:180.4px;width:81.7px;height:11.8px;background:#262626;border:1px solid #4e4e4e;border-radius:2px"></div>
<div class="t" style="left:950.29px;top:184.21px;font-size:6.6px;color:#d8d8d8;transform:scaleX(0.908);">Match contents</div>
<div class="a" style="left:930.3px;top:197.2px;width:6px;height:6px;background:#222;border:1px solid #c8c8c8;border-radius:0.5px"></div>
<div class="t" style="left:941.09px;top:197.81px;font-size:6.6px;color:#c8c8c8;transform:scaleX(0.889);">Scale Content</div>
<div class="a" style="left:930.3px;top:211.1px;width:6px;height:6px;background:#222;border:1px solid #c8c8c8;border-radius:0.5px"></div>
<div class="t" style="left:941.09px;top:211.71px;font-size:6.6px;color:#c8c8c8;transform:scaleX(0.906);">Apply to pasteboard</div>
<div class="a" style="left:930.3px;top:224.9px;width:6px;height:6px;background:#222;border:1px solid #c8c8c8;border-radius:0.5px"></div>
<div class="t" style="left:941.11px;top:225.51px;font-size:6.6px;color:#c8c8c8;transform:scaleX(0.840);">Scale Spans</div>
<div class="t" style="left:871.81px;top:212.81px;font-size:6.6px;color:#b0b0b0;transform:scaleX(0.835);">Stage</div>
<div class="a" style="left:898px;top:210px;width:19.8px;height:9.5px;background:#66ccff;border-radius:1.5px"></div>
<div class="t" style="left:871.80px;top:224.61px;font-size:6.6px;color:#b0b0b0;transform:scaleX(0.849);">FPS</div>
<div class="t" style="left:898.69px;top:224.61px;font-size:6.6px;color:#5aa0e8;transform:scaleX(0.930);">30</div>
<div class="a" style="left:871.4px;top:235.7px;width:140.3px;height:12.3px;background:#262626;border:1px solid #4e4e4e;border-radius:2px"></div>
<div class="t" style="left:923.39px;top:239.61px;font-size:6.6px;color:#d8d8d8;transform:scaleX(0.912);">More settings</div>
<div class="a" style="left:860px;top:252.6px;width:163px;height:1.4px;background:#262626;"></div>
<svg class="a" style="left:870px;top:257.5px;" width="6" height="8" viewBox="0 0 6 8"><path d="M1.5 1.2 L4.3 4 L1.5 6.8" fill="none" stroke="#d0d0d0" stroke-width="1.1"/></svg>
<div class="t" style="left:881.79px;top:259.01px;font-size:6.6px;color:#d0d0d0;transform:scaleX(0.914);">SWF History</div>
<div class="a" style="left:860px;top:269.3px;width:163px;height:1.2px;background:#262626;"></div>
<svg class="a" style="left:870px;top:273.5px;" width="6" height="8" viewBox="0 0 6 8"><path d="M1.5 1.2 L4.3 4 L1.5 6.8" fill="none" stroke="#d0d0d0" stroke-width="1.1"/></svg>
<div class="t" style="left:881.78px;top:275.01px;font-size:6.6px;color:#d0d0d0;transform:scaleX(0.942);">Accessibility</div>
<div class="a" style="left:1002px;top:274px;width:12.6px;height:6.2px;background:#d6d6d6;border-radius:3.1px"></div>
<div class="a" style="left:1009.2px;top:275.2px;width:3.8px;height:3.8px;background:#2a2a2a;border-radius:2px"></div>
<div class="a" style="left:860px;top:284.5px;width:163px;height:1.2px;background:#262626;"></div>
</body></html>
